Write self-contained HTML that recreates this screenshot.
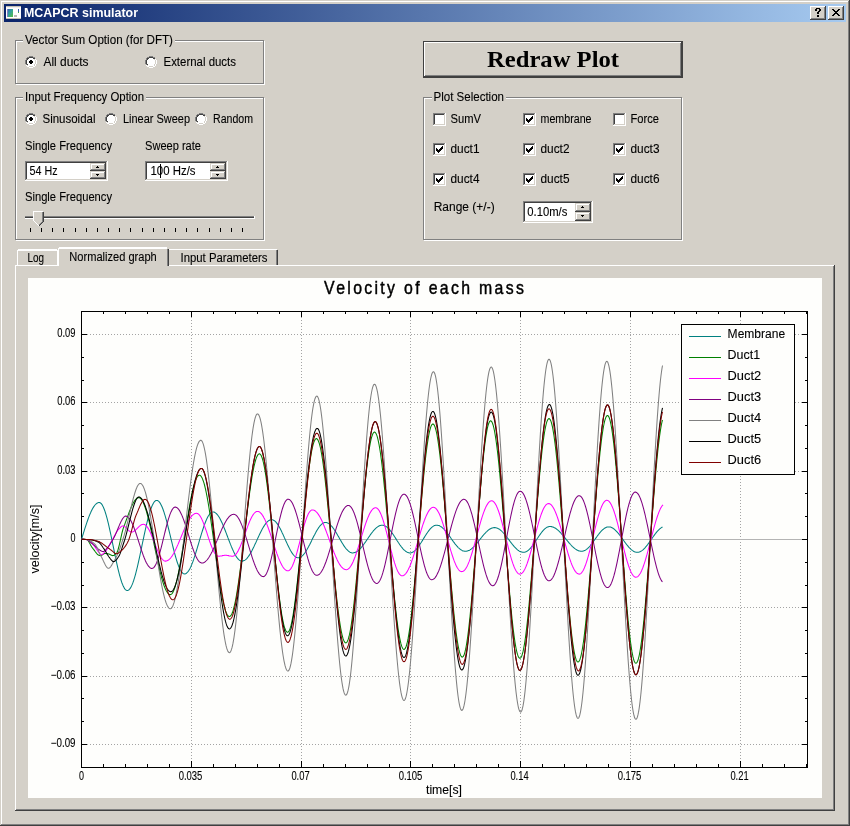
<!DOCTYPE html>
<html><head><meta charset="utf-8"><title>MCAPCR simulator</title>
<style>html,body{margin:0;padding:0;width:850px;height:826px;overflow:hidden;background:#d4d0c8;} svg{display:block;} text{shape-rendering:auto;}</style>
</head><body><div style="will-change:transform"><svg width="850" height="826" viewBox="0 0 850 826" shape-rendering="crispEdges"><rect x="0" y="0" width="850" height="826" fill="#d4d0c8"/><rect x="1" y="1" width="848" height="824" fill="#ffffff"/><rect x="2" y="2" width="846" height="822" fill="#808080"/><rect x="2" y="2" width="845" height="821" fill="#d4d0c8"/><rect x="849" y="0" width="1" height="826" fill="#404040"/><rect x="0" y="825" width="850" height="1" fill="#404040"/><rect x="848" y="1" width="1" height="824" fill="#808080"/><rect x="1" y="824" width="848" height="1" fill="#808080"/><rect x="1" y="1" width="847" height="1" fill="#ffffff"/><rect x="1" y="1" width="1" height="823" fill="#ffffff"/><rect x="2" y="2" width="846" height="822" fill="#d4d0c8"/><defs><linearGradient id="tg" x1="0" x2="1" y1="0" y2="0"><stop offset="0" stop-color="#0a246a"/><stop offset="1" stop-color="#a6caf0"/></linearGradient></defs><rect x="4" y="4" width="842" height="18" fill="url(#tg)"/><rect x="6" y="6" width="15" height="13" fill="#ffffff"/><rect x="6" y="6" width="15" height="1" fill="#c4c0b4"/><rect x="6" y="18" width="15" height="1" fill="#c4c0b4"/><rect x="7" y="7" width="13" height="1" fill="#f0f0f0"/><defs><linearGradient id="ig" x1="0" y1="0" x2="1" y2="1"><stop offset="0" stop-color="#3a5ab8"/><stop offset="0.45" stop-color="#30a0a0"/><stop offset="1" stop-color="#58c040"/></linearGradient></defs><rect x="7" y="9" width="6" height="8" fill="url(#ig)"/><rect x="7" y="9" width="1" height="8" fill="#8080c0"/><rect x="18" y="9" width="1" height="4" fill="#3a60b0"/><rect x="18" y="12" width="1" height="1" fill="#40b040"/><rect x="14" y="15" width="3" height="2" fill="#b8b8b8"/><text x="24" y="17" font-family="Liberation Sans" font-size="12" font-weight="bold" fill="#fff" text-anchor="start" textLength="114" lengthAdjust="spacingAndGlyphs" >MCAPCR simulator</text><rect x="810" y="6" width="16" height="14" fill="#404040"/><rect x="810" y="6" width="15" height="13" fill="#ffffff"/><rect x="811" y="7" width="14" height="12" fill="#808080"/><rect x="811" y="7" width="13" height="11" fill="#d4d0c8"/><rect x="828" y="6" width="16" height="14" fill="#404040"/><rect x="828" y="6" width="15" height="13" fill="#ffffff"/><rect x="829" y="7" width="14" height="12" fill="#808080"/><rect x="829" y="7" width="13" height="11" fill="#d4d0c8"/><rect x="16" y="41" width="249" height="44" fill="#ffffff"/><rect x="17" y="42" width="247" height="42" fill="#d4d0c8"/><rect x="15" y="40" width="249" height="1" fill="#808080"/><rect x="15" y="40" width="1" height="44" fill="#808080"/><rect x="15" y="83" width="249" height="1" fill="#808080"/><rect x="263" y="40" width="1" height="44" fill="#808080"/><rect x="23" y="38" width="152" height="5" fill="#d4d0c8"/><text x="25" y="44" font-family="Liberation Sans" font-size="12" font-weight="normal" fill="#000" text-anchor="start" textLength="148" lengthAdjust="spacingAndGlyphs" stroke="#000" stroke-width="0.1" >Vector Sum Option (for DFT)</text><rect x="29" y="56" width="4" height="1" fill="#808080"/><rect x="27" y="57" width="2" height="1" fill="#808080"/><rect x="29" y="57" width="4" height="1" fill="#404040"/><rect x="33" y="57" width="2" height="1" fill="#808080"/><rect x="26" y="58" width="1" height="1" fill="#808080"/><rect x="27" y="58" width="2" height="1" fill="#404040"/><rect x="29" y="58" width="4" height="1" fill="#ffffff"/><rect x="33" y="58" width="2" height="1" fill="#404040"/><rect x="35" y="58" width="1" height="1" fill="#d4d0c8"/><rect x="26" y="59" width="1" height="1" fill="#808080"/><rect x="27" y="59" width="1" height="1" fill="#404040"/><rect x="28" y="59" width="6" height="1" fill="#ffffff"/><rect x="34" y="59" width="1" height="1" fill="#d4d0c8"/><rect x="35" y="59" width="1" height="1" fill="#ffffff"/><rect x="25" y="60" width="1" height="1" fill="#808080"/><rect x="26" y="60" width="1" height="1" fill="#404040"/><rect x="27" y="60" width="8" height="1" fill="#ffffff"/><rect x="35" y="60" width="1" height="1" fill="#d4d0c8"/><rect x="36" y="60" width="1" height="1" fill="#ffffff"/><rect x="25" y="61" width="1" height="1" fill="#808080"/><rect x="26" y="61" width="1" height="1" fill="#404040"/><rect x="27" y="61" width="8" height="1" fill="#ffffff"/><rect x="35" y="61" width="1" height="1" fill="#d4d0c8"/><rect x="36" y="61" width="1" height="1" fill="#ffffff"/><rect x="25" y="62" width="1" height="1" fill="#808080"/><rect x="26" y="62" width="1" height="1" fill="#404040"/><rect x="27" y="62" width="8" height="1" fill="#ffffff"/><rect x="35" y="62" width="1" height="1" fill="#d4d0c8"/><rect x="36" y="62" width="1" height="1" fill="#ffffff"/><rect x="25" y="63" width="1" height="1" fill="#808080"/><rect x="26" y="63" width="1" height="1" fill="#404040"/><rect x="27" y="63" width="8" height="1" fill="#ffffff"/><rect x="35" y="63" width="1" height="1" fill="#d4d0c8"/><rect x="36" y="63" width="1" height="1" fill="#ffffff"/><rect x="26" y="64" width="1" height="1" fill="#808080"/><rect x="27" y="64" width="1" height="1" fill="#404040"/><rect x="28" y="64" width="6" height="1" fill="#ffffff"/><rect x="34" y="64" width="1" height="1" fill="#d4d0c8"/><rect x="35" y="64" width="1" height="1" fill="#ffffff"/><rect x="26" y="65" width="1" height="1" fill="#ffffff"/><rect x="27" y="65" width="1" height="1" fill="#d4d0c8"/><rect x="28" y="65" width="6" height="1" fill="#ffffff"/><rect x="34" y="65" width="1" height="1" fill="#d4d0c8"/><rect x="35" y="65" width="1" height="1" fill="#ffffff"/><rect x="27" y="66" width="2" height="1" fill="#ffffff"/><rect x="29" y="66" width="4" height="1" fill="#d4d0c8"/><rect x="33" y="66" width="2" height="1" fill="#ffffff"/><rect x="29" y="67" width="4" height="1" fill="#ffffff"/><rect x="30" y="60" width="2" height="1" fill="#000"/><rect x="29" y="61" width="4" height="1" fill="#000"/><rect x="29" y="62" width="4" height="1" fill="#000"/><rect x="30" y="63" width="2" height="1" fill="#000"/><text x="43.5" y="66" font-family="Liberation Sans" font-size="12" font-weight="normal" fill="#000" text-anchor="start" textLength="45" lengthAdjust="spacingAndGlyphs" stroke="#000" stroke-width="0.1" >All ducts</text><rect x="149" y="56" width="4" height="1" fill="#808080"/><rect x="147" y="57" width="2" height="1" fill="#808080"/><rect x="149" y="57" width="4" height="1" fill="#404040"/><rect x="153" y="57" width="2" height="1" fill="#808080"/><rect x="146" y="58" width="1" height="1" fill="#808080"/><rect x="147" y="58" width="2" height="1" fill="#404040"/><rect x="149" y="58" width="4" height="1" fill="#ffffff"/><rect x="153" y="58" width="2" height="1" fill="#404040"/><rect x="155" y="58" width="1" height="1" fill="#d4d0c8"/><rect x="146" y="59" width="1" height="1" fill="#808080"/><rect x="147" y="59" width="1" height="1" fill="#404040"/><rect x="148" y="59" width="6" height="1" fill="#ffffff"/><rect x="154" y="59" width="1" height="1" fill="#d4d0c8"/><rect x="155" y="59" width="1" height="1" fill="#ffffff"/><rect x="145" y="60" width="1" height="1" fill="#808080"/><rect x="146" y="60" width="1" height="1" fill="#404040"/><rect x="147" y="60" width="8" height="1" fill="#ffffff"/><rect x="155" y="60" width="1" height="1" fill="#d4d0c8"/><rect x="156" y="60" width="1" height="1" fill="#ffffff"/><rect x="145" y="61" width="1" height="1" fill="#808080"/><rect x="146" y="61" width="1" height="1" fill="#404040"/><rect x="147" y="61" width="8" height="1" fill="#ffffff"/><rect x="155" y="61" width="1" height="1" fill="#d4d0c8"/><rect x="156" y="61" width="1" height="1" fill="#ffffff"/><rect x="145" y="62" width="1" height="1" fill="#808080"/><rect x="146" y="62" width="1" height="1" fill="#404040"/><rect x="147" y="62" width="8" height="1" fill="#ffffff"/><rect x="155" y="62" width="1" height="1" fill="#d4d0c8"/><rect x="156" y="62" width="1" height="1" fill="#ffffff"/><rect x="145" y="63" width="1" height="1" fill="#808080"/><rect x="146" y="63" width="1" height="1" fill="#404040"/><rect x="147" y="63" width="8" height="1" fill="#ffffff"/><rect x="155" y="63" width="1" height="1" fill="#d4d0c8"/><rect x="156" y="63" width="1" height="1" fill="#ffffff"/><rect x="146" y="64" width="1" height="1" fill="#808080"/><rect x="147" y="64" width="1" height="1" fill="#404040"/><rect x="148" y="64" width="6" height="1" fill="#ffffff"/><rect x="154" y="64" width="1" height="1" fill="#d4d0c8"/><rect x="155" y="64" width="1" height="1" fill="#ffffff"/><rect x="146" y="65" width="1" height="1" fill="#ffffff"/><rect x="147" y="65" width="1" height="1" fill="#d4d0c8"/><rect x="148" y="65" width="6" height="1" fill="#ffffff"/><rect x="154" y="65" width="1" height="1" fill="#d4d0c8"/><rect x="155" y="65" width="1" height="1" fill="#ffffff"/><rect x="147" y="66" width="2" height="1" fill="#ffffff"/><rect x="149" y="66" width="4" height="1" fill="#d4d0c8"/><rect x="153" y="66" width="2" height="1" fill="#ffffff"/><rect x="149" y="67" width="4" height="1" fill="#ffffff"/><text x="163.5" y="66" font-family="Liberation Sans" font-size="12" font-weight="normal" fill="#000" text-anchor="start" textLength="72.5" lengthAdjust="spacingAndGlyphs" stroke="#000" stroke-width="0.1" >External ducts</text><rect x="16" y="98" width="249" height="143" fill="#ffffff"/><rect x="17" y="99" width="247" height="141" fill="#d4d0c8"/><rect x="15" y="97" width="249" height="1" fill="#808080"/><rect x="15" y="97" width="1" height="143" fill="#808080"/><rect x="15" y="239" width="249" height="1" fill="#808080"/><rect x="263" y="97" width="1" height="143" fill="#808080"/><rect x="23" y="95" width="123" height="5" fill="#d4d0c8"/><text x="25" y="101" font-family="Liberation Sans" font-size="12" font-weight="normal" fill="#000" text-anchor="start" textLength="119" lengthAdjust="spacingAndGlyphs" stroke="#000" stroke-width="0.1" >Input Frequency Option</text><rect x="29" y="113" width="4" height="1" fill="#808080"/><rect x="27" y="114" width="2" height="1" fill="#808080"/><rect x="29" y="114" width="4" height="1" fill="#404040"/><rect x="33" y="114" width="2" height="1" fill="#808080"/><rect x="26" y="115" width="1" height="1" fill="#808080"/><rect x="27" y="115" width="2" height="1" fill="#404040"/><rect x="29" y="115" width="4" height="1" fill="#ffffff"/><rect x="33" y="115" width="2" height="1" fill="#404040"/><rect x="35" y="115" width="1" height="1" fill="#d4d0c8"/><rect x="26" y="116" width="1" height="1" fill="#808080"/><rect x="27" y="116" width="1" height="1" fill="#404040"/><rect x="28" y="116" width="6" height="1" fill="#ffffff"/><rect x="34" y="116" width="1" height="1" fill="#d4d0c8"/><rect x="35" y="116" width="1" height="1" fill="#ffffff"/><rect x="25" y="117" width="1" height="1" fill="#808080"/><rect x="26" y="117" width="1" height="1" fill="#404040"/><rect x="27" y="117" width="8" height="1" fill="#ffffff"/><rect x="35" y="117" width="1" height="1" fill="#d4d0c8"/><rect x="36" y="117" width="1" height="1" fill="#ffffff"/><rect x="25" y="118" width="1" height="1" fill="#808080"/><rect x="26" y="118" width="1" height="1" fill="#404040"/><rect x="27" y="118" width="8" height="1" fill="#ffffff"/><rect x="35" y="118" width="1" height="1" fill="#d4d0c8"/><rect x="36" y="118" width="1" height="1" fill="#ffffff"/><rect x="25" y="119" width="1" height="1" fill="#808080"/><rect x="26" y="119" width="1" height="1" fill="#404040"/><rect x="27" y="119" width="8" height="1" fill="#ffffff"/><rect x="35" y="119" width="1" height="1" fill="#d4d0c8"/><rect x="36" y="119" width="1" height="1" fill="#ffffff"/><rect x="25" y="120" width="1" height="1" fill="#808080"/><rect x="26" y="120" width="1" height="1" fill="#404040"/><rect x="27" y="120" width="8" height="1" fill="#ffffff"/><rect x="35" y="120" width="1" height="1" fill="#d4d0c8"/><rect x="36" y="120" width="1" height="1" fill="#ffffff"/><rect x="26" y="121" width="1" height="1" fill="#808080"/><rect x="27" y="121" width="1" height="1" fill="#404040"/><rect x="28" y="121" width="6" height="1" fill="#ffffff"/><rect x="34" y="121" width="1" height="1" fill="#d4d0c8"/><rect x="35" y="121" width="1" height="1" fill="#ffffff"/><rect x="26" y="122" width="1" height="1" fill="#ffffff"/><rect x="27" y="122" width="1" height="1" fill="#d4d0c8"/><rect x="28" y="122" width="6" height="1" fill="#ffffff"/><rect x="34" y="122" width="1" height="1" fill="#d4d0c8"/><rect x="35" y="122" width="1" height="1" fill="#ffffff"/><rect x="27" y="123" width="2" height="1" fill="#ffffff"/><rect x="29" y="123" width="4" height="1" fill="#d4d0c8"/><rect x="33" y="123" width="2" height="1" fill="#ffffff"/><rect x="29" y="124" width="4" height="1" fill="#ffffff"/><rect x="30" y="117" width="2" height="1" fill="#000"/><rect x="29" y="118" width="4" height="1" fill="#000"/><rect x="29" y="119" width="4" height="1" fill="#000"/><rect x="30" y="120" width="2" height="1" fill="#000"/><text x="42.5" y="123" font-family="Liberation Sans" font-size="12" font-weight="normal" fill="#000" text-anchor="start" textLength="53" lengthAdjust="spacingAndGlyphs" stroke="#000" stroke-width="0.1" >Sinusoidal</text><rect x="109" y="113" width="4" height="1" fill="#808080"/><rect x="107" y="114" width="2" height="1" fill="#808080"/><rect x="109" y="114" width="4" height="1" fill="#404040"/><rect x="113" y="114" width="2" height="1" fill="#808080"/><rect x="106" y="115" width="1" height="1" fill="#808080"/><rect x="107" y="115" width="2" height="1" fill="#404040"/><rect x="109" y="115" width="4" height="1" fill="#ffffff"/><rect x="113" y="115" width="2" height="1" fill="#404040"/><rect x="115" y="115" width="1" height="1" fill="#d4d0c8"/><rect x="106" y="116" width="1" height="1" fill="#808080"/><rect x="107" y="116" width="1" height="1" fill="#404040"/><rect x="108" y="116" width="6" height="1" fill="#ffffff"/><rect x="114" y="116" width="1" height="1" fill="#d4d0c8"/><rect x="115" y="116" width="1" height="1" fill="#ffffff"/><rect x="105" y="117" width="1" height="1" fill="#808080"/><rect x="106" y="117" width="1" height="1" fill="#404040"/><rect x="107" y="117" width="8" height="1" fill="#ffffff"/><rect x="115" y="117" width="1" height="1" fill="#d4d0c8"/><rect x="116" y="117" width="1" height="1" fill="#ffffff"/><rect x="105" y="118" width="1" height="1" fill="#808080"/><rect x="106" y="118" width="1" height="1" fill="#404040"/><rect x="107" y="118" width="8" height="1" fill="#ffffff"/><rect x="115" y="118" width="1" height="1" fill="#d4d0c8"/><rect x="116" y="118" width="1" height="1" fill="#ffffff"/><rect x="105" y="119" width="1" height="1" fill="#808080"/><rect x="106" y="119" width="1" height="1" fill="#404040"/><rect x="107" y="119" width="8" height="1" fill="#ffffff"/><rect x="115" y="119" width="1" height="1" fill="#d4d0c8"/><rect x="116" y="119" width="1" height="1" fill="#ffffff"/><rect x="105" y="120" width="1" height="1" fill="#808080"/><rect x="106" y="120" width="1" height="1" fill="#404040"/><rect x="107" y="120" width="8" height="1" fill="#ffffff"/><rect x="115" y="120" width="1" height="1" fill="#d4d0c8"/><rect x="116" y="120" width="1" height="1" fill="#ffffff"/><rect x="106" y="121" width="1" height="1" fill="#808080"/><rect x="107" y="121" width="1" height="1" fill="#404040"/><rect x="108" y="121" width="6" height="1" fill="#ffffff"/><rect x="114" y="121" width="1" height="1" fill="#d4d0c8"/><rect x="115" y="121" width="1" height="1" fill="#ffffff"/><rect x="106" y="122" width="1" height="1" fill="#ffffff"/><rect x="107" y="122" width="1" height="1" fill="#d4d0c8"/><rect x="108" y="122" width="6" height="1" fill="#ffffff"/><rect x="114" y="122" width="1" height="1" fill="#d4d0c8"/><rect x="115" y="122" width="1" height="1" fill="#ffffff"/><rect x="107" y="123" width="2" height="1" fill="#ffffff"/><rect x="109" y="123" width="4" height="1" fill="#d4d0c8"/><rect x="113" y="123" width="2" height="1" fill="#ffffff"/><rect x="109" y="124" width="4" height="1" fill="#ffffff"/><text x="123" y="123" font-family="Liberation Sans" font-size="12" font-weight="normal" fill="#000" text-anchor="start" textLength="67" lengthAdjust="spacingAndGlyphs" stroke="#000" stroke-width="0.1" >Linear Sweep</text><rect x="199" y="113" width="4" height="1" fill="#808080"/><rect x="197" y="114" width="2" height="1" fill="#808080"/><rect x="199" y="114" width="4" height="1" fill="#404040"/><rect x="203" y="114" width="2" height="1" fill="#808080"/><rect x="196" y="115" width="1" height="1" fill="#808080"/><rect x="197" y="115" width="2" height="1" fill="#404040"/><rect x="199" y="115" width="4" height="1" fill="#ffffff"/><rect x="203" y="115" width="2" height="1" fill="#404040"/><rect x="205" y="115" width="1" height="1" fill="#d4d0c8"/><rect x="196" y="116" width="1" height="1" fill="#808080"/><rect x="197" y="116" width="1" height="1" fill="#404040"/><rect x="198" y="116" width="6" height="1" fill="#ffffff"/><rect x="204" y="116" width="1" height="1" fill="#d4d0c8"/><rect x="205" y="116" width="1" height="1" fill="#ffffff"/><rect x="195" y="117" width="1" height="1" fill="#808080"/><rect x="196" y="117" width="1" height="1" fill="#404040"/><rect x="197" y="117" width="8" height="1" fill="#ffffff"/><rect x="205" y="117" width="1" height="1" fill="#d4d0c8"/><rect x="206" y="117" width="1" height="1" fill="#ffffff"/><rect x="195" y="118" width="1" height="1" fill="#808080"/><rect x="196" y="118" width="1" height="1" fill="#404040"/><rect x="197" y="118" width="8" height="1" fill="#ffffff"/><rect x="205" y="118" width="1" height="1" fill="#d4d0c8"/><rect x="206" y="118" width="1" height="1" fill="#ffffff"/><rect x="195" y="119" width="1" height="1" fill="#808080"/><rect x="196" y="119" width="1" height="1" fill="#404040"/><rect x="197" y="119" width="8" height="1" fill="#ffffff"/><rect x="205" y="119" width="1" height="1" fill="#d4d0c8"/><rect x="206" y="119" width="1" height="1" fill="#ffffff"/><rect x="195" y="120" width="1" height="1" fill="#808080"/><rect x="196" y="120" width="1" height="1" fill="#404040"/><rect x="197" y="120" width="8" height="1" fill="#ffffff"/><rect x="205" y="120" width="1" height="1" fill="#d4d0c8"/><rect x="206" y="120" width="1" height="1" fill="#ffffff"/><rect x="196" y="121" width="1" height="1" fill="#808080"/><rect x="197" y="121" width="1" height="1" fill="#404040"/><rect x="198" y="121" width="6" height="1" fill="#ffffff"/><rect x="204" y="121" width="1" height="1" fill="#d4d0c8"/><rect x="205" y="121" width="1" height="1" fill="#ffffff"/><rect x="196" y="122" width="1" height="1" fill="#ffffff"/><rect x="197" y="122" width="1" height="1" fill="#d4d0c8"/><rect x="198" y="122" width="6" height="1" fill="#ffffff"/><rect x="204" y="122" width="1" height="1" fill="#d4d0c8"/><rect x="205" y="122" width="1" height="1" fill="#ffffff"/><rect x="197" y="123" width="2" height="1" fill="#ffffff"/><rect x="199" y="123" width="4" height="1" fill="#d4d0c8"/><rect x="203" y="123" width="2" height="1" fill="#ffffff"/><rect x="199" y="124" width="4" height="1" fill="#ffffff"/><text x="213" y="123" font-family="Liberation Sans" font-size="12" font-weight="normal" fill="#000" text-anchor="start" textLength="40" lengthAdjust="spacingAndGlyphs" stroke="#000" stroke-width="0.1" >Random</text><text x="25" y="150" font-family="Liberation Sans" font-size="12" font-weight="normal" fill="#000" text-anchor="start" textLength="87" lengthAdjust="spacingAndGlyphs" stroke="#000" stroke-width="0.1" >Single Frequency</text><text x="145" y="149.5" font-family="Liberation Sans" font-size="12" font-weight="normal" fill="#000" text-anchor="start" textLength="56" lengthAdjust="spacingAndGlyphs" stroke="#000" stroke-width="0.1" >Sweep rate</text><rect x="25" y="161" width="83" height="20" fill="#ffffff"/><rect x="25" y="161" width="82" height="19" fill="#808080"/><rect x="26" y="162" width="81" height="18" fill="#d4d0c8"/><rect x="26" y="162" width="80" height="17" fill="#404040"/><rect x="27" y="163" width="79" height="16" fill="#ffffff"/><rect x="90" y="163" width="16" height="8" fill="#404040"/><rect x="90" y="163" width="15" height="7" fill="#d4d0c8"/><rect x="91" y="164" width="14" height="6" fill="#808080"/><rect x="91" y="164" width="13" height="5" fill="#ffffff"/><rect x="92" y="165" width="12" height="4" fill="#d4d0c8"/><rect x="97" y="166" width="1" height="1" fill="#000"/><rect x="96" y="167" width="3" height="1" fill="#000"/><rect x="90" y="171" width="16" height="8" fill="#404040"/><rect x="90" y="171" width="15" height="7" fill="#d4d0c8"/><rect x="91" y="172" width="14" height="6" fill="#808080"/><rect x="91" y="172" width="13" height="5" fill="#ffffff"/><rect x="92" y="173" width="12" height="4" fill="#d4d0c8"/><rect x="96" y="174" width="3" height="1" fill="#000"/><rect x="97" y="175" width="1" height="1" fill="#000"/><text x="29.5" y="174.5" font-family="Liberation Sans" font-size="12" font-weight="normal" fill="#000" text-anchor="start" textLength="28" lengthAdjust="spacingAndGlyphs" stroke="#000" stroke-width="0.1" >54 Hz</text><rect x="145" y="161" width="83" height="20" fill="#ffffff"/><rect x="145" y="161" width="82" height="19" fill="#808080"/><rect x="146" y="162" width="81" height="18" fill="#d4d0c8"/><rect x="146" y="162" width="80" height="17" fill="#404040"/><rect x="147" y="163" width="79" height="16" fill="#ffffff"/><rect x="210" y="163" width="16" height="8" fill="#404040"/><rect x="210" y="163" width="15" height="7" fill="#d4d0c8"/><rect x="211" y="164" width="14" height="6" fill="#808080"/><rect x="211" y="164" width="13" height="5" fill="#ffffff"/><rect x="212" y="165" width="12" height="4" fill="#d4d0c8"/><rect x="217" y="166" width="1" height="1" fill="#000"/><rect x="216" y="167" width="3" height="1" fill="#000"/><rect x="210" y="171" width="16" height="8" fill="#404040"/><rect x="210" y="171" width="15" height="7" fill="#d4d0c8"/><rect x="211" y="172" width="14" height="6" fill="#808080"/><rect x="211" y="172" width="13" height="5" fill="#ffffff"/><rect x="212" y="173" width="12" height="4" fill="#d4d0c8"/><rect x="216" y="174" width="3" height="1" fill="#000"/><rect x="217" y="175" width="1" height="1" fill="#000"/><text x="150.5" y="174.5" font-family="Liberation Sans" font-size="12" font-weight="normal" fill="#000" text-anchor="start" textLength="45" lengthAdjust="spacingAndGlyphs" stroke="#000" stroke-width="0.1" >100 Hz/s</text><rect x="160" y="164" width="1" height="14" fill="#000"/><text x="25" y="200.5" font-family="Liberation Sans" font-size="12" font-weight="normal" fill="#000" text-anchor="start" textLength="87" lengthAdjust="spacingAndGlyphs" stroke="#000" stroke-width="0.1" >Single Frequency</text><rect x="25" y="216" width="229" height="1" fill="#808080"/><rect x="25" y="217" width="229" height="1" fill="#404040"/><rect x="25" y="218" width="230" height="1" fill="#ffffff"/><rect x="254" y="216" width="1" height="3" fill="#ffffff"/><path d="M33 211h11v10l-5 5h-1l-5-5z" fill="#d4d0c8"/><path d="M33 211h10v1h-9v9l5 5h-1l-5-5z" fill="#fff"/><path d="M43 212h1v9l-5 5h-1l5-5v-9z" fill="#404040"/><path d="M42 212h1v9l-4 4v-1l3-3z" fill="#808080"/><rect x="30" y="228" width="1" height="4" fill="#000"/><rect x="41" y="228" width="1" height="4" fill="#000"/><rect x="52" y="228" width="1" height="4" fill="#000"/><rect x="63" y="228" width="1" height="4" fill="#000"/><rect x="75" y="228" width="1" height="4" fill="#000"/><rect x="86" y="228" width="1" height="4" fill="#000"/><rect x="97" y="228" width="1" height="4" fill="#000"/><rect x="108" y="228" width="1" height="4" fill="#000"/><rect x="119" y="228" width="1" height="4" fill="#000"/><rect x="130" y="228" width="1" height="4" fill="#000"/><rect x="142" y="228" width="1" height="4" fill="#000"/><rect x="153" y="228" width="1" height="4" fill="#000"/><rect x="164" y="228" width="1" height="4" fill="#000"/><rect x="175" y="228" width="1" height="4" fill="#000"/><rect x="186" y="228" width="1" height="4" fill="#000"/><rect x="197" y="228" width="1" height="4" fill="#000"/><rect x="209" y="228" width="1" height="4" fill="#000"/><rect x="220" y="228" width="1" height="4" fill="#000"/><rect x="231" y="228" width="1" height="4" fill="#000"/><rect x="242" y="228" width="1" height="4" fill="#000"/><rect x="423" y="41" width="260" height="37" fill="#404040"/><rect x="424" y="42" width="257" height="34" fill="#ffffff"/><rect x="425" y="43" width="256" height="33" fill="#808080"/><rect x="425" y="43" width="255" height="32" fill="#d4d0c8"/><text x="487" y="67" font-family="Liberation Serif" font-size="24" font-weight="bold" fill="#000" text-anchor="start" textLength="132" lengthAdjust="spacingAndGlyphs" >Redraw Plot</text><rect x="424" y="98" width="259" height="143" fill="#ffffff"/><rect x="425" y="99" width="257" height="141" fill="#d4d0c8"/><rect x="423" y="97" width="259" height="1" fill="#808080"/><rect x="423" y="97" width="1" height="143" fill="#808080"/><rect x="423" y="239" width="259" height="1" fill="#808080"/><rect x="681" y="97" width="1" height="143" fill="#808080"/><rect x="431.5" y="95" width="74.5" height="5" fill="#d4d0c8"/><text x="433.5" y="101" font-family="Liberation Sans" font-size="12" font-weight="normal" fill="#000" text-anchor="start" textLength="70.5" lengthAdjust="spacingAndGlyphs" stroke="#000" stroke-width="0.1" >Plot Selection</text><rect x="433" y="113" width="13" height="13" fill="#ffffff"/><rect x="433" y="113" width="12" height="12" fill="#808080"/><rect x="434" y="114" width="11" height="11" fill="#d4d0c8"/><rect x="434" y="114" width="10" height="10" fill="#404040"/><rect x="435" y="115" width="9" height="9" fill="#ffffff"/><text x="450.5" y="123" font-family="Liberation Sans" font-size="12" font-weight="normal" fill="#000" text-anchor="start" textLength="30.5" lengthAdjust="spacingAndGlyphs" stroke="#000" stroke-width="0.1" >SumV</text><rect x="523" y="113" width="13" height="13" fill="#ffffff"/><rect x="523" y="113" width="12" height="12" fill="#808080"/><rect x="524" y="114" width="11" height="11" fill="#d4d0c8"/><rect x="524" y="114" width="10" height="10" fill="#404040"/><rect x="525" y="115" width="9" height="9" fill="#ffffff"/><rect x="532" y="116" width="1" height="1" fill="#000"/><rect x="531" y="117" width="2" height="1" fill="#000"/><rect x="526" y="118" width="1" height="1" fill="#000"/><rect x="530" y="118" width="3" height="1" fill="#000"/><rect x="526" y="119" width="2" height="1" fill="#000"/><rect x="529" y="119" width="3" height="1" fill="#000"/><rect x="526" y="120" width="5" height="1" fill="#000"/><rect x="527" y="121" width="3" height="1" fill="#000"/><rect x="528" y="122" width="1" height="1" fill="#000"/><text x="540.5" y="123" font-family="Liberation Sans" font-size="12" font-weight="normal" fill="#000" text-anchor="start" textLength="51" lengthAdjust="spacingAndGlyphs" stroke="#000" stroke-width="0.1" >membrane</text><rect x="613" y="113" width="13" height="13" fill="#ffffff"/><rect x="613" y="113" width="12" height="12" fill="#808080"/><rect x="614" y="114" width="11" height="11" fill="#d4d0c8"/><rect x="614" y="114" width="10" height="10" fill="#404040"/><rect x="615" y="115" width="9" height="9" fill="#ffffff"/><text x="630.5" y="123" font-family="Liberation Sans" font-size="12" font-weight="normal" fill="#000" text-anchor="start" textLength="28.5" lengthAdjust="spacingAndGlyphs" stroke="#000" stroke-width="0.1" >Force</text><rect x="433" y="143" width="13" height="13" fill="#ffffff"/><rect x="433" y="143" width="12" height="12" fill="#808080"/><rect x="434" y="144" width="11" height="11" fill="#d4d0c8"/><rect x="434" y="144" width="10" height="10" fill="#404040"/><rect x="435" y="145" width="9" height="9" fill="#ffffff"/><rect x="442" y="146" width="1" height="1" fill="#000"/><rect x="441" y="147" width="2" height="1" fill="#000"/><rect x="436" y="148" width="1" height="1" fill="#000"/><rect x="440" y="148" width="3" height="1" fill="#000"/><rect x="436" y="149" width="2" height="1" fill="#000"/><rect x="439" y="149" width="3" height="1" fill="#000"/><rect x="436" y="150" width="5" height="1" fill="#000"/><rect x="437" y="151" width="3" height="1" fill="#000"/><rect x="438" y="152" width="1" height="1" fill="#000"/><text x="450.5" y="153" font-family="Liberation Sans" font-size="12" font-weight="normal" fill="#000" text-anchor="start" textLength="29" lengthAdjust="spacingAndGlyphs" stroke="#000" stroke-width="0.1" >duct1</text><rect x="523" y="143" width="13" height="13" fill="#ffffff"/><rect x="523" y="143" width="12" height="12" fill="#808080"/><rect x="524" y="144" width="11" height="11" fill="#d4d0c8"/><rect x="524" y="144" width="10" height="10" fill="#404040"/><rect x="525" y="145" width="9" height="9" fill="#ffffff"/><rect x="532" y="146" width="1" height="1" fill="#000"/><rect x="531" y="147" width="2" height="1" fill="#000"/><rect x="526" y="148" width="1" height="1" fill="#000"/><rect x="530" y="148" width="3" height="1" fill="#000"/><rect x="526" y="149" width="2" height="1" fill="#000"/><rect x="529" y="149" width="3" height="1" fill="#000"/><rect x="526" y="150" width="5" height="1" fill="#000"/><rect x="527" y="151" width="3" height="1" fill="#000"/><rect x="528" y="152" width="1" height="1" fill="#000"/><text x="540.5" y="153" font-family="Liberation Sans" font-size="12" font-weight="normal" fill="#000" text-anchor="start" textLength="29" lengthAdjust="spacingAndGlyphs" stroke="#000" stroke-width="0.1" >duct2</text><rect x="613" y="143" width="13" height="13" fill="#ffffff"/><rect x="613" y="143" width="12" height="12" fill="#808080"/><rect x="614" y="144" width="11" height="11" fill="#d4d0c8"/><rect x="614" y="144" width="10" height="10" fill="#404040"/><rect x="615" y="145" width="9" height="9" fill="#ffffff"/><rect x="622" y="146" width="1" height="1" fill="#000"/><rect x="621" y="147" width="2" height="1" fill="#000"/><rect x="616" y="148" width="1" height="1" fill="#000"/><rect x="620" y="148" width="3" height="1" fill="#000"/><rect x="616" y="149" width="2" height="1" fill="#000"/><rect x="619" y="149" width="3" height="1" fill="#000"/><rect x="616" y="150" width="5" height="1" fill="#000"/><rect x="617" y="151" width="3" height="1" fill="#000"/><rect x="618" y="152" width="1" height="1" fill="#000"/><text x="630.5" y="153" font-family="Liberation Sans" font-size="12" font-weight="normal" fill="#000" text-anchor="start" textLength="29" lengthAdjust="spacingAndGlyphs" stroke="#000" stroke-width="0.1" >duct3</text><rect x="433" y="173" width="13" height="13" fill="#ffffff"/><rect x="433" y="173" width="12" height="12" fill="#808080"/><rect x="434" y="174" width="11" height="11" fill="#d4d0c8"/><rect x="434" y="174" width="10" height="10" fill="#404040"/><rect x="435" y="175" width="9" height="9" fill="#ffffff"/><rect x="442" y="176" width="1" height="1" fill="#000"/><rect x="441" y="177" width="2" height="1" fill="#000"/><rect x="436" y="178" width="1" height="1" fill="#000"/><rect x="440" y="178" width="3" height="1" fill="#000"/><rect x="436" y="179" width="2" height="1" fill="#000"/><rect x="439" y="179" width="3" height="1" fill="#000"/><rect x="436" y="180" width="5" height="1" fill="#000"/><rect x="437" y="181" width="3" height="1" fill="#000"/><rect x="438" y="182" width="1" height="1" fill="#000"/><text x="450.5" y="183" font-family="Liberation Sans" font-size="12" font-weight="normal" fill="#000" text-anchor="start" textLength="29" lengthAdjust="spacingAndGlyphs" stroke="#000" stroke-width="0.1" >duct4</text><rect x="523" y="173" width="13" height="13" fill="#ffffff"/><rect x="523" y="173" width="12" height="12" fill="#808080"/><rect x="524" y="174" width="11" height="11" fill="#d4d0c8"/><rect x="524" y="174" width="10" height="10" fill="#404040"/><rect x="525" y="175" width="9" height="9" fill="#ffffff"/><rect x="532" y="176" width="1" height="1" fill="#000"/><rect x="531" y="177" width="2" height="1" fill="#000"/><rect x="526" y="178" width="1" height="1" fill="#000"/><rect x="530" y="178" width="3" height="1" fill="#000"/><rect x="526" y="179" width="2" height="1" fill="#000"/><rect x="529" y="179" width="3" height="1" fill="#000"/><rect x="526" y="180" width="5" height="1" fill="#000"/><rect x="527" y="181" width="3" height="1" fill="#000"/><rect x="528" y="182" width="1" height="1" fill="#000"/><text x="540.5" y="183" font-family="Liberation Sans" font-size="12" font-weight="normal" fill="#000" text-anchor="start" textLength="29" lengthAdjust="spacingAndGlyphs" stroke="#000" stroke-width="0.1" >duct5</text><rect x="613" y="173" width="13" height="13" fill="#ffffff"/><rect x="613" y="173" width="12" height="12" fill="#808080"/><rect x="614" y="174" width="11" height="11" fill="#d4d0c8"/><rect x="614" y="174" width="10" height="10" fill="#404040"/><rect x="615" y="175" width="9" height="9" fill="#ffffff"/><rect x="622" y="176" width="1" height="1" fill="#000"/><rect x="621" y="177" width="2" height="1" fill="#000"/><rect x="616" y="178" width="1" height="1" fill="#000"/><rect x="620" y="178" width="3" height="1" fill="#000"/><rect x="616" y="179" width="2" height="1" fill="#000"/><rect x="619" y="179" width="3" height="1" fill="#000"/><rect x="616" y="180" width="5" height="1" fill="#000"/><rect x="617" y="181" width="3" height="1" fill="#000"/><rect x="618" y="182" width="1" height="1" fill="#000"/><text x="630.5" y="183" font-family="Liberation Sans" font-size="12" font-weight="normal" fill="#000" text-anchor="start" textLength="29" lengthAdjust="spacingAndGlyphs" stroke="#000" stroke-width="0.1" >duct6</text><text x="433.7" y="210.5" font-family="Liberation Sans" font-size="12" font-weight="normal" fill="#000" text-anchor="start" textLength="61" lengthAdjust="spacingAndGlyphs" stroke="#000" stroke-width="0.1" >Range (+/-)</text><rect x="523" y="201" width="70" height="22" fill="#ffffff"/><rect x="523" y="201" width="69" height="21" fill="#808080"/><rect x="524" y="202" width="68" height="20" fill="#d4d0c8"/><rect x="524" y="202" width="67" height="19" fill="#404040"/><rect x="525" y="203" width="66" height="18" fill="#ffffff"/><rect x="575" y="203" width="16" height="9" fill="#404040"/><rect x="575" y="203" width="15" height="8" fill="#d4d0c8"/><rect x="576" y="204" width="14" height="7" fill="#808080"/><rect x="576" y="204" width="13" height="6" fill="#ffffff"/><rect x="577" y="205" width="12" height="5" fill="#d4d0c8"/><rect x="582" y="206" width="1" height="1" fill="#000"/><rect x="581" y="207" width="3" height="1" fill="#000"/><rect x="575" y="212" width="16" height="9" fill="#404040"/><rect x="575" y="212" width="15" height="8" fill="#d4d0c8"/><rect x="576" y="213" width="14" height="7" fill="#808080"/><rect x="576" y="213" width="13" height="6" fill="#ffffff"/><rect x="577" y="214" width="12" height="5" fill="#d4d0c8"/><rect x="581" y="215" width="3" height="1" fill="#000"/><rect x="582" y="216" width="1" height="1" fill="#000"/><text x="527.3" y="216" font-family="Liberation Sans" font-size="12" font-weight="normal" fill="#000" text-anchor="start" textLength="40" lengthAdjust="spacingAndGlyphs" stroke="#000" stroke-width="0.1" >0.10m/s</text><rect x="15" y="265" width="820" height="546" fill="#404040"/><rect x="15" y="265" width="819" height="545" fill="#ffffff"/><rect x="16" y="266" width="818" height="544" fill="#808080"/><rect x="16" y="266" width="817" height="543" fill="#d4d0c8"/><rect x="17" y="250" width="41" height="15" fill="#ffffff"/><rect x="18" y="249" width="39" height="1" fill="#ffffff"/><rect x="18" y="251" width="39" height="14" fill="#d4d0c8"/><rect x="58" y="248" width="111" height="18" fill="#404040"/><rect x="58" y="248" width="110" height="18" fill="#ffffff"/><rect x="59" y="247" width="108" height="1" fill="#ffffff"/><rect x="59" y="249" width="108" height="17" fill="#808080"/><rect x="59" y="249" width="107" height="17" fill="#d4d0c8"/><rect x="167" y="248" width="1" height="1" fill="#d4d0c8"/><rect x="168" y="248" width="1" height="1" fill="#d4d0c8"/><rect x="167" y="249" width="1" height="17" fill="#808080"/><rect x="168" y="249" width="1" height="16" fill="#404040"/><rect x="59" y="249" width="108" height="17" fill="#d4d0c8"/><rect x="169" y="249" width="108" height="1" fill="#ffffff"/><rect x="169" y="250" width="107" height="15" fill="#d4d0c8"/><rect x="276" y="250" width="1" height="15" fill="#808080"/><rect x="277" y="250" width="1" height="15" fill="#404040"/><text x="27.6" y="262" font-family="Liberation Sans" font-size="12" font-weight="normal" fill="#000" text-anchor="start" textLength="16.5" lengthAdjust="spacingAndGlyphs" stroke="#000" stroke-width="0.1" >Log</text><text x="69.3" y="261" font-family="Liberation Sans" font-size="12" font-weight="normal" fill="#000" text-anchor="start" textLength="87.5" lengthAdjust="spacingAndGlyphs" stroke="#000" stroke-width="0.1" >Normalized graph</text><text x="180.5" y="261.5" font-family="Liberation Sans" font-size="12" font-weight="normal" fill="#000" text-anchor="start" textLength="87" lengthAdjust="spacingAndGlyphs" stroke="#000" stroke-width="0.1" >Input Parameters</text><rect x="28" y="278" width="794" height="520" fill="#fefefc"/><rect x="816" y="8" width="4" height="1" fill="#000"/><rect x="815" y="9" width="2" height="1" fill="#000"/><rect x="819" y="9" width="2" height="1" fill="#000"/><rect x="815" y="10" width="2" height="1" fill="#000"/><rect x="819" y="10" width="2" height="1" fill="#000"/><rect x="818" y="11" width="2" height="1" fill="#000"/><rect x="817" y="12" width="2" height="1" fill="#000"/><rect x="817" y="13" width="2" height="1" fill="#000"/><rect x="817" y="15" width="2" height="1" fill="#000"/><rect x="817" y="16" width="2" height="1" fill="#000"/><rect x="832" y="9" width="2" height="1" fill="#000"/><rect x="838" y="9" width="2" height="1" fill="#000"/><rect x="833" y="10" width="2" height="1" fill="#000"/><rect x="837" y="10" width="2" height="1" fill="#000"/><rect x="834" y="11" width="4" height="1" fill="#000"/><rect x="835" y="12" width="2" height="1" fill="#000"/><rect x="834" y="13" width="4" height="1" fill="#000"/><rect x="833" y="14" width="2" height="1" fill="#000"/><rect x="837" y="14" width="2" height="1" fill="#000"/><rect x="832" y="15" width="2" height="1" fill="#000"/><rect x="838" y="15" width="2" height="1" fill="#000"/><text x="0" y="0" font-family="Liberation Sans" font-size="18" text-anchor="middle" textLength="227" lengthAdjust="spacing" stroke="#000" stroke-width="0.45" transform="translate(424,294) scale(0.88,1)">Velocity of each mass</text><path d="M191 314h1v1h-1zM191 317h1v1h-1zM191 320h1v1h-1zM191 323h1v1h-1zM191 326h1v1h-1zM191 329h1v1h-1zM191 332h1v1h-1zM191 335h1v1h-1zM191 338h1v1h-1zM191 341h1v1h-1zM191 344h1v1h-1zM191 347h1v1h-1zM191 350h1v1h-1zM191 353h1v1h-1zM191 356h1v1h-1zM191 359h1v1h-1zM191 362h1v1h-1zM191 365h1v1h-1zM191 368h1v1h-1zM191 371h1v1h-1zM191 374h1v1h-1zM191 377h1v1h-1zM191 380h1v1h-1zM191 383h1v1h-1zM191 386h1v1h-1zM191 389h1v1h-1zM191 392h1v1h-1zM191 395h1v1h-1zM191 398h1v1h-1zM191 401h1v1h-1zM191 404h1v1h-1zM191 407h1v1h-1zM191 410h1v1h-1zM191 413h1v1h-1zM191 416h1v1h-1zM191 419h1v1h-1zM191 422h1v1h-1zM191 425h1v1h-1zM191 428h1v1h-1zM191 431h1v1h-1zM191 434h1v1h-1zM191 437h1v1h-1zM191 440h1v1h-1zM191 443h1v1h-1zM191 446h1v1h-1zM191 449h1v1h-1zM191 452h1v1h-1zM191 455h1v1h-1zM191 458h1v1h-1zM191 461h1v1h-1zM191 464h1v1h-1zM191 467h1v1h-1zM191 470h1v1h-1zM191 473h1v1h-1zM191 476h1v1h-1zM191 479h1v1h-1zM191 482h1v1h-1zM191 485h1v1h-1zM191 488h1v1h-1zM191 491h1v1h-1zM191 494h1v1h-1zM191 497h1v1h-1zM191 500h1v1h-1zM191 503h1v1h-1zM191 506h1v1h-1zM191 509h1v1h-1zM191 512h1v1h-1zM191 515h1v1h-1zM191 518h1v1h-1zM191 521h1v1h-1zM191 524h1v1h-1zM191 527h1v1h-1zM191 530h1v1h-1zM191 533h1v1h-1zM191 536h1v1h-1zM191 539h1v1h-1zM191 542h1v1h-1zM191 545h1v1h-1zM191 548h1v1h-1zM191 551h1v1h-1zM191 554h1v1h-1zM191 557h1v1h-1zM191 560h1v1h-1zM191 563h1v1h-1zM191 566h1v1h-1zM191 569h1v1h-1zM191 572h1v1h-1zM191 575h1v1h-1zM191 578h1v1h-1zM191 581h1v1h-1zM191 584h1v1h-1zM191 587h1v1h-1zM191 590h1v1h-1zM191 593h1v1h-1zM191 596h1v1h-1zM191 599h1v1h-1zM191 602h1v1h-1zM191 605h1v1h-1zM191 608h1v1h-1zM191 611h1v1h-1zM191 614h1v1h-1zM191 617h1v1h-1zM191 620h1v1h-1zM191 623h1v1h-1zM191 626h1v1h-1zM191 629h1v1h-1zM191 632h1v1h-1zM191 635h1v1h-1zM191 638h1v1h-1zM191 641h1v1h-1zM191 644h1v1h-1zM191 647h1v1h-1zM191 650h1v1h-1zM191 653h1v1h-1zM191 656h1v1h-1zM191 659h1v1h-1zM191 662h1v1h-1zM191 665h1v1h-1zM191 668h1v1h-1zM191 671h1v1h-1zM191 674h1v1h-1zM191 677h1v1h-1zM191 680h1v1h-1zM191 683h1v1h-1zM191 686h1v1h-1zM191 689h1v1h-1zM191 692h1v1h-1zM191 695h1v1h-1zM191 698h1v1h-1zM191 701h1v1h-1zM191 704h1v1h-1zM191 707h1v1h-1zM191 710h1v1h-1zM191 713h1v1h-1zM191 716h1v1h-1zM191 719h1v1h-1zM191 722h1v1h-1zM191 725h1v1h-1zM191 728h1v1h-1zM191 731h1v1h-1zM191 734h1v1h-1zM191 737h1v1h-1zM191 740h1v1h-1zM191 743h1v1h-1zM191 746h1v1h-1zM191 749h1v1h-1zM191 752h1v1h-1zM191 755h1v1h-1zM191 758h1v1h-1zM191 761h1v1h-1zM191 764h1v1h-1zM301 314h1v1h-1zM301 317h1v1h-1zM301 320h1v1h-1zM301 323h1v1h-1zM301 326h1v1h-1zM301 329h1v1h-1zM301 332h1v1h-1zM301 335h1v1h-1zM301 338h1v1h-1zM301 341h1v1h-1zM301 344h1v1h-1zM301 347h1v1h-1zM301 350h1v1h-1zM301 353h1v1h-1zM301 356h1v1h-1zM301 359h1v1h-1zM301 362h1v1h-1zM301 365h1v1h-1zM301 368h1v1h-1zM301 371h1v1h-1zM301 374h1v1h-1zM301 377h1v1h-1zM301 380h1v1h-1zM301 383h1v1h-1zM301 386h1v1h-1zM301 389h1v1h-1zM301 392h1v1h-1zM301 395h1v1h-1zM301 398h1v1h-1zM301 401h1v1h-1zM301 404h1v1h-1zM301 407h1v1h-1zM301 410h1v1h-1zM301 413h1v1h-1zM301 416h1v1h-1zM301 419h1v1h-1zM301 422h1v1h-1zM301 425h1v1h-1zM301 428h1v1h-1zM301 431h1v1h-1zM301 434h1v1h-1zM301 437h1v1h-1zM301 440h1v1h-1zM301 443h1v1h-1zM301 446h1v1h-1zM301 449h1v1h-1zM301 452h1v1h-1zM301 455h1v1h-1zM301 458h1v1h-1zM301 461h1v1h-1zM301 464h1v1h-1zM301 467h1v1h-1zM301 470h1v1h-1zM301 473h1v1h-1zM301 476h1v1h-1zM301 479h1v1h-1zM301 482h1v1h-1zM301 485h1v1h-1zM301 488h1v1h-1zM301 491h1v1h-1zM301 494h1v1h-1zM301 497h1v1h-1zM301 500h1v1h-1zM301 503h1v1h-1zM301 506h1v1h-1zM301 509h1v1h-1zM301 512h1v1h-1zM301 515h1v1h-1zM301 518h1v1h-1zM301 521h1v1h-1zM301 524h1v1h-1zM301 527h1v1h-1zM301 530h1v1h-1zM301 533h1v1h-1zM301 536h1v1h-1zM301 539h1v1h-1zM301 542h1v1h-1zM301 545h1v1h-1zM301 548h1v1h-1zM301 551h1v1h-1zM301 554h1v1h-1zM301 557h1v1h-1zM301 560h1v1h-1zM301 563h1v1h-1zM301 566h1v1h-1zM301 569h1v1h-1zM301 572h1v1h-1zM301 575h1v1h-1zM301 578h1v1h-1zM301 581h1v1h-1zM301 584h1v1h-1zM301 587h1v1h-1zM301 590h1v1h-1zM301 593h1v1h-1zM301 596h1v1h-1zM301 599h1v1h-1zM301 602h1v1h-1zM301 605h1v1h-1zM301 608h1v1h-1zM301 611h1v1h-1zM301 614h1v1h-1zM301 617h1v1h-1zM301 620h1v1h-1zM301 623h1v1h-1zM301 626h1v1h-1zM301 629h1v1h-1zM301 632h1v1h-1zM301 635h1v1h-1zM301 638h1v1h-1zM301 641h1v1h-1zM301 644h1v1h-1zM301 647h1v1h-1zM301 650h1v1h-1zM301 653h1v1h-1zM301 656h1v1h-1zM301 659h1v1h-1zM301 662h1v1h-1zM301 665h1v1h-1zM301 668h1v1h-1zM301 671h1v1h-1zM301 674h1v1h-1zM301 677h1v1h-1zM301 680h1v1h-1zM301 683h1v1h-1zM301 686h1v1h-1zM301 689h1v1h-1zM301 692h1v1h-1zM301 695h1v1h-1zM301 698h1v1h-1zM301 701h1v1h-1zM301 704h1v1h-1zM301 707h1v1h-1zM301 710h1v1h-1zM301 713h1v1h-1zM301 716h1v1h-1zM301 719h1v1h-1zM301 722h1v1h-1zM301 725h1v1h-1zM301 728h1v1h-1zM301 731h1v1h-1zM301 734h1v1h-1zM301 737h1v1h-1zM301 740h1v1h-1zM301 743h1v1h-1zM301 746h1v1h-1zM301 749h1v1h-1zM301 752h1v1h-1zM301 755h1v1h-1zM301 758h1v1h-1zM301 761h1v1h-1zM301 764h1v1h-1zM410 314h1v1h-1zM410 317h1v1h-1zM410 320h1v1h-1zM410 323h1v1h-1zM410 326h1v1h-1zM410 329h1v1h-1zM410 332h1v1h-1zM410 335h1v1h-1zM410 338h1v1h-1zM410 341h1v1h-1zM410 344h1v1h-1zM410 347h1v1h-1zM410 350h1v1h-1zM410 353h1v1h-1zM410 356h1v1h-1zM410 359h1v1h-1zM410 362h1v1h-1zM410 365h1v1h-1zM410 368h1v1h-1zM410 371h1v1h-1zM410 374h1v1h-1zM410 377h1v1h-1zM410 380h1v1h-1zM410 383h1v1h-1zM410 386h1v1h-1zM410 389h1v1h-1zM410 392h1v1h-1zM410 395h1v1h-1zM410 398h1v1h-1zM410 401h1v1h-1zM410 404h1v1h-1zM410 407h1v1h-1zM410 410h1v1h-1zM410 413h1v1h-1zM410 416h1v1h-1zM410 419h1v1h-1zM410 422h1v1h-1zM410 425h1v1h-1zM410 428h1v1h-1zM410 431h1v1h-1zM410 434h1v1h-1zM410 437h1v1h-1zM410 440h1v1h-1zM410 443h1v1h-1zM410 446h1v1h-1zM410 449h1v1h-1zM410 452h1v1h-1zM410 455h1v1h-1zM410 458h1v1h-1zM410 461h1v1h-1zM410 464h1v1h-1zM410 467h1v1h-1zM410 470h1v1h-1zM410 473h1v1h-1zM410 476h1v1h-1zM410 479h1v1h-1zM410 482h1v1h-1zM410 485h1v1h-1zM410 488h1v1h-1zM410 491h1v1h-1zM410 494h1v1h-1zM410 497h1v1h-1zM410 500h1v1h-1zM410 503h1v1h-1zM410 506h1v1h-1zM410 509h1v1h-1zM410 512h1v1h-1zM410 515h1v1h-1zM410 518h1v1h-1zM410 521h1v1h-1zM410 524h1v1h-1zM410 527h1v1h-1zM410 530h1v1h-1zM410 533h1v1h-1zM410 536h1v1h-1zM410 539h1v1h-1zM410 542h1v1h-1zM410 545h1v1h-1zM410 548h1v1h-1zM410 551h1v1h-1zM410 554h1v1h-1zM410 557h1v1h-1zM410 560h1v1h-1zM410 563h1v1h-1zM410 566h1v1h-1zM410 569h1v1h-1zM410 572h1v1h-1zM410 575h1v1h-1zM410 578h1v1h-1zM410 581h1v1h-1zM410 584h1v1h-1zM410 587h1v1h-1zM410 590h1v1h-1zM410 593h1v1h-1zM410 596h1v1h-1zM410 599h1v1h-1zM410 602h1v1h-1zM410 605h1v1h-1zM410 608h1v1h-1zM410 611h1v1h-1zM410 614h1v1h-1zM410 617h1v1h-1zM410 620h1v1h-1zM410 623h1v1h-1zM410 626h1v1h-1zM410 629h1v1h-1zM410 632h1v1h-1zM410 635h1v1h-1zM410 638h1v1h-1zM410 641h1v1h-1zM410 644h1v1h-1zM410 647h1v1h-1zM410 650h1v1h-1zM410 653h1v1h-1zM410 656h1v1h-1zM410 659h1v1h-1zM410 662h1v1h-1zM410 665h1v1h-1zM410 668h1v1h-1zM410 671h1v1h-1zM410 674h1v1h-1zM410 677h1v1h-1zM410 680h1v1h-1zM410 683h1v1h-1zM410 686h1v1h-1zM410 689h1v1h-1zM410 692h1v1h-1zM410 695h1v1h-1zM410 698h1v1h-1zM410 701h1v1h-1zM410 704h1v1h-1zM410 707h1v1h-1zM410 710h1v1h-1zM410 713h1v1h-1zM410 716h1v1h-1zM410 719h1v1h-1zM410 722h1v1h-1zM410 725h1v1h-1zM410 728h1v1h-1zM410 731h1v1h-1zM410 734h1v1h-1zM410 737h1v1h-1zM410 740h1v1h-1zM410 743h1v1h-1zM410 746h1v1h-1zM410 749h1v1h-1zM410 752h1v1h-1zM410 755h1v1h-1zM410 758h1v1h-1zM410 761h1v1h-1zM410 764h1v1h-1zM520 314h1v1h-1zM520 317h1v1h-1zM520 320h1v1h-1zM520 323h1v1h-1zM520 326h1v1h-1zM520 329h1v1h-1zM520 332h1v1h-1zM520 335h1v1h-1zM520 338h1v1h-1zM520 341h1v1h-1zM520 344h1v1h-1zM520 347h1v1h-1zM520 350h1v1h-1zM520 353h1v1h-1zM520 356h1v1h-1zM520 359h1v1h-1zM520 362h1v1h-1zM520 365h1v1h-1zM520 368h1v1h-1zM520 371h1v1h-1zM520 374h1v1h-1zM520 377h1v1h-1zM520 380h1v1h-1zM520 383h1v1h-1zM520 386h1v1h-1zM520 389h1v1h-1zM520 392h1v1h-1zM520 395h1v1h-1zM520 398h1v1h-1zM520 401h1v1h-1zM520 404h1v1h-1zM520 407h1v1h-1zM520 410h1v1h-1zM520 413h1v1h-1zM520 416h1v1h-1zM520 419h1v1h-1zM520 422h1v1h-1zM520 425h1v1h-1zM520 428h1v1h-1zM520 431h1v1h-1zM520 434h1v1h-1zM520 437h1v1h-1zM520 440h1v1h-1zM520 443h1v1h-1zM520 446h1v1h-1zM520 449h1v1h-1zM520 452h1v1h-1zM520 455h1v1h-1zM520 458h1v1h-1zM520 461h1v1h-1zM520 464h1v1h-1zM520 467h1v1h-1zM520 470h1v1h-1zM520 473h1v1h-1zM520 476h1v1h-1zM520 479h1v1h-1zM520 482h1v1h-1zM520 485h1v1h-1zM520 488h1v1h-1zM520 491h1v1h-1zM520 494h1v1h-1zM520 497h1v1h-1zM520 500h1v1h-1zM520 503h1v1h-1zM520 506h1v1h-1zM520 509h1v1h-1zM520 512h1v1h-1zM520 515h1v1h-1zM520 518h1v1h-1zM520 521h1v1h-1zM520 524h1v1h-1zM520 527h1v1h-1zM520 530h1v1h-1zM520 533h1v1h-1zM520 536h1v1h-1zM520 539h1v1h-1zM520 542h1v1h-1zM520 545h1v1h-1zM520 548h1v1h-1zM520 551h1v1h-1zM520 554h1v1h-1zM520 557h1v1h-1zM520 560h1v1h-1zM520 563h1v1h-1zM520 566h1v1h-1zM520 569h1v1h-1zM520 572h1v1h-1zM520 575h1v1h-1zM520 578h1v1h-1zM520 581h1v1h-1zM520 584h1v1h-1zM520 587h1v1h-1zM520 590h1v1h-1zM520 593h1v1h-1zM520 596h1v1h-1zM520 599h1v1h-1zM520 602h1v1h-1zM520 605h1v1h-1zM520 608h1v1h-1zM520 611h1v1h-1zM520 614h1v1h-1zM520 617h1v1h-1zM520 620h1v1h-1zM520 623h1v1h-1zM520 626h1v1h-1zM520 629h1v1h-1zM520 632h1v1h-1zM520 635h1v1h-1zM520 638h1v1h-1zM520 641h1v1h-1zM520 644h1v1h-1zM520 647h1v1h-1zM520 650h1v1h-1zM520 653h1v1h-1zM520 656h1v1h-1zM520 659h1v1h-1zM520 662h1v1h-1zM520 665h1v1h-1zM520 668h1v1h-1zM520 671h1v1h-1zM520 674h1v1h-1zM520 677h1v1h-1zM520 680h1v1h-1zM520 683h1v1h-1zM520 686h1v1h-1zM520 689h1v1h-1zM520 692h1v1h-1zM520 695h1v1h-1zM520 698h1v1h-1zM520 701h1v1h-1zM520 704h1v1h-1zM520 707h1v1h-1zM520 710h1v1h-1zM520 713h1v1h-1zM520 716h1v1h-1zM520 719h1v1h-1zM520 722h1v1h-1zM520 725h1v1h-1zM520 728h1v1h-1zM520 731h1v1h-1zM520 734h1v1h-1zM520 737h1v1h-1zM520 740h1v1h-1zM520 743h1v1h-1zM520 746h1v1h-1zM520 749h1v1h-1zM520 752h1v1h-1zM520 755h1v1h-1zM520 758h1v1h-1zM520 761h1v1h-1zM520 764h1v1h-1zM630 314h1v1h-1zM630 317h1v1h-1zM630 320h1v1h-1zM630 323h1v1h-1zM630 326h1v1h-1zM630 329h1v1h-1zM630 332h1v1h-1zM630 335h1v1h-1zM630 338h1v1h-1zM630 341h1v1h-1zM630 344h1v1h-1zM630 347h1v1h-1zM630 350h1v1h-1zM630 353h1v1h-1zM630 356h1v1h-1zM630 359h1v1h-1zM630 362h1v1h-1zM630 365h1v1h-1zM630 368h1v1h-1zM630 371h1v1h-1zM630 374h1v1h-1zM630 377h1v1h-1zM630 380h1v1h-1zM630 383h1v1h-1zM630 386h1v1h-1zM630 389h1v1h-1zM630 392h1v1h-1zM630 395h1v1h-1zM630 398h1v1h-1zM630 401h1v1h-1zM630 404h1v1h-1zM630 407h1v1h-1zM630 410h1v1h-1zM630 413h1v1h-1zM630 416h1v1h-1zM630 419h1v1h-1zM630 422h1v1h-1zM630 425h1v1h-1zM630 428h1v1h-1zM630 431h1v1h-1zM630 434h1v1h-1zM630 437h1v1h-1zM630 440h1v1h-1zM630 443h1v1h-1zM630 446h1v1h-1zM630 449h1v1h-1zM630 452h1v1h-1zM630 455h1v1h-1zM630 458h1v1h-1zM630 461h1v1h-1zM630 464h1v1h-1zM630 467h1v1h-1zM630 470h1v1h-1zM630 473h1v1h-1zM630 476h1v1h-1zM630 479h1v1h-1zM630 482h1v1h-1zM630 485h1v1h-1zM630 488h1v1h-1zM630 491h1v1h-1zM630 494h1v1h-1zM630 497h1v1h-1zM630 500h1v1h-1zM630 503h1v1h-1zM630 506h1v1h-1zM630 509h1v1h-1zM630 512h1v1h-1zM630 515h1v1h-1zM630 518h1v1h-1zM630 521h1v1h-1zM630 524h1v1h-1zM630 527h1v1h-1zM630 530h1v1h-1zM630 533h1v1h-1zM630 536h1v1h-1zM630 539h1v1h-1zM630 542h1v1h-1zM630 545h1v1h-1zM630 548h1v1h-1zM630 551h1v1h-1zM630 554h1v1h-1zM630 557h1v1h-1zM630 560h1v1h-1zM630 563h1v1h-1zM630 566h1v1h-1zM630 569h1v1h-1zM630 572h1v1h-1zM630 575h1v1h-1zM630 578h1v1h-1zM630 581h1v1h-1zM630 584h1v1h-1zM630 587h1v1h-1zM630 590h1v1h-1zM630 593h1v1h-1zM630 596h1v1h-1zM630 599h1v1h-1zM630 602h1v1h-1zM630 605h1v1h-1zM630 608h1v1h-1zM630 611h1v1h-1zM630 614h1v1h-1zM630 617h1v1h-1zM630 620h1v1h-1zM630 623h1v1h-1zM630 626h1v1h-1zM630 629h1v1h-1zM630 632h1v1h-1zM630 635h1v1h-1zM630 638h1v1h-1zM630 641h1v1h-1zM630 644h1v1h-1zM630 647h1v1h-1zM630 650h1v1h-1zM630 653h1v1h-1zM630 656h1v1h-1zM630 659h1v1h-1zM630 662h1v1h-1zM630 665h1v1h-1zM630 668h1v1h-1zM630 671h1v1h-1zM630 674h1v1h-1zM630 677h1v1h-1zM630 680h1v1h-1zM630 683h1v1h-1zM630 686h1v1h-1zM630 689h1v1h-1zM630 692h1v1h-1zM630 695h1v1h-1zM630 698h1v1h-1zM630 701h1v1h-1zM630 704h1v1h-1zM630 707h1v1h-1zM630 710h1v1h-1zM630 713h1v1h-1zM630 716h1v1h-1zM630 719h1v1h-1zM630 722h1v1h-1zM630 725h1v1h-1zM630 728h1v1h-1zM630 731h1v1h-1zM630 734h1v1h-1zM630 737h1v1h-1zM630 740h1v1h-1zM630 743h1v1h-1zM630 746h1v1h-1zM630 749h1v1h-1zM630 752h1v1h-1zM630 755h1v1h-1zM630 758h1v1h-1zM630 761h1v1h-1zM630 764h1v1h-1zM740 314h1v1h-1zM740 317h1v1h-1zM740 320h1v1h-1zM740 323h1v1h-1zM740 326h1v1h-1zM740 329h1v1h-1zM740 332h1v1h-1zM740 335h1v1h-1zM740 338h1v1h-1zM740 341h1v1h-1zM740 344h1v1h-1zM740 347h1v1h-1zM740 350h1v1h-1zM740 353h1v1h-1zM740 356h1v1h-1zM740 359h1v1h-1zM740 362h1v1h-1zM740 365h1v1h-1zM740 368h1v1h-1zM740 371h1v1h-1zM740 374h1v1h-1zM740 377h1v1h-1zM740 380h1v1h-1zM740 383h1v1h-1zM740 386h1v1h-1zM740 389h1v1h-1zM740 392h1v1h-1zM740 395h1v1h-1zM740 398h1v1h-1zM740 401h1v1h-1zM740 404h1v1h-1zM740 407h1v1h-1zM740 410h1v1h-1zM740 413h1v1h-1zM740 416h1v1h-1zM740 419h1v1h-1zM740 422h1v1h-1zM740 425h1v1h-1zM740 428h1v1h-1zM740 431h1v1h-1zM740 434h1v1h-1zM740 437h1v1h-1zM740 440h1v1h-1zM740 443h1v1h-1zM740 446h1v1h-1zM740 449h1v1h-1zM740 452h1v1h-1zM740 455h1v1h-1zM740 458h1v1h-1zM740 461h1v1h-1zM740 464h1v1h-1zM740 467h1v1h-1zM740 470h1v1h-1zM740 473h1v1h-1zM740 476h1v1h-1zM740 479h1v1h-1zM740 482h1v1h-1zM740 485h1v1h-1zM740 488h1v1h-1zM740 491h1v1h-1zM740 494h1v1h-1zM740 497h1v1h-1zM740 500h1v1h-1zM740 503h1v1h-1zM740 506h1v1h-1zM740 509h1v1h-1zM740 512h1v1h-1zM740 515h1v1h-1zM740 518h1v1h-1zM740 521h1v1h-1zM740 524h1v1h-1zM740 527h1v1h-1zM740 530h1v1h-1zM740 533h1v1h-1zM740 536h1v1h-1zM740 539h1v1h-1zM740 542h1v1h-1zM740 545h1v1h-1zM740 548h1v1h-1zM740 551h1v1h-1zM740 554h1v1h-1zM740 557h1v1h-1zM740 560h1v1h-1zM740 563h1v1h-1zM740 566h1v1h-1zM740 569h1v1h-1zM740 572h1v1h-1zM740 575h1v1h-1zM740 578h1v1h-1zM740 581h1v1h-1zM740 584h1v1h-1zM740 587h1v1h-1zM740 590h1v1h-1zM740 593h1v1h-1zM740 596h1v1h-1zM740 599h1v1h-1zM740 602h1v1h-1zM740 605h1v1h-1zM740 608h1v1h-1zM740 611h1v1h-1zM740 614h1v1h-1zM740 617h1v1h-1zM740 620h1v1h-1zM740 623h1v1h-1zM740 626h1v1h-1zM740 629h1v1h-1zM740 632h1v1h-1zM740 635h1v1h-1zM740 638h1v1h-1zM740 641h1v1h-1zM740 644h1v1h-1zM740 647h1v1h-1zM740 650h1v1h-1zM740 653h1v1h-1zM740 656h1v1h-1zM740 659h1v1h-1zM740 662h1v1h-1zM740 665h1v1h-1zM740 668h1v1h-1zM740 671h1v1h-1zM740 674h1v1h-1zM740 677h1v1h-1zM740 680h1v1h-1zM740 683h1v1h-1zM740 686h1v1h-1zM740 689h1v1h-1zM740 692h1v1h-1zM740 695h1v1h-1zM740 698h1v1h-1zM740 701h1v1h-1zM740 704h1v1h-1zM740 707h1v1h-1zM740 710h1v1h-1zM740 713h1v1h-1zM740 716h1v1h-1zM740 719h1v1h-1zM740 722h1v1h-1zM740 725h1v1h-1zM740 728h1v1h-1zM740 731h1v1h-1zM740 734h1v1h-1zM740 737h1v1h-1zM740 740h1v1h-1zM740 743h1v1h-1zM740 746h1v1h-1zM740 749h1v1h-1zM740 752h1v1h-1zM740 755h1v1h-1zM740 758h1v1h-1zM740 761h1v1h-1zM740 764h1v1h-1zM84 334h1v1h-1zM87 334h1v1h-1zM90 334h1v1h-1zM93 334h1v1h-1zM96 334h1v1h-1zM99 334h1v1h-1zM102 334h1v1h-1zM105 334h1v1h-1zM108 334h1v1h-1zM111 334h1v1h-1zM114 334h1v1h-1zM117 334h1v1h-1zM120 334h1v1h-1zM123 334h1v1h-1zM126 334h1v1h-1zM129 334h1v1h-1zM132 334h1v1h-1zM135 334h1v1h-1zM138 334h1v1h-1zM141 334h1v1h-1zM144 334h1v1h-1zM147 334h1v1h-1zM150 334h1v1h-1zM153 334h1v1h-1zM156 334h1v1h-1zM159 334h1v1h-1zM162 334h1v1h-1zM165 334h1v1h-1zM168 334h1v1h-1zM171 334h1v1h-1zM174 334h1v1h-1zM177 334h1v1h-1zM180 334h1v1h-1zM183 334h1v1h-1zM186 334h1v1h-1zM189 334h1v1h-1zM192 334h1v1h-1zM195 334h1v1h-1zM198 334h1v1h-1zM201 334h1v1h-1zM204 334h1v1h-1zM207 334h1v1h-1zM210 334h1v1h-1zM213 334h1v1h-1zM216 334h1v1h-1zM219 334h1v1h-1zM222 334h1v1h-1zM225 334h1v1h-1zM228 334h1v1h-1zM231 334h1v1h-1zM234 334h1v1h-1zM237 334h1v1h-1zM240 334h1v1h-1zM243 334h1v1h-1zM246 334h1v1h-1zM249 334h1v1h-1zM252 334h1v1h-1zM255 334h1v1h-1zM258 334h1v1h-1zM261 334h1v1h-1zM264 334h1v1h-1zM267 334h1v1h-1zM270 334h1v1h-1zM273 334h1v1h-1zM276 334h1v1h-1zM279 334h1v1h-1zM282 334h1v1h-1zM285 334h1v1h-1zM288 334h1v1h-1zM291 334h1v1h-1zM294 334h1v1h-1zM297 334h1v1h-1zM300 334h1v1h-1zM303 334h1v1h-1zM306 334h1v1h-1zM309 334h1v1h-1zM312 334h1v1h-1zM315 334h1v1h-1zM318 334h1v1h-1zM321 334h1v1h-1zM324 334h1v1h-1zM327 334h1v1h-1zM330 334h1v1h-1zM333 334h1v1h-1zM336 334h1v1h-1zM339 334h1v1h-1zM342 334h1v1h-1zM345 334h1v1h-1zM348 334h1v1h-1zM351 334h1v1h-1zM354 334h1v1h-1zM357 334h1v1h-1zM360 334h1v1h-1zM363 334h1v1h-1zM366 334h1v1h-1zM369 334h1v1h-1zM372 334h1v1h-1zM375 334h1v1h-1zM378 334h1v1h-1zM381 334h1v1h-1zM384 334h1v1h-1zM387 334h1v1h-1zM390 334h1v1h-1zM393 334h1v1h-1zM396 334h1v1h-1zM399 334h1v1h-1zM402 334h1v1h-1zM405 334h1v1h-1zM408 334h1v1h-1zM411 334h1v1h-1zM414 334h1v1h-1zM417 334h1v1h-1zM420 334h1v1h-1zM423 334h1v1h-1zM426 334h1v1h-1zM429 334h1v1h-1zM432 334h1v1h-1zM435 334h1v1h-1zM438 334h1v1h-1zM441 334h1v1h-1zM444 334h1v1h-1zM447 334h1v1h-1zM450 334h1v1h-1zM453 334h1v1h-1zM456 334h1v1h-1zM459 334h1v1h-1zM462 334h1v1h-1zM465 334h1v1h-1zM468 334h1v1h-1zM471 334h1v1h-1zM474 334h1v1h-1zM477 334h1v1h-1zM480 334h1v1h-1zM483 334h1v1h-1zM486 334h1v1h-1zM489 334h1v1h-1zM492 334h1v1h-1zM495 334h1v1h-1zM498 334h1v1h-1zM501 334h1v1h-1zM504 334h1v1h-1zM507 334h1v1h-1zM510 334h1v1h-1zM513 334h1v1h-1zM516 334h1v1h-1zM519 334h1v1h-1zM522 334h1v1h-1zM525 334h1v1h-1zM528 334h1v1h-1zM531 334h1v1h-1zM534 334h1v1h-1zM537 334h1v1h-1zM540 334h1v1h-1zM543 334h1v1h-1zM546 334h1v1h-1zM549 334h1v1h-1zM552 334h1v1h-1zM555 334h1v1h-1zM558 334h1v1h-1zM561 334h1v1h-1zM564 334h1v1h-1zM567 334h1v1h-1zM570 334h1v1h-1zM573 334h1v1h-1zM576 334h1v1h-1zM579 334h1v1h-1zM582 334h1v1h-1zM585 334h1v1h-1zM588 334h1v1h-1zM591 334h1v1h-1zM594 334h1v1h-1zM597 334h1v1h-1zM600 334h1v1h-1zM603 334h1v1h-1zM606 334h1v1h-1zM609 334h1v1h-1zM612 334h1v1h-1zM615 334h1v1h-1zM618 334h1v1h-1zM621 334h1v1h-1zM624 334h1v1h-1zM627 334h1v1h-1zM630 334h1v1h-1zM633 334h1v1h-1zM636 334h1v1h-1zM639 334h1v1h-1zM642 334h1v1h-1zM645 334h1v1h-1zM648 334h1v1h-1zM651 334h1v1h-1zM654 334h1v1h-1zM657 334h1v1h-1zM660 334h1v1h-1zM663 334h1v1h-1zM666 334h1v1h-1zM669 334h1v1h-1zM672 334h1v1h-1zM675 334h1v1h-1zM678 334h1v1h-1zM681 334h1v1h-1zM684 334h1v1h-1zM687 334h1v1h-1zM690 334h1v1h-1zM693 334h1v1h-1zM696 334h1v1h-1zM699 334h1v1h-1zM702 334h1v1h-1zM705 334h1v1h-1zM708 334h1v1h-1zM711 334h1v1h-1zM714 334h1v1h-1zM717 334h1v1h-1zM720 334h1v1h-1zM723 334h1v1h-1zM726 334h1v1h-1zM729 334h1v1h-1zM732 334h1v1h-1zM735 334h1v1h-1zM738 334h1v1h-1zM741 334h1v1h-1zM744 334h1v1h-1zM747 334h1v1h-1zM750 334h1v1h-1zM753 334h1v1h-1zM756 334h1v1h-1zM759 334h1v1h-1zM762 334h1v1h-1zM765 334h1v1h-1zM768 334h1v1h-1zM771 334h1v1h-1zM774 334h1v1h-1zM777 334h1v1h-1zM780 334h1v1h-1zM783 334h1v1h-1zM786 334h1v1h-1zM789 334h1v1h-1zM792 334h1v1h-1zM795 334h1v1h-1zM798 334h1v1h-1zM801 334h1v1h-1zM804 334h1v1h-1zM84 402h1v1h-1zM87 402h1v1h-1zM90 402h1v1h-1zM93 402h1v1h-1zM96 402h1v1h-1zM99 402h1v1h-1zM102 402h1v1h-1zM105 402h1v1h-1zM108 402h1v1h-1zM111 402h1v1h-1zM114 402h1v1h-1zM117 402h1v1h-1zM120 402h1v1h-1zM123 402h1v1h-1zM126 402h1v1h-1zM129 402h1v1h-1zM132 402h1v1h-1zM135 402h1v1h-1zM138 402h1v1h-1zM141 402h1v1h-1zM144 402h1v1h-1zM147 402h1v1h-1zM150 402h1v1h-1zM153 402h1v1h-1zM156 402h1v1h-1zM159 402h1v1h-1zM162 402h1v1h-1zM165 402h1v1h-1zM168 402h1v1h-1zM171 402h1v1h-1zM174 402h1v1h-1zM177 402h1v1h-1zM180 402h1v1h-1zM183 402h1v1h-1zM186 402h1v1h-1zM189 402h1v1h-1zM192 402h1v1h-1zM195 402h1v1h-1zM198 402h1v1h-1zM201 402h1v1h-1zM204 402h1v1h-1zM207 402h1v1h-1zM210 402h1v1h-1zM213 402h1v1h-1zM216 402h1v1h-1zM219 402h1v1h-1zM222 402h1v1h-1zM225 402h1v1h-1zM228 402h1v1h-1zM231 402h1v1h-1zM234 402h1v1h-1zM237 402h1v1h-1zM240 402h1v1h-1zM243 402h1v1h-1zM246 402h1v1h-1zM249 402h1v1h-1zM252 402h1v1h-1zM255 402h1v1h-1zM258 402h1v1h-1zM261 402h1v1h-1zM264 402h1v1h-1zM267 402h1v1h-1zM270 402h1v1h-1zM273 402h1v1h-1zM276 402h1v1h-1zM279 402h1v1h-1zM282 402h1v1h-1zM285 402h1v1h-1zM288 402h1v1h-1zM291 402h1v1h-1zM294 402h1v1h-1zM297 402h1v1h-1zM300 402h1v1h-1zM303 402h1v1h-1zM306 402h1v1h-1zM309 402h1v1h-1zM312 402h1v1h-1zM315 402h1v1h-1zM318 402h1v1h-1zM321 402h1v1h-1zM324 402h1v1h-1zM327 402h1v1h-1zM330 402h1v1h-1zM333 402h1v1h-1zM336 402h1v1h-1zM339 402h1v1h-1zM342 402h1v1h-1zM345 402h1v1h-1zM348 402h1v1h-1zM351 402h1v1h-1zM354 402h1v1h-1zM357 402h1v1h-1zM360 402h1v1h-1zM363 402h1v1h-1zM366 402h1v1h-1zM369 402h1v1h-1zM372 402h1v1h-1zM375 402h1v1h-1zM378 402h1v1h-1zM381 402h1v1h-1zM384 402h1v1h-1zM387 402h1v1h-1zM390 402h1v1h-1zM393 402h1v1h-1zM396 402h1v1h-1zM399 402h1v1h-1zM402 402h1v1h-1zM405 402h1v1h-1zM408 402h1v1h-1zM411 402h1v1h-1zM414 402h1v1h-1zM417 402h1v1h-1zM420 402h1v1h-1zM423 402h1v1h-1zM426 402h1v1h-1zM429 402h1v1h-1zM432 402h1v1h-1zM435 402h1v1h-1zM438 402h1v1h-1zM441 402h1v1h-1zM444 402h1v1h-1zM447 402h1v1h-1zM450 402h1v1h-1zM453 402h1v1h-1zM456 402h1v1h-1zM459 402h1v1h-1zM462 402h1v1h-1zM465 402h1v1h-1zM468 402h1v1h-1zM471 402h1v1h-1zM474 402h1v1h-1zM477 402h1v1h-1zM480 402h1v1h-1zM483 402h1v1h-1zM486 402h1v1h-1zM489 402h1v1h-1zM492 402h1v1h-1zM495 402h1v1h-1zM498 402h1v1h-1zM501 402h1v1h-1zM504 402h1v1h-1zM507 402h1v1h-1zM510 402h1v1h-1zM513 402h1v1h-1zM516 402h1v1h-1zM519 402h1v1h-1zM522 402h1v1h-1zM525 402h1v1h-1zM528 402h1v1h-1zM531 402h1v1h-1zM534 402h1v1h-1zM537 402h1v1h-1zM540 402h1v1h-1zM543 402h1v1h-1zM546 402h1v1h-1zM549 402h1v1h-1zM552 402h1v1h-1zM555 402h1v1h-1zM558 402h1v1h-1zM561 402h1v1h-1zM564 402h1v1h-1zM567 402h1v1h-1zM570 402h1v1h-1zM573 402h1v1h-1zM576 402h1v1h-1zM579 402h1v1h-1zM582 402h1v1h-1zM585 402h1v1h-1zM588 402h1v1h-1zM591 402h1v1h-1zM594 402h1v1h-1zM597 402h1v1h-1zM600 402h1v1h-1zM603 402h1v1h-1zM606 402h1v1h-1zM609 402h1v1h-1zM612 402h1v1h-1zM615 402h1v1h-1zM618 402h1v1h-1zM621 402h1v1h-1zM624 402h1v1h-1zM627 402h1v1h-1zM630 402h1v1h-1zM633 402h1v1h-1zM636 402h1v1h-1zM639 402h1v1h-1zM642 402h1v1h-1zM645 402h1v1h-1zM648 402h1v1h-1zM651 402h1v1h-1zM654 402h1v1h-1zM657 402h1v1h-1zM660 402h1v1h-1zM663 402h1v1h-1zM666 402h1v1h-1zM669 402h1v1h-1zM672 402h1v1h-1zM675 402h1v1h-1zM678 402h1v1h-1zM681 402h1v1h-1zM684 402h1v1h-1zM687 402h1v1h-1zM690 402h1v1h-1zM693 402h1v1h-1zM696 402h1v1h-1zM699 402h1v1h-1zM702 402h1v1h-1zM705 402h1v1h-1zM708 402h1v1h-1zM711 402h1v1h-1zM714 402h1v1h-1zM717 402h1v1h-1zM720 402h1v1h-1zM723 402h1v1h-1zM726 402h1v1h-1zM729 402h1v1h-1zM732 402h1v1h-1zM735 402h1v1h-1zM738 402h1v1h-1zM741 402h1v1h-1zM744 402h1v1h-1zM747 402h1v1h-1zM750 402h1v1h-1zM753 402h1v1h-1zM756 402h1v1h-1zM759 402h1v1h-1zM762 402h1v1h-1zM765 402h1v1h-1zM768 402h1v1h-1zM771 402h1v1h-1zM774 402h1v1h-1zM777 402h1v1h-1zM780 402h1v1h-1zM783 402h1v1h-1zM786 402h1v1h-1zM789 402h1v1h-1zM792 402h1v1h-1zM795 402h1v1h-1zM798 402h1v1h-1zM801 402h1v1h-1zM804 402h1v1h-1zM84 471h1v1h-1zM87 471h1v1h-1zM90 471h1v1h-1zM93 471h1v1h-1zM96 471h1v1h-1zM99 471h1v1h-1zM102 471h1v1h-1zM105 471h1v1h-1zM108 471h1v1h-1zM111 471h1v1h-1zM114 471h1v1h-1zM117 471h1v1h-1zM120 471h1v1h-1zM123 471h1v1h-1zM126 471h1v1h-1zM129 471h1v1h-1zM132 471h1v1h-1zM135 471h1v1h-1zM138 471h1v1h-1zM141 471h1v1h-1zM144 471h1v1h-1zM147 471h1v1h-1zM150 471h1v1h-1zM153 471h1v1h-1zM156 471h1v1h-1zM159 471h1v1h-1zM162 471h1v1h-1zM165 471h1v1h-1zM168 471h1v1h-1zM171 471h1v1h-1zM174 471h1v1h-1zM177 471h1v1h-1zM180 471h1v1h-1zM183 471h1v1h-1zM186 471h1v1h-1zM189 471h1v1h-1zM192 471h1v1h-1zM195 471h1v1h-1zM198 471h1v1h-1zM201 471h1v1h-1zM204 471h1v1h-1zM207 471h1v1h-1zM210 471h1v1h-1zM213 471h1v1h-1zM216 471h1v1h-1zM219 471h1v1h-1zM222 471h1v1h-1zM225 471h1v1h-1zM228 471h1v1h-1zM231 471h1v1h-1zM234 471h1v1h-1zM237 471h1v1h-1zM240 471h1v1h-1zM243 471h1v1h-1zM246 471h1v1h-1zM249 471h1v1h-1zM252 471h1v1h-1zM255 471h1v1h-1zM258 471h1v1h-1zM261 471h1v1h-1zM264 471h1v1h-1zM267 471h1v1h-1zM270 471h1v1h-1zM273 471h1v1h-1zM276 471h1v1h-1zM279 471h1v1h-1zM282 471h1v1h-1zM285 471h1v1h-1zM288 471h1v1h-1zM291 471h1v1h-1zM294 471h1v1h-1zM297 471h1v1h-1zM300 471h1v1h-1zM303 471h1v1h-1zM306 471h1v1h-1zM309 471h1v1h-1zM312 471h1v1h-1zM315 471h1v1h-1zM318 471h1v1h-1zM321 471h1v1h-1zM324 471h1v1h-1zM327 471h1v1h-1zM330 471h1v1h-1zM333 471h1v1h-1zM336 471h1v1h-1zM339 471h1v1h-1zM342 471h1v1h-1zM345 471h1v1h-1zM348 471h1v1h-1zM351 471h1v1h-1zM354 471h1v1h-1zM357 471h1v1h-1zM360 471h1v1h-1zM363 471h1v1h-1zM366 471h1v1h-1zM369 471h1v1h-1zM372 471h1v1h-1zM375 471h1v1h-1zM378 471h1v1h-1zM381 471h1v1h-1zM384 471h1v1h-1zM387 471h1v1h-1zM390 471h1v1h-1zM393 471h1v1h-1zM396 471h1v1h-1zM399 471h1v1h-1zM402 471h1v1h-1zM405 471h1v1h-1zM408 471h1v1h-1zM411 471h1v1h-1zM414 471h1v1h-1zM417 471h1v1h-1zM420 471h1v1h-1zM423 471h1v1h-1zM426 471h1v1h-1zM429 471h1v1h-1zM432 471h1v1h-1zM435 471h1v1h-1zM438 471h1v1h-1zM441 471h1v1h-1zM444 471h1v1h-1zM447 471h1v1h-1zM450 471h1v1h-1zM453 471h1v1h-1zM456 471h1v1h-1zM459 471h1v1h-1zM462 471h1v1h-1zM465 471h1v1h-1zM468 471h1v1h-1zM471 471h1v1h-1zM474 471h1v1h-1zM477 471h1v1h-1zM480 471h1v1h-1zM483 471h1v1h-1zM486 471h1v1h-1zM489 471h1v1h-1zM492 471h1v1h-1zM495 471h1v1h-1zM498 471h1v1h-1zM501 471h1v1h-1zM504 471h1v1h-1zM507 471h1v1h-1zM510 471h1v1h-1zM513 471h1v1h-1zM516 471h1v1h-1zM519 471h1v1h-1zM522 471h1v1h-1zM525 471h1v1h-1zM528 471h1v1h-1zM531 471h1v1h-1zM534 471h1v1h-1zM537 471h1v1h-1zM540 471h1v1h-1zM543 471h1v1h-1zM546 471h1v1h-1zM549 471h1v1h-1zM552 471h1v1h-1zM555 471h1v1h-1zM558 471h1v1h-1zM561 471h1v1h-1zM564 471h1v1h-1zM567 471h1v1h-1zM570 471h1v1h-1zM573 471h1v1h-1zM576 471h1v1h-1zM579 471h1v1h-1zM582 471h1v1h-1zM585 471h1v1h-1zM588 471h1v1h-1zM591 471h1v1h-1zM594 471h1v1h-1zM597 471h1v1h-1zM600 471h1v1h-1zM603 471h1v1h-1zM606 471h1v1h-1zM609 471h1v1h-1zM612 471h1v1h-1zM615 471h1v1h-1zM618 471h1v1h-1zM621 471h1v1h-1zM624 471h1v1h-1zM627 471h1v1h-1zM630 471h1v1h-1zM633 471h1v1h-1zM636 471h1v1h-1zM639 471h1v1h-1zM642 471h1v1h-1zM645 471h1v1h-1zM648 471h1v1h-1zM651 471h1v1h-1zM654 471h1v1h-1zM657 471h1v1h-1zM660 471h1v1h-1zM663 471h1v1h-1zM666 471h1v1h-1zM669 471h1v1h-1zM672 471h1v1h-1zM675 471h1v1h-1zM678 471h1v1h-1zM681 471h1v1h-1zM684 471h1v1h-1zM687 471h1v1h-1zM690 471h1v1h-1zM693 471h1v1h-1zM696 471h1v1h-1zM699 471h1v1h-1zM702 471h1v1h-1zM705 471h1v1h-1zM708 471h1v1h-1zM711 471h1v1h-1zM714 471h1v1h-1zM717 471h1v1h-1zM720 471h1v1h-1zM723 471h1v1h-1zM726 471h1v1h-1zM729 471h1v1h-1zM732 471h1v1h-1zM735 471h1v1h-1zM738 471h1v1h-1zM741 471h1v1h-1zM744 471h1v1h-1zM747 471h1v1h-1zM750 471h1v1h-1zM753 471h1v1h-1zM756 471h1v1h-1zM759 471h1v1h-1zM762 471h1v1h-1zM765 471h1v1h-1zM768 471h1v1h-1zM771 471h1v1h-1zM774 471h1v1h-1zM777 471h1v1h-1zM780 471h1v1h-1zM783 471h1v1h-1zM786 471h1v1h-1zM789 471h1v1h-1zM792 471h1v1h-1zM795 471h1v1h-1zM798 471h1v1h-1zM801 471h1v1h-1zM804 471h1v1h-1zM84 607h1v1h-1zM87 607h1v1h-1zM90 607h1v1h-1zM93 607h1v1h-1zM96 607h1v1h-1zM99 607h1v1h-1zM102 607h1v1h-1zM105 607h1v1h-1zM108 607h1v1h-1zM111 607h1v1h-1zM114 607h1v1h-1zM117 607h1v1h-1zM120 607h1v1h-1zM123 607h1v1h-1zM126 607h1v1h-1zM129 607h1v1h-1zM132 607h1v1h-1zM135 607h1v1h-1zM138 607h1v1h-1zM141 607h1v1h-1zM144 607h1v1h-1zM147 607h1v1h-1zM150 607h1v1h-1zM153 607h1v1h-1zM156 607h1v1h-1zM159 607h1v1h-1zM162 607h1v1h-1zM165 607h1v1h-1zM168 607h1v1h-1zM171 607h1v1h-1zM174 607h1v1h-1zM177 607h1v1h-1zM180 607h1v1h-1zM183 607h1v1h-1zM186 607h1v1h-1zM189 607h1v1h-1zM192 607h1v1h-1zM195 607h1v1h-1zM198 607h1v1h-1zM201 607h1v1h-1zM204 607h1v1h-1zM207 607h1v1h-1zM210 607h1v1h-1zM213 607h1v1h-1zM216 607h1v1h-1zM219 607h1v1h-1zM222 607h1v1h-1zM225 607h1v1h-1zM228 607h1v1h-1zM231 607h1v1h-1zM234 607h1v1h-1zM237 607h1v1h-1zM240 607h1v1h-1zM243 607h1v1h-1zM246 607h1v1h-1zM249 607h1v1h-1zM252 607h1v1h-1zM255 607h1v1h-1zM258 607h1v1h-1zM261 607h1v1h-1zM264 607h1v1h-1zM267 607h1v1h-1zM270 607h1v1h-1zM273 607h1v1h-1zM276 607h1v1h-1zM279 607h1v1h-1zM282 607h1v1h-1zM285 607h1v1h-1zM288 607h1v1h-1zM291 607h1v1h-1zM294 607h1v1h-1zM297 607h1v1h-1zM300 607h1v1h-1zM303 607h1v1h-1zM306 607h1v1h-1zM309 607h1v1h-1zM312 607h1v1h-1zM315 607h1v1h-1zM318 607h1v1h-1zM321 607h1v1h-1zM324 607h1v1h-1zM327 607h1v1h-1zM330 607h1v1h-1zM333 607h1v1h-1zM336 607h1v1h-1zM339 607h1v1h-1zM342 607h1v1h-1zM345 607h1v1h-1zM348 607h1v1h-1zM351 607h1v1h-1zM354 607h1v1h-1zM357 607h1v1h-1zM360 607h1v1h-1zM363 607h1v1h-1zM366 607h1v1h-1zM369 607h1v1h-1zM372 607h1v1h-1zM375 607h1v1h-1zM378 607h1v1h-1zM381 607h1v1h-1zM384 607h1v1h-1zM387 607h1v1h-1zM390 607h1v1h-1zM393 607h1v1h-1zM396 607h1v1h-1zM399 607h1v1h-1zM402 607h1v1h-1zM405 607h1v1h-1zM408 607h1v1h-1zM411 607h1v1h-1zM414 607h1v1h-1zM417 607h1v1h-1zM420 607h1v1h-1zM423 607h1v1h-1zM426 607h1v1h-1zM429 607h1v1h-1zM432 607h1v1h-1zM435 607h1v1h-1zM438 607h1v1h-1zM441 607h1v1h-1zM444 607h1v1h-1zM447 607h1v1h-1zM450 607h1v1h-1zM453 607h1v1h-1zM456 607h1v1h-1zM459 607h1v1h-1zM462 607h1v1h-1zM465 607h1v1h-1zM468 607h1v1h-1zM471 607h1v1h-1zM474 607h1v1h-1zM477 607h1v1h-1zM480 607h1v1h-1zM483 607h1v1h-1zM486 607h1v1h-1zM489 607h1v1h-1zM492 607h1v1h-1zM495 607h1v1h-1zM498 607h1v1h-1zM501 607h1v1h-1zM504 607h1v1h-1zM507 607h1v1h-1zM510 607h1v1h-1zM513 607h1v1h-1zM516 607h1v1h-1zM519 607h1v1h-1zM522 607h1v1h-1zM525 607h1v1h-1zM528 607h1v1h-1zM531 607h1v1h-1zM534 607h1v1h-1zM537 607h1v1h-1zM540 607h1v1h-1zM543 607h1v1h-1zM546 607h1v1h-1zM549 607h1v1h-1zM552 607h1v1h-1zM555 607h1v1h-1zM558 607h1v1h-1zM561 607h1v1h-1zM564 607h1v1h-1zM567 607h1v1h-1zM570 607h1v1h-1zM573 607h1v1h-1zM576 607h1v1h-1zM579 607h1v1h-1zM582 607h1v1h-1zM585 607h1v1h-1zM588 607h1v1h-1zM591 607h1v1h-1zM594 607h1v1h-1zM597 607h1v1h-1zM600 607h1v1h-1zM603 607h1v1h-1zM606 607h1v1h-1zM609 607h1v1h-1zM612 607h1v1h-1zM615 607h1v1h-1zM618 607h1v1h-1zM621 607h1v1h-1zM624 607h1v1h-1zM627 607h1v1h-1zM630 607h1v1h-1zM633 607h1v1h-1zM636 607h1v1h-1zM639 607h1v1h-1zM642 607h1v1h-1zM645 607h1v1h-1zM648 607h1v1h-1zM651 607h1v1h-1zM654 607h1v1h-1zM657 607h1v1h-1zM660 607h1v1h-1zM663 607h1v1h-1zM666 607h1v1h-1zM669 607h1v1h-1zM672 607h1v1h-1zM675 607h1v1h-1zM678 607h1v1h-1zM681 607h1v1h-1zM684 607h1v1h-1zM687 607h1v1h-1zM690 607h1v1h-1zM693 607h1v1h-1zM696 607h1v1h-1zM699 607h1v1h-1zM702 607h1v1h-1zM705 607h1v1h-1zM708 607h1v1h-1zM711 607h1v1h-1zM714 607h1v1h-1zM717 607h1v1h-1zM720 607h1v1h-1zM723 607h1v1h-1zM726 607h1v1h-1zM729 607h1v1h-1zM732 607h1v1h-1zM735 607h1v1h-1zM738 607h1v1h-1zM741 607h1v1h-1zM744 607h1v1h-1zM747 607h1v1h-1zM750 607h1v1h-1zM753 607h1v1h-1zM756 607h1v1h-1zM759 607h1v1h-1zM762 607h1v1h-1zM765 607h1v1h-1zM768 607h1v1h-1zM771 607h1v1h-1zM774 607h1v1h-1zM777 607h1v1h-1zM780 607h1v1h-1zM783 607h1v1h-1zM786 607h1v1h-1zM789 607h1v1h-1zM792 607h1v1h-1zM795 607h1v1h-1zM798 607h1v1h-1zM801 607h1v1h-1zM804 607h1v1h-1zM84 676h1v1h-1zM87 676h1v1h-1zM90 676h1v1h-1zM93 676h1v1h-1zM96 676h1v1h-1zM99 676h1v1h-1zM102 676h1v1h-1zM105 676h1v1h-1zM108 676h1v1h-1zM111 676h1v1h-1zM114 676h1v1h-1zM117 676h1v1h-1zM120 676h1v1h-1zM123 676h1v1h-1zM126 676h1v1h-1zM129 676h1v1h-1zM132 676h1v1h-1zM135 676h1v1h-1zM138 676h1v1h-1zM141 676h1v1h-1zM144 676h1v1h-1zM147 676h1v1h-1zM150 676h1v1h-1zM153 676h1v1h-1zM156 676h1v1h-1zM159 676h1v1h-1zM162 676h1v1h-1zM165 676h1v1h-1zM168 676h1v1h-1zM171 676h1v1h-1zM174 676h1v1h-1zM177 676h1v1h-1zM180 676h1v1h-1zM183 676h1v1h-1zM186 676h1v1h-1zM189 676h1v1h-1zM192 676h1v1h-1zM195 676h1v1h-1zM198 676h1v1h-1zM201 676h1v1h-1zM204 676h1v1h-1zM207 676h1v1h-1zM210 676h1v1h-1zM213 676h1v1h-1zM216 676h1v1h-1zM219 676h1v1h-1zM222 676h1v1h-1zM225 676h1v1h-1zM228 676h1v1h-1zM231 676h1v1h-1zM234 676h1v1h-1zM237 676h1v1h-1zM240 676h1v1h-1zM243 676h1v1h-1zM246 676h1v1h-1zM249 676h1v1h-1zM252 676h1v1h-1zM255 676h1v1h-1zM258 676h1v1h-1zM261 676h1v1h-1zM264 676h1v1h-1zM267 676h1v1h-1zM270 676h1v1h-1zM273 676h1v1h-1zM276 676h1v1h-1zM279 676h1v1h-1zM282 676h1v1h-1zM285 676h1v1h-1zM288 676h1v1h-1zM291 676h1v1h-1zM294 676h1v1h-1zM297 676h1v1h-1zM300 676h1v1h-1zM303 676h1v1h-1zM306 676h1v1h-1zM309 676h1v1h-1zM312 676h1v1h-1zM315 676h1v1h-1zM318 676h1v1h-1zM321 676h1v1h-1zM324 676h1v1h-1zM327 676h1v1h-1zM330 676h1v1h-1zM333 676h1v1h-1zM336 676h1v1h-1zM339 676h1v1h-1zM342 676h1v1h-1zM345 676h1v1h-1zM348 676h1v1h-1zM351 676h1v1h-1zM354 676h1v1h-1zM357 676h1v1h-1zM360 676h1v1h-1zM363 676h1v1h-1zM366 676h1v1h-1zM369 676h1v1h-1zM372 676h1v1h-1zM375 676h1v1h-1zM378 676h1v1h-1zM381 676h1v1h-1zM384 676h1v1h-1zM387 676h1v1h-1zM390 676h1v1h-1zM393 676h1v1h-1zM396 676h1v1h-1zM399 676h1v1h-1zM402 676h1v1h-1zM405 676h1v1h-1zM408 676h1v1h-1zM411 676h1v1h-1zM414 676h1v1h-1zM417 676h1v1h-1zM420 676h1v1h-1zM423 676h1v1h-1zM426 676h1v1h-1zM429 676h1v1h-1zM432 676h1v1h-1zM435 676h1v1h-1zM438 676h1v1h-1zM441 676h1v1h-1zM444 676h1v1h-1zM447 676h1v1h-1zM450 676h1v1h-1zM453 676h1v1h-1zM456 676h1v1h-1zM459 676h1v1h-1zM462 676h1v1h-1zM465 676h1v1h-1zM468 676h1v1h-1zM471 676h1v1h-1zM474 676h1v1h-1zM477 676h1v1h-1zM480 676h1v1h-1zM483 676h1v1h-1zM486 676h1v1h-1zM489 676h1v1h-1zM492 676h1v1h-1zM495 676h1v1h-1zM498 676h1v1h-1zM501 676h1v1h-1zM504 676h1v1h-1zM507 676h1v1h-1zM510 676h1v1h-1zM513 676h1v1h-1zM516 676h1v1h-1zM519 676h1v1h-1zM522 676h1v1h-1zM525 676h1v1h-1zM528 676h1v1h-1zM531 676h1v1h-1zM534 676h1v1h-1zM537 676h1v1h-1zM540 676h1v1h-1zM543 676h1v1h-1zM546 676h1v1h-1zM549 676h1v1h-1zM552 676h1v1h-1zM555 676h1v1h-1zM558 676h1v1h-1zM561 676h1v1h-1zM564 676h1v1h-1zM567 676h1v1h-1zM570 676h1v1h-1zM573 676h1v1h-1zM576 676h1v1h-1zM579 676h1v1h-1zM582 676h1v1h-1zM585 676h1v1h-1zM588 676h1v1h-1zM591 676h1v1h-1zM594 676h1v1h-1zM597 676h1v1h-1zM600 676h1v1h-1zM603 676h1v1h-1zM606 676h1v1h-1zM609 676h1v1h-1zM612 676h1v1h-1zM615 676h1v1h-1zM618 676h1v1h-1zM621 676h1v1h-1zM624 676h1v1h-1zM627 676h1v1h-1zM630 676h1v1h-1zM633 676h1v1h-1zM636 676h1v1h-1zM639 676h1v1h-1zM642 676h1v1h-1zM645 676h1v1h-1zM648 676h1v1h-1zM651 676h1v1h-1zM654 676h1v1h-1zM657 676h1v1h-1zM660 676h1v1h-1zM663 676h1v1h-1zM666 676h1v1h-1zM669 676h1v1h-1zM672 676h1v1h-1zM675 676h1v1h-1zM678 676h1v1h-1zM681 676h1v1h-1zM684 676h1v1h-1zM687 676h1v1h-1zM690 676h1v1h-1zM693 676h1v1h-1zM696 676h1v1h-1zM699 676h1v1h-1zM702 676h1v1h-1zM705 676h1v1h-1zM708 676h1v1h-1zM711 676h1v1h-1zM714 676h1v1h-1zM717 676h1v1h-1zM720 676h1v1h-1zM723 676h1v1h-1zM726 676h1v1h-1zM729 676h1v1h-1zM732 676h1v1h-1zM735 676h1v1h-1zM738 676h1v1h-1zM741 676h1v1h-1zM744 676h1v1h-1zM747 676h1v1h-1zM750 676h1v1h-1zM753 676h1v1h-1zM756 676h1v1h-1zM759 676h1v1h-1zM762 676h1v1h-1zM765 676h1v1h-1zM768 676h1v1h-1zM771 676h1v1h-1zM774 676h1v1h-1zM777 676h1v1h-1zM780 676h1v1h-1zM783 676h1v1h-1zM786 676h1v1h-1zM789 676h1v1h-1zM792 676h1v1h-1zM795 676h1v1h-1zM798 676h1v1h-1zM801 676h1v1h-1zM804 676h1v1h-1zM84 744h1v1h-1zM87 744h1v1h-1zM90 744h1v1h-1zM93 744h1v1h-1zM96 744h1v1h-1zM99 744h1v1h-1zM102 744h1v1h-1zM105 744h1v1h-1zM108 744h1v1h-1zM111 744h1v1h-1zM114 744h1v1h-1zM117 744h1v1h-1zM120 744h1v1h-1zM123 744h1v1h-1zM126 744h1v1h-1zM129 744h1v1h-1zM132 744h1v1h-1zM135 744h1v1h-1zM138 744h1v1h-1zM141 744h1v1h-1zM144 744h1v1h-1zM147 744h1v1h-1zM150 744h1v1h-1zM153 744h1v1h-1zM156 744h1v1h-1zM159 744h1v1h-1zM162 744h1v1h-1zM165 744h1v1h-1zM168 744h1v1h-1zM171 744h1v1h-1zM174 744h1v1h-1zM177 744h1v1h-1zM180 744h1v1h-1zM183 744h1v1h-1zM186 744h1v1h-1zM189 744h1v1h-1zM192 744h1v1h-1zM195 744h1v1h-1zM198 744h1v1h-1zM201 744h1v1h-1zM204 744h1v1h-1zM207 744h1v1h-1zM210 744h1v1h-1zM213 744h1v1h-1zM216 744h1v1h-1zM219 744h1v1h-1zM222 744h1v1h-1zM225 744h1v1h-1zM228 744h1v1h-1zM231 744h1v1h-1zM234 744h1v1h-1zM237 744h1v1h-1zM240 744h1v1h-1zM243 744h1v1h-1zM246 744h1v1h-1zM249 744h1v1h-1zM252 744h1v1h-1zM255 744h1v1h-1zM258 744h1v1h-1zM261 744h1v1h-1zM264 744h1v1h-1zM267 744h1v1h-1zM270 744h1v1h-1zM273 744h1v1h-1zM276 744h1v1h-1zM279 744h1v1h-1zM282 744h1v1h-1zM285 744h1v1h-1zM288 744h1v1h-1zM291 744h1v1h-1zM294 744h1v1h-1zM297 744h1v1h-1zM300 744h1v1h-1zM303 744h1v1h-1zM306 744h1v1h-1zM309 744h1v1h-1zM312 744h1v1h-1zM315 744h1v1h-1zM318 744h1v1h-1zM321 744h1v1h-1zM324 744h1v1h-1zM327 744h1v1h-1zM330 744h1v1h-1zM333 744h1v1h-1zM336 744h1v1h-1zM339 744h1v1h-1zM342 744h1v1h-1zM345 744h1v1h-1zM348 744h1v1h-1zM351 744h1v1h-1zM354 744h1v1h-1zM357 744h1v1h-1zM360 744h1v1h-1zM363 744h1v1h-1zM366 744h1v1h-1zM369 744h1v1h-1zM372 744h1v1h-1zM375 744h1v1h-1zM378 744h1v1h-1zM381 744h1v1h-1zM384 744h1v1h-1zM387 744h1v1h-1zM390 744h1v1h-1zM393 744h1v1h-1zM396 744h1v1h-1zM399 744h1v1h-1zM402 744h1v1h-1zM405 744h1v1h-1zM408 744h1v1h-1zM411 744h1v1h-1zM414 744h1v1h-1zM417 744h1v1h-1zM420 744h1v1h-1zM423 744h1v1h-1zM426 744h1v1h-1zM429 744h1v1h-1zM432 744h1v1h-1zM435 744h1v1h-1zM438 744h1v1h-1zM441 744h1v1h-1zM444 744h1v1h-1zM447 744h1v1h-1zM450 744h1v1h-1zM453 744h1v1h-1zM456 744h1v1h-1zM459 744h1v1h-1zM462 744h1v1h-1zM465 744h1v1h-1zM468 744h1v1h-1zM471 744h1v1h-1zM474 744h1v1h-1zM477 744h1v1h-1zM480 744h1v1h-1zM483 744h1v1h-1zM486 744h1v1h-1zM489 744h1v1h-1zM492 744h1v1h-1zM495 744h1v1h-1zM498 744h1v1h-1zM501 744h1v1h-1zM504 744h1v1h-1zM507 744h1v1h-1zM510 744h1v1h-1zM513 744h1v1h-1zM516 744h1v1h-1zM519 744h1v1h-1zM522 744h1v1h-1zM525 744h1v1h-1zM528 744h1v1h-1zM531 744h1v1h-1zM534 744h1v1h-1zM537 744h1v1h-1zM540 744h1v1h-1zM543 744h1v1h-1zM546 744h1v1h-1zM549 744h1v1h-1zM552 744h1v1h-1zM555 744h1v1h-1zM558 744h1v1h-1zM561 744h1v1h-1zM564 744h1v1h-1zM567 744h1v1h-1zM570 744h1v1h-1zM573 744h1v1h-1zM576 744h1v1h-1zM579 744h1v1h-1zM582 744h1v1h-1zM585 744h1v1h-1zM588 744h1v1h-1zM591 744h1v1h-1zM594 744h1v1h-1zM597 744h1v1h-1zM600 744h1v1h-1zM603 744h1v1h-1zM606 744h1v1h-1zM609 744h1v1h-1zM612 744h1v1h-1zM615 744h1v1h-1zM618 744h1v1h-1zM621 744h1v1h-1zM624 744h1v1h-1zM627 744h1v1h-1zM630 744h1v1h-1zM633 744h1v1h-1zM636 744h1v1h-1zM639 744h1v1h-1zM642 744h1v1h-1zM645 744h1v1h-1zM648 744h1v1h-1zM651 744h1v1h-1zM654 744h1v1h-1zM657 744h1v1h-1zM660 744h1v1h-1zM663 744h1v1h-1zM666 744h1v1h-1zM669 744h1v1h-1zM672 744h1v1h-1zM675 744h1v1h-1zM678 744h1v1h-1zM681 744h1v1h-1zM684 744h1v1h-1zM687 744h1v1h-1zM690 744h1v1h-1zM693 744h1v1h-1zM696 744h1v1h-1zM699 744h1v1h-1zM702 744h1v1h-1zM705 744h1v1h-1zM708 744h1v1h-1zM711 744h1v1h-1zM714 744h1v1h-1zM717 744h1v1h-1zM720 744h1v1h-1zM723 744h1v1h-1zM726 744h1v1h-1zM729 744h1v1h-1zM732 744h1v1h-1zM735 744h1v1h-1zM738 744h1v1h-1zM741 744h1v1h-1zM744 744h1v1h-1zM747 744h1v1h-1zM750 744h1v1h-1zM753 744h1v1h-1zM756 744h1v1h-1zM759 744h1v1h-1zM762 744h1v1h-1zM765 744h1v1h-1zM768 744h1v1h-1zM771 744h1v1h-1zM774 744h1v1h-1zM777 744h1v1h-1zM780 744h1v1h-1zM783 744h1v1h-1zM786 744h1v1h-1zM789 744h1v1h-1zM792 744h1v1h-1zM795 744h1v1h-1zM798 744h1v1h-1zM801 744h1v1h-1zM804 744h1v1h-1z" fill="#a4a4a4"/><rect x="82" y="539" width="725" height="1" fill="#b4b4b4"/><rect x="81" y="311" width="727" height="1" fill="#000"/><rect x="81" y="767" width="727" height="1" fill="#000"/><rect x="81" y="311" width="1" height="457" fill="#000"/><rect x="807" y="311" width="1" height="457" fill="#000"/><path d="M81 761h1v6h-1z M81 311h1v6h-1zM103 764h1v3h-1z M103 311h1v3h-1zM125 764h1v3h-1z M125 311h1v3h-1zM147 764h1v3h-1z M147 311h1v3h-1zM169 764h1v3h-1z M169 311h1v3h-1zM191 761h1v6h-1z M191 311h1v6h-1zM213 764h1v3h-1z M213 311h1v3h-1zM235 764h1v3h-1z M235 311h1v3h-1zM257 764h1v3h-1z M257 311h1v3h-1zM279 764h1v3h-1z M279 311h1v3h-1zM301 761h1v6h-1z M301 311h1v6h-1zM323 764h1v3h-1z M323 311h1v3h-1zM345 764h1v3h-1z M345 311h1v3h-1zM367 764h1v3h-1z M367 311h1v3h-1zM389 764h1v3h-1z M389 311h1v3h-1zM410 761h1v6h-1z M410 311h1v6h-1zM432 764h1v3h-1z M432 311h1v3h-1zM454 764h1v3h-1z M454 311h1v3h-1zM476 764h1v3h-1z M476 311h1v3h-1zM498 764h1v3h-1z M498 311h1v3h-1zM520 761h1v6h-1z M520 311h1v6h-1zM542 764h1v3h-1z M542 311h1v3h-1zM564 764h1v3h-1z M564 311h1v3h-1zM586 764h1v3h-1z M586 311h1v3h-1zM608 764h1v3h-1z M608 311h1v3h-1zM630 761h1v6h-1z M630 311h1v6h-1zM652 764h1v3h-1z M652 311h1v3h-1zM674 764h1v3h-1z M674 311h1v3h-1zM696 764h1v3h-1z M696 311h1v3h-1zM718 764h1v3h-1z M718 311h1v3h-1zM740 761h1v6h-1z M740 311h1v6h-1zM762 764h1v3h-1z M762 311h1v3h-1zM784 764h1v3h-1z M784 311h1v3h-1zM806 764h1v3h-1z M806 311h1v3h-1zM81 767h3v1h-3z M805 767h3v1h-3zM81 744h6v1h-6z M802 744h6v1h-6zM81 721h3v1h-3z M805 721h3v1h-3zM81 698h3v1h-3z M805 698h3v1h-3zM81 676h6v1h-6z M802 676h6v1h-6zM81 653h3v1h-3z M805 653h3v1h-3zM81 630h3v1h-3z M805 630h3v1h-3zM81 607h6v1h-6z M802 607h6v1h-6zM81 585h3v1h-3z M805 585h3v1h-3zM81 562h3v1h-3z M805 562h3v1h-3zM81 539h6v1h-6z M802 539h6v1h-6zM81 516h3v1h-3z M805 516h3v1h-3zM81 493h3v1h-3z M805 493h3v1h-3zM81 471h6v1h-6z M802 471h6v1h-6zM81 448h3v1h-3z M805 448h3v1h-3zM81 425h3v1h-3z M805 425h3v1h-3zM81 402h6v1h-6z M802 402h6v1h-6zM81 380h3v1h-3z M805 380h3v1h-3zM81 357h3v1h-3z M805 357h3v1h-3zM81 334h6v1h-6z M802 334h6v1h-6zM81 311h3v1h-3z M805 311h3v1h-3z" fill="#000"/><text x="75.5" y="337" font-family="Liberation Sans" font-size="12" font-weight="normal" fill="#000" text-anchor="end" textLength="18.2" lengthAdjust="spacingAndGlyphs" stroke="#000" stroke-width="0.1" >0.09</text><text x="75.5" y="405" font-family="Liberation Sans" font-size="12" font-weight="normal" fill="#000" text-anchor="end" textLength="18.2" lengthAdjust="spacingAndGlyphs" stroke="#000" stroke-width="0.1" >0.06</text><text x="75.5" y="474" font-family="Liberation Sans" font-size="12" font-weight="normal" fill="#000" text-anchor="end" textLength="18.2" lengthAdjust="spacingAndGlyphs" stroke="#000" stroke-width="0.1" >0.03</text><text x="75.5" y="542" font-family="Liberation Sans" font-size="12" font-weight="normal" fill="#000" text-anchor="end" textLength="5.0" lengthAdjust="spacingAndGlyphs" stroke="#000" stroke-width="0.1" >0</text><text x="75.5" y="610" font-family="Liberation Sans" font-size="12" font-weight="normal" fill="#000" text-anchor="end" textLength="24.7" lengthAdjust="spacingAndGlyphs" stroke="#000" stroke-width="0.1" >−0.03</text><text x="75.5" y="679" font-family="Liberation Sans" font-size="12" font-weight="normal" fill="#000" text-anchor="end" textLength="24.7" lengthAdjust="spacingAndGlyphs" stroke="#000" stroke-width="0.1" >−0.06</text><text x="75.5" y="747" font-family="Liberation Sans" font-size="12" font-weight="normal" fill="#000" text-anchor="end" textLength="24.7" lengthAdjust="spacingAndGlyphs" stroke="#000" stroke-width="0.1" >−0.09</text><text x="81.5" y="779.5" font-family="Liberation Sans" font-size="12" font-weight="normal" fill="#000" text-anchor="middle" textLength="5.0" lengthAdjust="spacingAndGlyphs" stroke="#000" stroke-width="0.1" >0</text><text x="190.5" y="779.5" font-family="Liberation Sans" font-size="12" font-weight="normal" fill="#000" text-anchor="middle" textLength="23.7" lengthAdjust="spacingAndGlyphs" stroke="#000" stroke-width="0.1" >0.035</text><text x="300.5" y="779.5" font-family="Liberation Sans" font-size="12" font-weight="normal" fill="#000" text-anchor="middle" textLength="18.2" lengthAdjust="spacingAndGlyphs" stroke="#000" stroke-width="0.1" >0.07</text><text x="410.5" y="779.5" font-family="Liberation Sans" font-size="12" font-weight="normal" fill="#000" text-anchor="middle" textLength="23.7" lengthAdjust="spacingAndGlyphs" stroke="#000" stroke-width="0.1" >0.105</text><text x="519.5" y="779.5" font-family="Liberation Sans" font-size="12" font-weight="normal" fill="#000" text-anchor="middle" textLength="18.2" lengthAdjust="spacingAndGlyphs" stroke="#000" stroke-width="0.1" >0.14</text><text x="629.5" y="779.5" font-family="Liberation Sans" font-size="12" font-weight="normal" fill="#000" text-anchor="middle" textLength="23.7" lengthAdjust="spacingAndGlyphs" stroke="#000" stroke-width="0.1" >0.175</text><text x="739.5" y="779.5" font-family="Liberation Sans" font-size="12" font-weight="normal" fill="#000" text-anchor="middle" textLength="18.2" lengthAdjust="spacingAndGlyphs" stroke="#000" stroke-width="0.1" >0.21</text><text x="444" y="794" font-family="Liberation Sans" font-size="12" font-weight="normal" fill="#000" text-anchor="middle" textLength="36" lengthAdjust="spacingAndGlyphs" stroke="#000" stroke-width="0.1" >time[s]</text><text x="0" y="0" font-family="Liberation Sans" font-size="12" text-anchor="middle" textLength="69" lengthAdjust="spacingAndGlyphs" transform="translate(38.5,539) rotate(-90)">velocity[m/s]</text><g><path d="M81.5 539.4 L82.0 537.8 L82.5 536.1 L83.0 534.5 L83.5 532.9 L84.0 531.3 L84.5 529.7 L85.0 528.1 L85.5 526.6 L86.0 525.1 L86.5 523.6 L87.0 522.1 L87.5 520.7 L88.0 519.3 L88.5 517.9 L89.0 516.6 L89.5 515.3 L90.0 514.1 L90.5 513.0 L91.0 511.8 L91.5 510.8 L92.0 509.8 L92.5 508.8 L93.0 507.9 L93.5 507.1 L94.0 506.4 L94.5 505.7 L95.0 505.0 L95.5 504.5 L96.0 504.0 L96.5 503.6 L97.0 503.2 L97.5 502.9 L98.0 502.7 L98.5 502.6 L99.0 502.5 L99.5 502.5 L100.0 502.7 L100.5 503.0 L101.0 503.4 L101.5 503.9 L102.0 504.6 L102.5 505.5 L103.0 506.4 L103.5 507.5 L104.0 508.7 L104.5 510.0 L105.0 511.4 L105.5 513.0 L106.0 514.6 L106.5 516.4 L107.0 518.2 L107.5 520.1 L108.0 522.1 L108.5 524.2 L109.0 526.4 L109.5 528.6 L110.0 530.9 L110.5 533.2 L111.0 535.5 L111.5 537.9 L112.0 540.4 L112.5 542.8 L113.0 545.3 L113.5 547.7 L114.0 550.2 L114.5 552.6 L115.0 555.1 L115.5 557.5 L116.0 559.8 L116.5 562.1 L117.0 564.4 L117.5 566.6 L118.0 568.8 L118.5 570.9 L119.0 572.9 L119.5 574.8 L120.0 576.6 L120.5 578.4 L121.0 580.0 L121.5 581.6 L122.0 583.0 L122.5 584.3 L123.0 585.5 L123.5 586.6 L124.0 587.5 L124.5 588.4 L125.0 589.1 L125.5 589.6 L126.0 590.0 L126.5 590.3 L127.0 590.5 L127.5 590.5 L128.0 590.4 L128.5 590.1 L129.0 589.8 L129.5 589.3 L130.0 588.6 L130.5 587.9 L131.0 587.0 L131.5 586.0 L132.0 584.9 L132.5 583.7 L133.0 582.4 L133.5 581.0 L134.0 579.4 L134.5 577.8 L135.0 576.1 L135.5 574.3 L136.0 572.4 L136.5 570.4 L137.0 568.4 L137.5 566.3 L138.0 564.1 L138.5 561.9 L139.0 559.6 L139.5 557.3 L140.0 555.0 L140.5 552.6 L141.0 550.3 L141.5 547.9 L142.0 545.4 L142.5 543.0 L143.0 540.6 L143.5 538.3 L144.0 535.9 L144.5 533.6 L145.0 531.3 L145.5 529.0 L146.0 526.8 L146.5 524.6 L147.0 522.5 L147.5 520.5 L148.0 518.5 L148.5 516.6 L149.0 514.8 L149.5 513.1 L150.0 511.5 L150.5 509.9 L151.0 508.5 L151.5 507.2 L152.0 506.0 L152.5 504.9 L153.0 503.9 L153.5 503.0 L154.0 502.3 L154.5 501.6 L155.0 501.1 L155.5 500.8 L156.0 500.5 L156.5 500.4 L157.0 500.4 L157.5 500.6 L158.0 500.8 L158.5 501.2 L159.0 501.6 L159.5 502.2 L160.0 502.9 L160.5 503.7 L161.0 504.7 L161.5 505.7 L162.0 506.8 L162.5 508.0 L163.0 509.3 L163.5 510.7 L164.0 512.2 L164.5 513.8 L165.0 515.4 L165.5 517.1 L166.0 518.9 L166.5 520.7 L167.0 522.6 L167.5 524.5 L168.0 526.5 L168.5 528.5 L169.0 530.5 L169.5 532.6 L170.0 534.7 L170.5 536.7 L171.0 538.8 L171.5 540.9 L172.0 542.9 L172.5 545.0 L173.0 547.0 L173.5 549.0 L174.0 550.9 L174.5 552.8 L175.0 554.7 L175.5 556.5 L176.0 558.2 L176.5 559.9 L177.0 561.5 L177.5 563.0 L178.0 564.4 L178.5 565.8 L179.0 567.0 L179.5 568.2 L180.0 569.2 L180.5 570.2 L181.0 571.1 L181.5 571.8 L182.0 572.4 L182.5 573.0 L183.0 573.4 L183.5 573.7 L184.0 573.8 L184.5 573.9 L185.0 573.9 L185.5 573.7 L186.0 573.5 L186.5 573.2 L187.0 572.7 L187.5 572.2 L188.0 571.6 L188.5 570.9 L189.0 570.2 L189.5 569.3 L190.0 568.4 L190.5 567.4 L191.0 566.3 L191.5 565.1 L192.0 563.9 L192.5 562.6 L193.0 561.3 L193.5 559.9 L194.0 558.4 L194.5 556.9 L195.0 555.4 L195.5 553.8 L196.0 552.2 L196.5 550.5 L197.0 548.9 L197.5 547.2 L198.0 545.5 L198.5 543.8 L199.0 542.1 L199.5 540.4 L200.0 538.7 L200.5 537.0 L201.0 535.4 L201.5 533.7 L202.0 532.1 L202.5 530.5 L203.0 529.0 L203.5 527.5 L204.0 526.0 L204.5 524.6 L205.0 523.3 L205.5 522.0 L206.0 520.8 L206.5 519.6 L207.0 518.5 L207.5 517.5 L208.0 516.6 L208.5 515.7 L209.0 515.0 L209.5 514.3 L210.0 513.7 L210.5 513.2 L211.0 512.7 L211.5 512.4 L212.0 512.2 L212.5 512.0 L213.0 512.0 L213.5 512.0 L214.0 512.1 L214.5 512.3 L215.0 512.6 L215.5 512.9 L216.0 513.3 L216.5 513.7 L217.0 514.3 L217.5 514.9 L218.0 515.5 L218.5 516.2 L219.0 517.0 L219.5 517.8 L220.0 518.7 L220.5 519.7 L221.0 520.7 L221.5 521.7 L222.0 522.8 L222.5 523.9 L223.0 525.1 L223.5 526.2 L224.0 527.5 L224.5 528.7 L225.0 530.0 L225.5 531.3 L226.0 532.6 L226.5 533.9 L227.0 535.2 L227.5 536.5 L228.0 537.9 L228.5 539.2 L229.0 540.5 L229.5 541.8 L230.0 543.1 L230.5 544.4 L231.0 545.6 L231.5 546.9 L232.0 548.0 L232.5 549.2 L233.0 550.3 L233.5 551.4 L234.0 552.4 L234.5 553.4 L235.0 554.4 L235.5 555.3 L236.0 556.1 L236.5 556.9 L237.0 557.6 L237.5 558.2 L238.0 558.8 L238.5 559.4 L239.0 559.8 L239.5 560.2 L240.0 560.5 L240.5 560.8 L241.0 561.0 L241.5 561.1 L242.0 561.1 L242.5 561.1 L243.0 561.0 L243.5 560.8 L244.0 560.6 L244.5 560.4 L245.0 560.1 L245.5 559.7 L246.0 559.3 L246.5 558.8 L247.0 558.3 L247.5 557.7 L248.0 557.0 L248.5 556.4 L249.0 555.6 L249.5 554.9 L250.0 554.1 L250.5 553.2 L251.0 552.4 L251.5 551.4 L252.0 550.5 L252.5 549.5 L253.0 548.5 L253.5 547.5 L254.0 546.5 L254.5 545.4 L255.0 544.3 L255.5 543.2 L256.0 542.2 L256.5 541.1 L257.0 540.0 L257.5 538.9 L258.0 537.8 L258.5 536.7 L259.0 535.6 L259.5 534.5 L260.0 533.5 L260.5 532.5 L261.0 531.5 L261.5 530.5 L262.0 529.5 L262.5 528.6 L263.0 527.7 L263.5 526.9 L264.0 526.1 L264.5 525.3 L265.0 524.6 L265.5 523.9 L266.0 523.2 L266.5 522.7 L267.0 522.1 L267.5 521.6 L268.0 521.2 L268.5 520.8 L269.0 520.5 L269.5 520.2 L270.0 520.0 L270.5 519.8 L271.0 519.7 L271.5 519.7 L272.0 519.7 L272.5 519.8 L273.0 520.0 L273.5 520.2 L274.0 520.5 L274.5 520.8 L275.0 521.2 L275.5 521.7 L276.0 522.2 L276.5 522.8 L277.0 523.4 L277.5 524.1 L278.0 524.9 L278.5 525.7 L279.0 526.5 L279.5 527.4 L280.0 528.3 L280.5 529.3 L281.0 530.3 L281.5 531.3 L282.0 532.4 L282.5 533.4 L283.0 534.5 L283.5 535.6 L284.0 536.7 L284.5 537.9 L285.0 539.0 L285.5 540.1 L286.0 541.2 L286.5 542.3 L287.0 543.4 L287.5 544.5 L288.0 545.6 L288.5 546.6 L289.0 547.6 L289.5 548.6 L290.0 549.5 L290.5 550.5 L291.0 551.3 L291.5 552.1 L292.0 552.9 L292.5 553.6 L293.0 554.3 L293.5 554.9 L294.0 555.5 L294.5 556.0 L295.0 556.5 L295.5 556.8 L296.0 557.2 L296.5 557.4 L297.0 557.6 L297.5 557.7 L298.0 557.8 L298.5 557.8 L299.0 557.7 L299.5 557.6 L300.0 557.4 L300.5 557.2 L301.0 556.9 L301.5 556.5 L302.0 556.1 L302.5 555.7 L303.0 555.2 L303.5 554.6 L304.0 554.0 L304.5 553.4 L305.0 552.7 L305.5 551.9 L306.0 551.2 L306.5 550.3 L307.0 549.5 L307.5 548.6 L308.0 547.7 L308.5 546.8 L309.0 545.8 L309.5 544.9 L310.0 543.9 L310.5 542.9 L311.0 541.9 L311.5 540.9 L312.0 539.8 L312.5 538.8 L313.0 537.8 L313.5 536.8 L314.0 535.8 L314.5 534.9 L315.0 533.9 L315.5 533.0 L316.0 532.0 L316.5 531.1 L317.0 530.3 L317.5 529.5 L318.0 528.7 L318.5 527.9 L319.0 527.2 L319.5 526.5 L320.0 525.9 L320.5 525.3 L321.0 524.8 L321.5 524.3 L322.0 523.9 L322.5 523.5 L323.0 523.2 L323.5 523.0 L324.0 522.8 L324.5 522.6 L325.0 522.5 L325.5 522.5 L326.0 522.5 L326.5 522.6 L327.0 522.7 L327.5 522.9 L328.0 523.1 L328.5 523.4 L329.0 523.7 L329.5 524.1 L330.0 524.5 L330.5 525.0 L331.0 525.5 L331.5 526.0 L332.0 526.6 L332.5 527.2 L333.0 527.9 L333.5 528.5 L334.0 529.3 L334.5 530.0 L335.0 530.8 L335.5 531.6 L336.0 532.4 L336.5 533.2 L337.0 534.0 L337.5 534.9 L338.0 535.8 L338.5 536.6 L339.0 537.5 L339.5 538.4 L340.0 539.3 L340.5 540.1 L341.0 541.0 L341.5 541.9 L342.0 542.7 L342.5 543.5 L343.0 544.3 L343.5 545.1 L344.0 545.9 L344.5 546.6 L345.0 547.3 L345.5 547.9 L346.0 548.6 L346.5 549.2 L347.0 549.7 L347.5 550.2 L348.0 550.7 L348.5 551.1 L349.0 551.5 L349.5 551.9 L350.0 552.2 L350.5 552.4 L351.0 552.6 L351.5 552.8 L352.0 552.9 L352.5 552.9 L353.0 552.9 L353.5 552.8 L354.0 552.8 L354.5 552.6 L355.0 552.5 L355.5 552.3 L356.0 552.1 L356.5 551.8 L357.0 551.5 L357.5 551.1 L358.0 550.8 L358.5 550.3 L359.0 549.9 L359.5 549.4 L360.0 548.9 L360.5 548.4 L361.0 547.8 L361.5 547.3 L362.0 546.6 L362.5 546.0 L363.0 545.4 L363.5 544.7 L364.0 544.0 L364.5 543.3 L365.0 542.6 L365.5 541.9 L366.0 541.2 L366.5 540.4 L367.0 539.7 L367.5 539.0 L368.0 538.2 L368.5 537.5 L369.0 536.8 L369.5 536.1 L370.0 535.3 L370.5 534.6 L371.0 533.9 L371.5 533.3 L372.0 532.6 L372.5 532.0 L373.0 531.3 L373.5 530.7 L374.0 530.2 L374.5 529.6 L375.0 529.1 L375.5 528.6 L376.0 528.1 L376.5 527.7 L377.0 527.3 L377.5 526.9 L378.0 526.6 L378.5 526.3 L379.0 526.0 L379.5 525.8 L380.0 525.6 L380.5 525.4 L381.0 525.3 L381.5 525.2 L382.0 525.2 L382.5 525.2 L383.0 525.3 L383.5 525.3 L384.0 525.5 L384.5 525.7 L385.0 525.9 L385.5 526.2 L386.0 526.5 L386.5 526.8 L387.0 527.2 L387.5 527.6 L388.0 528.1 L388.5 528.6 L389.0 529.1 L389.5 529.7 L390.0 530.2 L390.5 530.9 L391.0 531.5 L391.5 532.2 L392.0 532.9 L392.5 533.6 L393.0 534.3 L393.5 535.0 L394.0 535.8 L394.5 536.6 L395.0 537.3 L395.5 538.1 L396.0 538.9 L396.5 539.7 L397.0 540.5 L397.5 541.2 L398.0 542.0 L398.5 542.8 L399.0 543.5 L399.5 544.2 L400.0 545.0 L400.5 545.7 L401.0 546.3 L401.5 547.0 L402.0 547.6 L402.5 548.2 L403.0 548.8 L403.5 549.3 L404.0 549.8 L404.5 550.3 L405.0 550.7 L405.5 551.1 L406.0 551.5 L406.5 551.8 L407.0 552.1 L407.5 552.4 L408.0 552.5 L408.5 552.7 L409.0 552.8 L409.5 552.9 L410.0 552.9 L410.5 552.9 L411.0 552.8 L411.5 552.7 L412.0 552.5 L412.5 552.3 L413.0 552.0 L413.5 551.7 L414.0 551.4 L414.5 551.0 L415.0 550.6 L415.5 550.1 L416.0 549.6 L416.5 549.0 L417.0 548.4 L417.5 547.8 L418.0 547.2 L418.5 546.5 L419.0 545.8 L419.5 545.1 L420.0 544.3 L420.5 543.5 L421.0 542.8 L421.5 542.0 L422.0 541.2 L422.5 540.4 L423.0 539.5 L423.5 538.7 L424.0 537.9 L424.5 537.1 L425.0 536.3 L425.5 535.5 L426.0 534.7 L426.5 533.9 L427.0 533.2 L427.5 532.5 L428.0 531.8 L428.5 531.1 L429.0 530.4 L429.5 529.8 L430.0 529.2 L430.5 528.6 L431.0 528.1 L431.5 527.6 L432.0 527.2 L432.5 526.8 L433.0 526.4 L433.5 526.1 L434.0 525.8 L434.5 525.6 L435.0 525.4 L435.5 525.3 L436.0 525.2 L436.5 525.2 L437.0 525.2 L437.5 525.3 L438.0 525.4 L438.5 525.5 L439.0 525.6 L439.5 525.8 L440.0 526.1 L440.5 526.4 L441.0 526.7 L441.5 527.0 L442.0 527.4 L442.5 527.8 L443.0 528.3 L443.5 528.7 L444.0 529.2 L444.5 529.8 L445.0 530.3 L445.5 530.9 L446.0 531.5 L446.5 532.1 L447.0 532.7 L447.5 533.4 L448.0 534.1 L448.5 534.7 L449.0 535.4 L449.5 536.1 L450.0 536.8 L450.5 537.5 L451.0 538.2 L451.5 539.0 L452.0 539.7 L452.5 540.4 L453.0 541.1 L453.5 541.8 L454.0 542.4 L454.5 543.1 L455.0 543.8 L455.5 544.4 L456.0 545.0 L456.5 545.6 L457.0 546.2 L457.5 546.7 L458.0 547.3 L458.5 547.8 L459.0 548.2 L459.5 548.7 L460.0 549.1 L460.5 549.5 L461.0 549.8 L461.5 550.1 L462.0 550.4 L462.5 550.7 L463.0 550.9 L463.5 551.0 L464.0 551.1 L464.5 551.2 L465.0 551.3 L465.5 551.3 L466.0 551.3 L466.5 551.2 L467.0 551.1 L467.5 551.0 L468.0 550.8 L468.5 550.6 L469.0 550.4 L469.5 550.2 L470.0 549.9 L470.5 549.5 L471.0 549.2 L471.5 548.8 L472.0 548.4 L472.5 548.0 L473.0 547.5 L473.5 547.1 L474.0 546.5 L474.5 546.0 L475.0 545.5 L475.5 544.9 L476.0 544.4 L476.5 543.8 L477.0 543.2 L477.5 542.5 L478.0 541.9 L478.5 541.3 L479.0 540.7 L479.5 540.0 L480.0 539.4 L480.5 538.7 L481.0 538.1 L481.5 537.5 L482.0 536.8 L482.5 536.2 L483.0 535.6 L483.5 535.0 L484.0 534.4 L484.5 533.9 L485.0 533.3 L485.5 532.8 L486.0 532.2 L486.5 531.8 L487.0 531.3 L487.5 530.8 L488.0 530.4 L488.5 530.0 L489.0 529.6 L489.5 529.3 L490.0 529.0 L490.5 528.7 L491.0 528.4 L491.5 528.2 L492.0 528.0 L492.5 527.9 L493.0 527.8 L493.5 527.7 L494.0 527.6 L494.5 527.6 L495.0 527.6 L495.5 527.7 L496.0 527.8 L496.5 527.9 L497.0 528.1 L497.5 528.2 L498.0 528.5 L498.5 528.7 L499.0 529.0 L499.5 529.4 L500.0 529.7 L500.5 530.1 L501.0 530.5 L501.5 531.0 L502.0 531.5 L502.5 532.0 L503.0 532.5 L503.5 533.0 L504.0 533.6 L504.5 534.2 L505.0 534.8 L505.5 535.4 L506.0 536.0 L506.5 536.6 L507.0 537.3 L507.5 538.0 L508.0 538.6 L508.5 539.3 L509.0 539.9 L509.5 540.6 L510.0 541.3 L510.5 541.9 L511.0 542.6 L511.5 543.3 L512.0 543.9 L512.5 544.5 L513.0 545.1 L513.5 545.7 L514.0 546.3 L514.5 546.9 L515.0 547.4 L515.5 547.9 L516.0 548.4 L516.5 548.9 L517.0 549.4 L517.5 549.8 L518.0 550.2 L518.5 550.5 L519.0 550.9 L519.5 551.2 L520.0 551.4 L520.5 551.7 L521.0 551.8 L521.5 552.0 L522.0 552.1 L522.5 552.2 L523.0 552.3 L523.5 552.3 L524.0 552.3 L524.5 552.2 L525.0 552.1 L525.5 551.9 L526.0 551.7 L526.5 551.5 L527.0 551.2 L527.5 550.9 L528.0 550.5 L528.5 550.1 L529.0 549.7 L529.5 549.2 L530.0 548.7 L530.5 548.1 L531.0 547.5 L531.5 546.9 L532.0 546.3 L532.5 545.6 L533.0 544.9 L533.5 544.2 L534.0 543.5 L534.5 542.8 L535.0 542.1 L535.5 541.3 L536.0 540.5 L536.5 539.8 L537.0 539.0 L537.5 538.3 L538.0 537.5 L538.5 536.7 L539.0 536.0 L539.5 535.3 L540.0 534.6 L540.5 533.9 L541.0 533.2 L541.5 532.5 L542.0 531.9 L542.5 531.3 L543.0 530.7 L543.5 530.1 L544.0 529.6 L544.5 529.1 L545.0 528.7 L545.5 528.3 L546.0 527.9 L546.5 527.6 L547.0 527.3 L547.5 527.1 L548.0 526.9 L548.5 526.7 L549.0 526.6 L549.5 526.5 L550.0 526.5 L550.5 526.5 L551.0 526.6 L551.5 526.6 L552.0 526.7 L552.5 526.9 L553.0 527.0 L553.5 527.2 L554.0 527.5 L554.5 527.7 L555.0 528.0 L555.5 528.3 L556.0 528.6 L556.5 529.0 L557.0 529.4 L557.5 529.8 L558.0 530.2 L558.5 530.7 L559.0 531.1 L559.5 531.6 L560.0 532.1 L560.5 532.7 L561.0 533.2 L561.5 533.8 L562.0 534.3 L562.5 534.9 L563.0 535.5 L563.5 536.1 L564.0 536.7 L564.5 537.3 L565.0 537.9 L565.5 538.5 L566.0 539.1 L566.5 539.8 L567.0 540.4 L567.5 541.0 L568.0 541.6 L568.5 542.2 L569.0 542.8 L569.5 543.4 L570.0 543.9 L570.5 544.5 L571.0 545.0 L571.5 545.6 L572.0 546.1 L572.5 546.6 L573.0 547.0 L573.5 547.5 L574.0 547.9 L574.5 548.3 L575.0 548.7 L575.5 549.1 L576.0 549.4 L576.5 549.7 L577.0 550.0 L577.5 550.3 L578.0 550.5 L578.5 550.7 L579.0 550.9 L579.5 551.0 L580.0 551.1 L580.5 551.2 L581.0 551.3 L581.5 551.3 L582.0 551.3 L582.5 551.2 L583.0 551.1 L583.5 551.0 L584.0 550.8 L584.5 550.6 L585.0 550.4 L585.5 550.1 L586.0 549.7 L586.5 549.4 L587.0 549.0 L587.5 548.6 L588.0 548.1 L588.5 547.6 L589.0 547.1 L589.5 546.5 L590.0 546.0 L590.5 545.4 L591.0 544.7 L591.5 544.1 L592.0 543.5 L592.5 542.8 L593.0 542.1 L593.5 541.4 L594.0 540.7 L594.5 540.0 L595.0 539.3 L595.5 538.6 L596.0 537.9 L596.5 537.2 L597.0 536.5 L597.5 535.8 L598.0 535.1 L598.5 534.5 L599.0 533.8 L599.5 533.2 L600.0 532.6 L600.5 532.0 L601.0 531.4 L601.5 530.9 L602.0 530.4 L602.5 529.9 L603.0 529.5 L603.5 529.1 L604.0 528.7 L604.5 528.3 L605.0 528.0 L605.5 527.7 L606.0 527.5 L606.5 527.3 L607.0 527.1 L607.5 527.0 L608.0 526.9 L608.5 526.9 L609.0 526.9 L609.5 526.9 L610.0 527.0 L610.5 527.1 L611.0 527.3 L611.5 527.5 L612.0 527.7 L612.5 528.0 L613.0 528.3 L613.5 528.6 L614.0 529.0 L614.5 529.4 L615.0 529.8 L615.5 530.3 L616.0 530.8 L616.5 531.3 L617.0 531.8 L617.5 532.4 L618.0 533.0 L618.5 533.6 L619.0 534.2 L619.5 534.8 L620.0 535.5 L620.5 536.2 L621.0 536.8 L621.5 537.5 L622.0 538.2 L622.5 538.9 L623.0 539.6 L623.5 540.3 L624.0 541.0 L624.5 541.7 L625.0 542.4 L625.5 543.0 L626.0 543.7 L626.5 544.4 L627.0 545.0 L627.5 545.6 L628.0 546.2 L628.5 546.8 L629.0 547.4 L629.5 547.9 L630.0 548.4 L630.5 548.9 L631.0 549.4 L631.5 549.8 L632.0 550.2 L632.5 550.6 L633.0 550.9 L633.5 551.2 L634.0 551.5 L634.5 551.7 L635.0 551.9 L635.5 552.1 L636.0 552.2 L636.5 552.3 L637.0 552.3 L637.5 552.3 L638.0 552.3 L638.5 552.2 L639.0 552.1 L639.5 551.9 L640.0 551.7 L640.5 551.5 L641.0 551.2 L641.5 550.9 L642.0 550.6 L642.5 550.2 L643.0 549.8 L643.5 549.3 L644.0 548.8 L644.5 548.3 L645.0 547.8 L645.5 547.2 L646.0 546.7 L646.5 546.0 L647.0 545.4 L647.5 544.8 L648.0 544.1 L648.5 543.4 L649.0 542.7 L649.5 542.0 L650.0 541.3 L650.5 540.6 L651.0 539.9 L651.5 539.2 L652.0 538.4 L652.5 537.7 L653.0 537.0 L653.5 536.3 L654.0 535.6 L654.5 534.9 L655.0 534.2 L655.5 533.6 L656.0 532.9 L656.5 532.3 L657.0 531.7 L657.5 531.1 L658.0 530.6 L658.5 530.1 L659.0 529.6 L659.5 529.1 L660.0 528.7 L660.5 528.3 L661.0 527.9 L661.5 527.6 L662.0 527.3 L662.5 527.0" fill="none" stroke="#008080" stroke-width="1.05" shape-rendering="geometricPrecision" stroke-linejoin="round"/><path d="M81.5 539.3 L82.0 539.3 L82.5 539.3 L83.0 539.3 L83.5 539.3 L84.0 539.3 L84.5 539.4 L85.0 539.4 L85.5 539.4 L86.0 539.5 L86.5 539.5 L87.0 539.6 L87.5 539.9 L88.0 540.4 L88.5 541.1 L89.0 541.9 L89.5 542.9 L90.0 543.8 L90.5 544.8 L91.0 545.7 L91.5 546.6 L92.0 547.3 L92.5 547.9 L93.0 548.6 L93.5 549.2 L94.0 549.9 L94.5 550.6 L95.0 551.3 L95.5 552.0 L96.0 552.6 L96.5 553.3 L97.0 553.8 L97.5 554.3 L98.0 554.8 L98.5 555.1 L99.0 555.4 L99.5 555.5 L100.0 555.6 L100.5 555.6 L101.0 555.4 L101.5 555.2 L102.0 555.0 L102.5 554.7 L103.0 554.4 L103.5 554.1 L104.0 553.8 L104.5 553.6 L105.0 553.5 L105.5 553.5 L106.0 553.5 L106.5 553.6 L107.0 553.6 L107.5 553.7 L108.0 553.8 L108.5 554.0 L109.0 554.1 L109.5 554.2 L110.0 554.5 L110.5 554.7 L111.0 555.0 L111.5 555.3 L112.0 555.5 L112.5 555.6 L113.0 555.6 L113.5 555.5 L114.0 555.3 L114.5 555.0 L115.0 554.6 L115.5 554.2 L116.0 553.8 L116.5 553.3 L117.0 552.5 L117.5 551.3 L118.0 549.8 L118.5 548.0 L119.0 546.1 L119.5 544.0 L120.0 541.8 L120.5 539.5 L121.0 537.3 L121.5 535.1 L122.0 532.9 L122.5 531.0 L123.0 529.2 L123.5 527.7 L124.0 526.3 L124.5 525.0 L125.0 523.6 L125.5 522.3 L126.0 520.9 L126.5 519.5 L127.0 518.1 L127.5 516.8 L128.0 515.4 L128.5 514.1 L129.0 512.8 L129.5 511.5 L130.0 510.2 L130.5 509.0 L131.0 507.8 L131.5 506.6 L132.0 505.5 L132.5 504.5 L133.0 503.5 L133.5 502.6 L134.0 501.7 L134.5 500.9 L135.0 500.2 L135.5 499.5 L136.0 499.0 L136.5 498.5 L137.0 498.1 L137.5 497.9 L138.0 497.7 L138.5 497.6 L139.0 497.6 L139.5 497.8 L140.0 498.1 L140.5 498.5 L141.0 499.0 L141.5 499.6 L142.0 500.3 L142.5 501.2 L143.0 502.1 L143.5 503.2 L144.0 504.4 L144.5 505.7 L145.0 507.0 L145.5 508.5 L146.0 510.1 L146.5 511.7 L147.0 513.5 L147.5 515.3 L148.0 517.2 L148.5 519.1 L149.0 521.2 L149.5 523.3 L150.0 525.4 L150.5 527.6 L151.0 529.8 L151.5 532.1 L152.0 534.4 L152.5 536.8 L153.0 539.2 L153.5 541.5 L154.0 543.9 L154.5 546.3 L155.0 548.7 L155.5 551.1 L156.0 553.5 L156.5 555.9 L157.0 558.2 L157.5 560.5 L158.0 562.8 L158.5 565.0 L159.0 567.2 L159.5 569.4 L160.0 571.5 L160.5 573.5 L161.0 575.4 L161.5 577.3 L162.0 579.1 L162.5 580.8 L163.0 582.5 L163.5 584.0 L164.0 585.5 L164.5 586.8 L165.0 588.1 L165.5 589.2 L166.0 590.3 L166.5 591.2 L167.0 592.0 L167.5 592.7 L168.0 593.3 L168.5 593.8 L169.0 594.2 L169.5 594.4 L170.0 594.6 L170.5 594.6 L171.0 594.4 L171.5 594.1 L172.0 593.6 L172.5 592.9 L173.0 592.1 L173.5 591.1 L174.0 589.9 L174.5 588.6 L175.0 587.1 L175.5 585.4 L176.0 583.6 L176.5 581.7 L177.0 579.7 L177.5 577.5 L178.0 575.1 L178.5 572.7 L179.0 570.1 L179.5 567.5 L180.0 564.8 L180.5 561.9 L181.0 559.0 L181.5 556.0 L182.0 553.0 L182.5 549.9 L183.0 546.7 L183.5 543.6 L184.0 540.4 L184.5 537.2 L185.0 533.9 L185.5 530.7 L186.0 527.5 L186.5 524.3 L187.0 521.2 L187.5 518.1 L188.0 515.0 L188.5 512.0 L189.0 509.0 L189.5 506.2 L190.0 503.4 L190.5 500.7 L191.0 498.1 L191.5 495.6 L192.0 493.3 L192.5 491.0 L193.0 488.9 L193.5 486.9 L194.0 485.1 L194.5 483.4 L195.0 481.8 L195.5 480.4 L196.0 479.2 L196.5 478.1 L197.0 477.2 L197.5 476.5 L198.0 475.9 L198.5 475.5 L199.0 475.3 L199.5 475.2 L200.0 475.3 L200.5 475.7 L201.0 476.2 L201.5 476.9 L202.0 477.8 L202.5 478.9 L203.0 480.2 L203.5 481.6 L204.0 483.2 L204.5 485.0 L205.0 487.0 L205.5 489.1 L206.0 491.4 L206.5 493.8 L207.0 496.4 L207.5 499.1 L208.0 502.0 L208.5 504.9 L209.0 508.0 L209.5 511.2 L210.0 514.4 L210.5 517.8 L211.0 521.2 L211.5 524.7 L212.0 528.3 L212.5 531.9 L213.0 535.5 L213.5 539.2 L214.0 542.9 L214.5 546.6 L215.0 550.3 L215.5 554.0 L216.0 557.6 L216.5 561.3 L217.0 564.8 L217.5 568.4 L218.0 571.9 L218.5 575.3 L219.0 578.6 L219.5 581.8 L220.0 584.9 L220.5 588.0 L221.0 590.9 L221.5 593.7 L222.0 596.3 L222.5 598.8 L223.0 601.2 L223.5 603.4 L224.0 605.5 L224.5 607.4 L225.0 609.1 L225.5 610.7 L226.0 612.1 L226.5 613.3 L227.0 614.3 L227.5 615.1 L228.0 615.7 L228.5 616.2 L229.0 616.4 L229.5 616.5 L230.0 616.3 L230.5 616.0 L231.0 615.4 L231.5 614.5 L232.0 613.5 L232.5 612.3 L233.0 610.8 L233.5 609.1 L234.0 607.2 L234.5 605.2 L235.0 602.9 L235.5 600.5 L236.0 597.8 L236.5 595.0 L237.0 592.1 L237.5 588.9 L238.0 585.7 L238.5 582.3 L239.0 578.7 L239.5 575.1 L240.0 571.3 L240.5 567.5 L241.0 563.5 L241.5 559.5 L242.0 555.4 L242.5 551.2 L243.0 547.0 L243.5 542.8 L244.0 538.6 L244.5 534.3 L245.0 530.0 L245.5 525.8 L246.0 521.6 L246.5 517.4 L247.0 513.3 L247.5 509.2 L248.0 505.2 L248.5 501.3 L249.0 497.5 L249.5 493.7 L250.0 490.1 L250.5 486.6 L251.0 483.3 L251.5 480.1 L252.0 477.0 L252.5 474.1 L253.0 471.4 L253.5 468.8 L254.0 466.5 L254.5 464.3 L255.0 462.3 L255.5 460.5 L256.0 458.9 L256.5 457.5 L257.0 456.4 L257.5 455.4 L258.0 454.7 L258.5 454.2 L259.0 453.9 L259.5 453.8 L260.0 454.0 L260.5 454.5 L261.0 455.2 L261.5 456.2 L262.0 457.5 L262.5 459.1 L263.0 460.9 L263.5 463.0 L264.0 465.3 L264.5 467.9 L265.0 470.7 L265.5 473.8 L266.0 477.0 L266.5 480.5 L267.0 484.1 L267.5 488.0 L268.0 492.0 L268.5 496.1 L269.0 500.5 L269.5 504.9 L270.0 509.5 L270.5 514.1 L271.0 518.9 L271.5 523.7 L272.0 528.6 L272.5 533.6 L273.0 538.6 L273.5 543.5 L274.0 548.5 L274.5 553.5 L275.0 558.4 L275.5 563.3 L276.0 568.2 L276.5 572.9 L277.0 577.5 L277.5 582.1 L278.0 586.5 L278.5 590.8 L279.0 594.9 L279.5 598.9 L280.0 602.7 L280.5 606.3 L281.0 609.8 L281.5 613.0 L282.0 616.0 L282.5 618.7 L283.0 621.2 L283.5 623.5 L284.0 625.6 L284.5 627.3 L285.0 628.8 L285.5 630.1 L286.0 631.0 L286.5 631.7 L287.0 632.2 L287.5 632.3 L288.0 632.2 L288.5 631.7 L289.0 631.0 L289.5 630.0 L290.0 628.7 L290.5 627.2 L291.0 625.4 L291.5 623.3 L292.0 620.9 L292.5 618.3 L293.0 615.5 L293.5 612.4 L294.0 609.1 L294.5 605.6 L295.0 601.9 L295.5 597.9 L296.0 593.8 L296.5 589.5 L297.0 585.1 L297.5 580.5 L298.0 575.8 L298.5 570.9 L299.0 566.0 L299.5 560.9 L300.0 555.8 L300.5 550.7 L301.0 545.4 L301.5 540.2 L302.0 534.9 L302.5 529.7 L303.0 524.4 L303.5 519.2 L304.0 514.0 L304.5 508.9 L305.0 503.9 L305.5 499.0 L306.0 494.2 L306.5 489.5 L307.0 484.9 L307.5 480.5 L308.0 476.2 L308.5 472.2 L309.0 468.3 L309.5 464.6 L310.0 461.1 L310.5 457.8 L311.0 454.8 L311.5 452.0 L312.0 449.5 L312.5 447.2 L313.0 445.1 L313.5 443.4 L314.0 441.9 L314.5 440.7 L315.0 439.7 L315.5 439.1 L316.0 438.7 L316.5 438.6 L317.0 438.8 L317.5 439.3 L318.0 440.1 L318.5 441.2 L319.0 442.5 L319.5 444.2 L320.0 446.1 L320.5 448.2 L321.0 450.7 L321.5 453.4 L322.0 456.3 L322.5 459.5 L323.0 463.0 L323.5 466.6 L324.0 470.5 L324.5 474.5 L325.0 478.8 L325.5 483.2 L326.0 487.8 L326.5 492.5 L327.0 497.4 L327.5 502.4 L328.0 507.5 L328.5 512.7 L329.0 518.0 L329.5 523.4 L330.0 528.8 L330.5 534.2 L331.0 539.7 L331.5 545.1 L332.0 550.6 L332.5 556.0 L333.0 561.3 L333.5 566.7 L334.0 571.9 L334.5 577.1 L335.0 582.1 L335.5 587.0 L336.0 591.8 L336.5 596.5 L337.0 601.0 L337.5 605.3 L338.0 609.4 L338.5 613.4 L339.0 617.1 L339.5 620.6 L340.0 623.9 L340.5 627.0 L341.0 629.8 L341.5 632.3 L342.0 634.6 L342.5 636.6 L343.0 638.4 L343.5 639.8 L344.0 641.0 L344.5 641.9 L345.0 642.5 L345.5 642.8 L346.0 642.9 L346.5 642.6 L347.0 642.0 L347.5 641.1 L348.0 639.9 L348.5 638.3 L349.0 636.5 L349.5 634.4 L350.0 632.0 L350.5 629.3 L351.0 626.3 L351.5 623.0 L352.0 619.5 L352.5 615.8 L353.0 611.8 L353.5 607.6 L354.0 603.2 L354.5 598.6 L355.0 593.8 L355.5 588.9 L356.0 583.8 L356.5 578.5 L357.0 573.1 L357.5 567.6 L358.0 562.1 L358.5 556.4 L359.0 550.7 L359.5 545.0 L360.0 539.2 L360.5 533.5 L361.0 527.7 L361.5 522.0 L362.0 516.3 L362.5 510.7 L363.0 505.1 L363.5 499.7 L364.0 494.4 L364.5 489.2 L365.0 484.1 L365.5 479.2 L366.0 474.5 L366.5 470.0 L367.0 465.7 L367.5 461.6 L368.0 457.7 L368.5 454.0 L369.0 450.6 L369.5 447.5 L370.0 444.6 L370.5 442.0 L371.0 439.7 L371.5 437.7 L372.0 436.0 L372.5 434.6 L373.0 433.5 L373.5 432.7 L374.0 432.3 L374.5 432.1 L375.0 432.3 L375.5 432.7 L376.0 433.5 L376.5 434.6 L377.0 435.9 L377.5 437.6 L378.0 439.6 L378.5 441.8 L379.0 444.3 L379.5 447.1 L380.0 450.2 L380.5 453.5 L381.0 457.1 L381.5 460.9 L382.0 465.0 L382.5 469.2 L383.0 473.7 L383.5 478.3 L384.0 483.1 L384.5 488.1 L385.0 493.2 L385.5 498.5 L386.0 503.9 L386.5 509.4 L387.0 515.0 L387.5 520.6 L388.0 526.3 L388.5 532.1 L389.0 537.9 L389.5 543.6 L390.0 549.4 L390.5 555.2 L391.0 560.9 L391.5 566.5 L392.0 572.1 L392.5 577.6 L393.0 583.0 L393.5 588.3 L394.0 593.4 L394.5 598.4 L395.0 603.2 L395.5 607.8 L396.0 612.3 L396.5 616.5 L397.0 620.6 L397.5 624.4 L398.0 628.0 L398.5 631.3 L399.0 634.4 L399.5 637.2 L400.0 639.7 L400.5 641.9 L401.0 643.9 L401.5 645.6 L402.0 646.9 L402.5 648.0 L403.0 648.8 L403.5 649.2 L404.0 649.4 L404.5 649.2 L405.0 648.7 L405.5 647.9 L406.0 646.7 L406.5 645.3 L407.0 643.5 L407.5 641.3 L408.0 638.9 L408.5 636.2 L409.0 633.2 L409.5 629.8 L410.0 626.3 L410.5 622.4 L411.0 618.3 L411.5 614.0 L412.0 609.4 L412.5 604.6 L413.0 599.6 L413.5 594.5 L414.0 589.1 L414.5 583.6 L415.0 578.0 L415.5 572.2 L416.0 566.4 L416.5 560.4 L417.0 554.4 L417.5 548.3 L418.0 542.2 L418.5 536.1 L419.0 530.0 L419.5 523.9 L420.0 517.8 L420.5 511.8 L421.0 505.9 L421.5 500.0 L422.0 494.3 L422.5 488.7 L423.0 483.2 L423.5 477.9 L424.0 472.8 L424.5 467.8 L425.0 463.1 L425.5 458.5 L426.0 454.2 L426.5 450.2 L427.0 446.4 L427.5 442.9 L428.0 439.6 L428.5 436.6 L429.0 434.0 L429.5 431.6 L430.0 429.6 L430.5 427.8 L431.0 426.4 L431.5 425.3 L432.0 424.5 L432.5 424.1 L433.0 424.0 L433.5 424.2 L434.0 424.8 L434.5 425.7 L435.0 426.9 L435.5 428.5 L436.0 430.3 L436.5 432.5 L437.0 435.0 L437.5 437.8 L438.0 440.9 L438.5 444.3 L439.0 447.9 L439.5 451.8 L440.0 456.0 L440.5 460.4 L441.0 465.0 L441.5 469.8 L442.0 474.9 L442.5 480.1 L443.0 485.5 L443.5 491.1 L444.0 496.8 L444.5 502.6 L445.0 508.6 L445.5 514.6 L446.0 520.7 L446.5 526.9 L447.0 533.1 L447.5 539.3 L448.0 545.5 L448.5 551.7 L449.0 557.9 L449.5 564.1 L450.0 570.1 L450.5 576.1 L451.0 582.0 L451.5 587.7 L452.0 593.4 L452.5 598.8 L453.0 604.1 L453.5 609.3 L454.0 614.2 L454.5 618.9 L455.0 623.4 L455.5 627.7 L456.0 631.7 L456.5 635.4 L457.0 638.9 L457.5 642.1 L458.0 645.0 L458.5 647.6 L459.0 649.9 L459.5 651.9 L460.0 653.6 L460.5 655.0 L461.0 656.0 L461.5 656.7 L462.0 657.0 L462.5 657.1 L463.0 656.7 L463.5 656.1 L464.0 655.0 L464.5 653.6 L465.0 651.8 L465.5 649.7 L466.0 647.3 L466.5 644.5 L467.0 641.4 L467.5 638.0 L468.0 634.2 L468.5 630.2 L469.0 625.9 L469.5 621.3 L470.0 616.5 L470.5 611.4 L471.0 606.1 L471.5 600.7 L472.0 595.0 L472.5 589.1 L473.0 583.1 L473.5 577.0 L474.0 570.7 L474.5 564.3 L475.0 557.9 L475.5 551.4 L476.0 544.8 L476.5 538.3 L477.0 531.7 L477.5 525.2 L478.0 518.7 L478.5 512.3 L479.0 505.9 L479.5 499.7 L480.0 493.6 L480.5 487.6 L481.0 481.8 L481.5 476.1 L482.0 470.7 L482.5 465.4 L483.0 460.4 L483.5 455.6 L484.0 451.1 L484.5 446.9 L485.0 442.9 L485.5 439.2 L486.0 435.9 L486.5 432.8 L487.0 430.1 L487.5 427.7 L488.0 425.7 L488.5 424.0 L489.0 422.7 L489.5 421.7 L490.0 421.1 L490.5 420.8 L491.0 420.9 L491.5 421.4 L492.0 422.1 L492.5 423.3 L493.0 424.7 L493.5 426.5 L494.0 428.6 L494.5 431.0 L495.0 433.8 L495.5 436.8 L496.0 440.2 L496.5 443.8 L497.0 447.7 L497.5 451.8 L498.0 456.3 L498.5 460.9 L499.0 465.8 L499.5 470.9 L500.0 476.2 L500.5 481.7 L501.0 487.3 L501.5 493.1 L502.0 499.0 L502.5 505.0 L503.0 511.2 L503.5 517.4 L504.0 523.7 L504.5 530.0 L505.0 536.4 L505.5 542.7 L506.0 549.1 L506.5 555.4 L507.0 561.7 L507.5 567.9 L508.0 574.1 L508.5 580.1 L509.0 586.0 L509.5 591.8 L510.0 597.4 L510.5 602.9 L511.0 608.2 L511.5 613.3 L512.0 618.2 L512.5 622.8 L513.0 627.3 L513.5 631.4 L514.0 635.3 L514.5 638.9 L515.0 642.3 L515.5 645.3 L516.0 648.1 L516.5 650.5 L517.0 652.6 L517.5 654.4 L518.0 655.8 L518.5 657.0 L519.0 657.7 L519.5 658.2 L520.0 658.3 L520.5 658.0 L521.0 657.5 L521.5 656.5 L522.0 655.2 L522.5 653.6 L523.0 651.7 L523.5 649.4 L524.0 646.7 L524.5 643.8 L525.0 640.6 L525.5 637.1 L526.0 633.2 L526.5 629.1 L527.0 624.8 L527.5 620.2 L528.0 615.3 L528.5 610.2 L529.0 605.0 L529.5 599.5 L530.0 593.8 L530.5 588.0 L531.0 582.1 L531.5 576.0 L532.0 569.8 L532.5 563.5 L533.0 557.1 L533.5 550.7 L534.0 544.3 L534.5 537.8 L535.0 531.3 L535.5 524.9 L536.0 518.5 L536.5 512.1 L537.0 505.9 L537.5 499.7 L538.0 493.6 L538.5 487.7 L539.0 481.9 L539.5 476.3 L540.0 470.9 L540.5 465.6 L541.0 460.6 L541.5 455.8 L542.0 451.2 L542.5 446.9 L543.0 442.9 L543.5 439.1 L544.0 435.6 L544.5 432.5 L545.0 429.6 L545.5 427.1 L546.0 424.8 L546.5 422.9 L547.0 421.4 L547.5 420.2 L548.0 419.3 L548.5 418.8 L549.0 418.6 L549.5 418.8 L550.0 419.3 L550.5 420.2 L551.0 421.4 L551.5 423.0 L552.0 425.0 L552.5 427.2 L553.0 429.8 L553.5 432.8 L554.0 436.0 L554.5 439.6 L555.0 443.4 L555.5 447.5 L556.0 451.9 L556.5 456.6 L557.0 461.5 L557.5 466.7 L558.0 472.0 L558.5 477.6 L559.0 483.3 L559.5 489.2 L560.0 495.3 L560.5 501.4 L561.0 507.7 L561.5 514.1 L562.0 520.6 L562.5 527.1 L563.0 533.7 L563.5 540.3 L564.0 546.9 L564.5 553.5 L565.0 560.0 L565.5 566.5 L566.0 572.9 L566.5 579.2 L567.0 585.3 L567.5 591.4 L568.0 597.3 L568.5 603.0 L569.0 608.6 L569.5 613.9 L570.0 619.1 L570.5 624.0 L571.0 628.7 L571.5 633.1 L572.0 637.2 L572.5 641.0 L573.0 644.6 L573.5 647.8 L574.0 650.8 L574.5 653.4 L575.0 655.6 L575.5 657.6 L576.0 659.2 L576.5 660.4 L577.0 661.3 L577.5 661.8 L578.0 662.0 L578.5 661.8 L579.0 661.3 L579.5 660.4 L580.0 659.2 L580.5 657.7 L581.0 655.8 L581.5 653.5 L582.0 651.0 L582.5 648.1 L583.0 644.9 L583.5 641.5 L584.0 637.7 L584.5 633.6 L585.0 629.3 L585.5 624.7 L586.0 619.9 L586.5 614.9 L587.0 609.6 L587.5 604.1 L588.0 598.5 L588.5 592.6 L589.0 586.7 L589.5 580.6 L590.0 574.3 L590.5 568.0 L591.0 561.6 L591.5 555.1 L592.0 548.6 L592.5 542.0 L593.0 535.5 L593.5 528.9 L594.0 522.4 L594.5 515.9 L595.0 509.5 L595.5 503.2 L596.0 496.9 L596.5 490.8 L597.0 484.9 L597.5 479.0 L598.0 473.4 L598.5 467.9 L599.0 462.6 L599.5 457.6 L600.0 452.8 L600.5 448.2 L601.0 443.9 L601.5 439.8 L602.0 436.0 L602.5 432.6 L603.0 429.4 L603.5 426.5 L604.0 424.0 L604.5 421.7 L605.0 419.8 L605.5 418.3 L606.0 417.1 L606.5 416.2 L607.0 415.7 L607.5 415.5 L608.0 415.7 L608.5 416.3 L609.0 417.2 L609.5 418.5 L610.0 420.2 L610.5 422.3 L611.0 424.7 L611.5 427.4 L612.0 430.5 L612.5 434.0 L613.0 437.7 L613.5 441.8 L614.0 446.2 L614.5 450.8 L615.0 455.7 L615.5 460.9 L616.0 466.3 L616.5 472.0 L617.0 477.8 L617.5 483.9 L618.0 490.1 L618.5 496.4 L619.0 502.9 L619.5 509.5 L620.0 516.2 L620.5 523.0 L621.0 529.8 L621.5 536.6 L622.0 543.5 L622.5 550.3 L623.0 557.1 L623.5 563.8 L624.0 570.5 L624.5 577.1 L625.0 583.6 L625.5 589.9 L626.0 596.1 L626.5 602.1 L627.0 607.9 L627.5 613.5 L628.0 618.8 L628.5 624.0 L629.0 628.8 L629.5 633.4 L630.0 637.7 L630.5 641.8 L631.0 645.4 L631.5 648.8 L632.0 651.9 L632.5 654.5 L633.0 656.9 L633.5 658.9 L634.0 660.5 L634.5 661.7 L635.0 662.6 L635.5 663.1 L636.0 663.2 L636.5 662.9 L637.0 662.3 L637.5 661.4 L638.0 660.0 L638.5 658.4 L639.0 656.3 L639.5 654.0 L640.0 651.3 L640.5 648.2 L641.0 644.9 L641.5 641.2 L642.0 637.3 L642.5 633.1 L643.0 628.6 L643.5 623.8 L644.0 618.8 L644.5 613.5 L645.0 608.1 L645.5 602.4 L646.0 596.6 L646.5 590.6 L647.0 584.4 L647.5 578.1 L648.0 571.7 L648.5 565.2 L649.0 558.7 L649.5 552.0 L650.0 545.4 L650.5 538.7 L651.0 532.0 L651.5 525.3 L652.0 518.7 L652.5 512.2 L653.0 505.7 L653.5 499.3 L654.0 493.0 L654.5 486.9 L655.0 480.9 L655.5 475.1 L656.0 469.5 L656.5 464.1 L657.0 458.9 L657.5 453.9 L658.0 449.2 L658.5 444.8 L659.0 440.6 L659.5 436.7 L660.0 433.1 L660.5 429.8 L661.0 426.9 L661.5 424.2 L662.0 421.9 L662.5 420.0" fill="none" stroke="#008000" stroke-width="1.05" shape-rendering="geometricPrecision" stroke-linejoin="round"/><path d="M81.5 539.3 L82.0 539.3 L82.5 539.3 L83.0 539.3 L83.5 539.4 L84.0 539.4 L84.5 539.4 L85.0 539.5 L85.5 539.5 L86.0 539.5 L86.5 539.6 L87.0 539.7 L87.5 539.8 L88.0 540.1 L88.5 540.3 L89.0 540.7 L89.5 541.0 L90.0 541.4 L90.5 541.8 L91.0 542.2 L91.5 542.7 L92.0 543.1 L92.5 543.6 L93.0 544.1 L93.5 544.8 L94.0 545.4 L94.5 546.2 L95.0 546.9 L95.5 547.7 L96.0 548.5 L96.5 549.3 L97.0 550.0 L97.5 550.7 L98.0 551.4 L98.5 552.0 L99.0 552.6 L99.5 553.3 L100.0 553.9 L100.5 554.4 L101.0 554.7 L101.5 554.7 L102.0 554.5 L102.5 554.2 L103.0 553.9 L103.5 553.4 L104.0 553.0 L104.5 552.5 L105.0 552.0 L105.5 551.5 L106.0 550.8 L106.5 550.1 L107.0 549.3 L107.5 548.5 L108.0 547.6 L108.5 546.7 L109.0 545.8 L109.5 544.9 L110.0 543.9 L110.5 543.0 L111.0 542.1 L111.5 541.3 L112.0 540.5 L112.5 539.6 L113.0 538.7 L113.5 537.7 L114.0 536.8 L114.5 535.8 L115.0 534.9 L115.5 534.0 L116.0 533.1 L116.5 532.2 L117.0 531.4 L117.5 530.7 L118.0 530.0 L118.5 529.4 L119.0 528.9 L119.5 528.3 L120.0 527.8 L120.5 527.3 L121.0 526.8 L121.5 526.4 L122.0 526.1 L122.5 525.9 L123.0 525.9 L123.5 526.0 L124.0 526.2 L124.5 526.5 L125.0 526.8 L125.5 527.2 L126.0 527.7 L126.5 528.2 L127.0 528.8 L127.5 529.3 L128.0 529.9 L128.5 530.4 L129.0 530.8 L129.5 531.2 L130.0 531.6 L130.5 531.8 L131.0 532.0 L131.5 532.0 L132.0 532.0 L132.5 531.9 L133.0 531.7 L133.5 531.5 L134.0 531.2 L134.5 530.9 L135.0 530.5 L135.5 530.0 L136.0 529.6 L136.5 529.1 L137.0 528.6 L137.5 528.1 L138.0 527.6 L138.5 527.1 L139.0 526.6 L139.5 526.2 L140.0 525.7 L140.5 525.4 L141.0 525.0 L141.5 524.8 L142.0 524.6 L142.5 524.4 L143.0 524.3 L143.5 524.3 L144.0 524.4 L144.5 524.5 L145.0 524.8 L145.5 525.1 L146.0 525.5 L146.5 526.1 L147.0 526.7 L147.5 527.3 L148.0 528.1 L148.5 528.9 L149.0 529.8 L149.5 530.8 L150.0 531.8 L150.5 532.9 L151.0 534.0 L151.5 535.2 L152.0 536.4 L152.5 537.7 L153.0 538.9 L153.5 540.2 L154.0 541.5 L154.5 542.8 L155.0 544.1 L155.5 545.4 L156.0 546.7 L156.5 548.0 L157.0 549.2 L157.5 550.4 L158.0 551.6 L158.5 552.7 L159.0 553.8 L159.5 554.8 L160.0 555.8 L160.5 556.6 L161.0 557.5 L161.5 558.2 L162.0 558.9 L162.5 559.5 L163.0 560.0 L163.5 560.4 L164.0 560.7 L164.5 560.9 L165.0 561.1 L165.5 561.1 L166.0 561.1 L166.5 561.0 L167.0 560.8 L167.5 560.6 L168.0 560.3 L168.5 560.0 L169.0 559.6 L169.5 559.2 L170.0 558.7 L170.5 558.1 L171.0 557.5 L171.5 556.8 L172.0 556.1 L172.5 555.3 L173.0 554.5 L173.5 553.7 L174.0 552.8 L174.5 551.8 L175.0 550.9 L175.5 549.8 L176.0 548.8 L176.5 547.7 L177.0 546.6 L177.5 545.5 L178.0 544.4 L178.5 543.2 L179.0 542.0 L179.5 540.8 L180.0 539.6 L180.5 538.4 L181.0 537.2 L181.5 536.0 L182.0 534.8 L182.5 533.6 L183.0 532.4 L183.5 531.2 L184.0 530.0 L184.5 528.9 L185.0 527.8 L185.5 526.7 L186.0 525.6 L186.5 524.6 L187.0 523.5 L187.5 522.6 L188.0 521.6 L188.5 520.7 L189.0 519.9 L189.5 519.1 L190.0 518.3 L190.5 517.6 L191.0 516.9 L191.5 516.3 L192.0 515.7 L192.5 515.2 L193.0 514.8 L193.5 514.4 L194.0 514.1 L194.5 513.8 L195.0 513.6 L195.5 513.4 L196.0 513.3 L196.5 513.3 L197.0 513.4 L197.5 513.5 L198.0 513.8 L198.5 514.2 L199.0 514.7 L199.5 515.2 L200.0 515.9 L200.5 516.7 L201.0 517.6 L201.5 518.5 L202.0 519.6 L202.5 520.7 L203.0 521.9 L203.5 523.2 L204.0 524.5 L204.5 525.8 L205.0 527.3 L205.5 528.7 L206.0 530.2 L206.5 531.7 L207.0 533.2 L207.5 534.8 L208.0 536.3 L208.5 537.8 L209.0 539.3 L209.5 540.8 L210.0 542.2 L210.5 543.7 L211.0 545.0 L211.5 546.3 L212.0 547.6 L212.5 548.8 L213.0 549.9 L213.5 551.0 L214.0 551.9 L214.5 552.8 L215.0 553.6 L215.5 554.3 L216.0 554.8 L216.5 555.3 L217.0 555.7 L217.5 556.0 L218.0 556.1 L218.5 556.2 L219.0 556.2 L219.5 556.2 L220.0 556.1 L220.5 556.0 L221.0 555.9 L221.5 555.9 L222.0 555.8 L222.5 555.6 L223.0 555.6 L223.5 555.5 L224.0 555.4 L224.5 555.3 L225.0 555.3 L225.5 555.3 L226.0 555.3 L226.5 555.3 L227.0 555.4 L227.5 555.5 L228.0 555.6 L228.5 555.6 L229.0 555.8 L229.5 555.9 L230.0 555.9 L230.5 556.0 L231.0 556.1 L231.5 556.2 L232.0 556.2 L232.5 556.2 L233.0 556.2 L233.5 556.0 L234.0 555.8 L234.5 555.5 L235.0 555.1 L235.5 554.6 L236.0 554.1 L236.5 553.4 L237.0 552.7 L237.5 551.9 L238.0 551.1 L238.5 550.1 L239.0 549.1 L239.5 548.1 L240.0 547.0 L240.5 545.8 L241.0 544.6 L241.5 543.3 L242.0 542.0 L242.5 540.7 L243.0 539.4 L243.5 538.0 L244.0 536.6 L244.5 535.2 L245.0 533.8 L245.5 532.4 L246.0 531.0 L246.5 529.6 L247.0 528.2 L247.5 526.9 L248.0 525.6 L248.5 524.3 L249.0 523.0 L249.5 521.8 L250.0 520.6 L250.5 519.5 L251.0 518.5 L251.5 517.5 L252.0 516.5 L252.5 515.7 L253.0 514.9 L253.5 514.2 L254.0 513.5 L254.5 513.0 L255.0 512.5 L255.5 512.1 L256.0 511.8 L256.5 511.6 L257.0 511.4 L257.5 511.4 L258.0 511.4 L258.5 511.6 L259.0 511.8 L259.5 512.0 L260.0 512.4 L260.5 512.8 L261.0 513.3 L261.5 513.9 L262.0 514.6 L262.5 515.3 L263.0 516.1 L263.5 516.9 L264.0 517.9 L264.5 518.8 L265.0 519.9 L265.5 521.0 L266.0 522.1 L266.5 523.3 L267.0 524.6 L267.5 525.9 L268.0 527.2 L268.5 528.6 L269.0 530.0 L269.5 531.5 L270.0 532.9 L270.5 534.4 L271.0 535.9 L271.5 537.4 L272.0 539.0 L272.5 540.5 L273.0 542.0 L273.5 543.6 L274.0 545.1 L274.5 546.6 L275.0 548.1 L275.5 549.6 L276.0 551.0 L276.5 552.5 L277.0 553.9 L277.5 555.2 L278.0 556.6 L278.5 557.9 L279.0 559.1 L279.5 560.3 L280.0 561.4 L280.5 562.5 L281.0 563.6 L281.5 564.5 L282.0 565.4 L282.5 566.3 L283.0 567.1 L283.5 567.8 L284.0 568.4 L284.5 569.0 L285.0 569.5 L285.5 569.9 L286.0 570.2 L286.5 570.5 L287.0 570.7 L287.5 570.8 L288.0 570.8 L288.5 570.7 L289.0 570.5 L289.5 570.2 L290.0 569.7 L290.5 569.1 L291.0 568.4 L291.5 567.6 L292.0 566.7 L292.5 565.7 L293.0 564.5 L293.5 563.3 L294.0 562.0 L294.5 560.5 L295.0 559.0 L295.5 557.4 L296.0 555.8 L296.5 554.1 L297.0 552.3 L297.5 550.5 L298.0 548.6 L298.5 546.7 L299.0 544.8 L299.5 542.9 L300.0 540.9 L300.5 539.0 L301.0 537.0 L301.5 535.1 L302.0 533.2 L302.5 531.3 L303.0 529.5 L303.5 527.7 L304.0 525.9 L304.5 524.2 L305.0 522.6 L305.5 521.1 L306.0 519.6 L306.5 518.2 L307.0 516.9 L307.5 515.7 L308.0 514.6 L308.5 513.6 L309.0 512.7 L309.5 512.0 L310.0 511.3 L310.5 510.8 L311.0 510.4 L311.5 510.1 L312.0 509.9 L312.5 509.9 L313.0 509.9 L313.5 510.1 L314.0 510.2 L314.5 510.5 L315.0 510.8 L315.5 511.1 L316.0 511.6 L316.5 512.0 L317.0 512.6 L317.5 513.2 L318.0 513.9 L318.5 514.6 L319.0 515.4 L319.5 516.2 L320.0 517.1 L320.5 518.0 L321.0 519.0 L321.5 520.0 L322.0 521.0 L322.5 522.1 L323.0 523.3 L323.5 524.5 L324.0 525.7 L324.5 526.9 L325.0 528.2 L325.5 529.5 L326.0 530.8 L326.5 532.1 L327.0 533.5 L327.5 534.8 L328.0 536.2 L328.5 537.6 L329.0 539.0 L329.5 540.4 L330.0 541.7 L330.5 543.1 L331.0 544.5 L331.5 545.9 L332.0 547.2 L332.5 548.6 L333.0 549.9 L333.5 551.2 L334.0 552.5 L334.5 553.7 L335.0 554.9 L335.5 556.1 L336.0 557.2 L336.5 558.3 L337.0 559.4 L337.5 560.4 L338.0 561.4 L338.5 562.4 L339.0 563.3 L339.5 564.1 L340.0 564.9 L340.5 565.6 L341.0 566.3 L341.5 566.9 L342.0 567.5 L342.5 567.9 L343.0 568.4 L343.5 568.8 L344.0 569.1 L344.5 569.3 L345.0 569.5 L345.5 569.6 L346.0 569.7 L346.5 569.7 L347.0 569.6 L347.5 569.4 L348.0 569.1 L348.5 568.8 L349.0 568.3 L349.5 567.8 L350.0 567.2 L350.5 566.5 L351.0 565.7 L351.5 564.9 L352.0 563.9 L352.5 562.9 L353.0 561.9 L353.5 560.7 L354.0 559.5 L354.5 558.3 L355.0 557.0 L355.5 555.6 L356.0 554.2 L356.5 552.7 L357.0 551.2 L357.5 549.7 L358.0 548.2 L358.5 546.6 L359.0 545.0 L359.5 543.3 L360.0 541.7 L360.5 540.0 L361.0 538.4 L361.5 536.7 L362.0 535.1 L362.5 533.4 L363.0 531.8 L363.5 530.2 L364.0 528.6 L364.5 527.1 L365.0 525.5 L365.5 524.1 L366.0 522.6 L366.5 521.2 L367.0 519.9 L367.5 518.6 L368.0 517.4 L368.5 516.2 L369.0 515.1 L369.5 514.1 L370.0 513.1 L370.5 512.2 L371.0 511.4 L371.5 510.6 L372.0 510.0 L372.5 509.4 L373.0 508.9 L373.5 508.5 L374.0 508.2 L374.5 507.9 L375.0 507.8 L375.5 507.7 L376.0 507.7 L376.5 507.9 L377.0 508.2 L377.5 508.6 L378.0 509.1 L378.5 509.7 L379.0 510.4 L379.5 511.2 L380.0 512.2 L380.5 513.2 L381.0 514.4 L381.5 515.6 L382.0 517.0 L382.5 518.4 L383.0 519.9 L383.5 521.5 L384.0 523.1 L384.5 524.8 L385.0 526.6 L385.5 528.4 L386.0 530.3 L386.5 532.2 L387.0 534.2 L387.5 536.1 L388.0 538.1 L388.5 540.1 L389.0 542.2 L389.5 544.2 L390.0 546.2 L390.5 548.1 L391.0 550.1 L391.5 552.0 L392.0 553.9 L392.5 555.8 L393.0 557.6 L393.5 559.4 L394.0 561.0 L394.5 562.7 L395.0 564.2 L395.5 565.7 L396.0 567.1 L396.5 568.4 L397.0 569.6 L397.5 570.7 L398.0 571.7 L398.5 572.6 L399.0 573.4 L399.5 574.1 L400.0 574.7 L400.5 575.1 L401.0 575.5 L401.5 575.7 L402.0 575.8 L402.5 575.8 L403.0 575.7 L403.5 575.5 L404.0 575.2 L404.5 574.9 L405.0 574.4 L405.5 573.9 L406.0 573.3 L406.5 572.6 L407.0 571.9 L407.5 571.0 L408.0 570.1 L408.5 569.1 L409.0 568.1 L409.5 567.0 L410.0 565.8 L410.5 564.5 L411.0 563.2 L411.5 561.8 L412.0 560.4 L412.5 559.0 L413.0 557.5 L413.5 555.9 L414.0 554.3 L414.5 552.7 L415.0 551.1 L415.5 549.4 L416.0 547.7 L416.5 546.0 L417.0 544.3 L417.5 542.6 L418.0 540.9 L418.5 539.1 L419.0 537.4 L419.5 535.7 L420.0 534.0 L420.5 532.4 L421.0 530.7 L421.5 529.1 L422.0 527.5 L422.5 525.9 L423.0 524.4 L423.5 523.0 L424.0 521.5 L424.5 520.2 L425.0 518.8 L425.5 517.6 L426.0 516.4 L426.5 515.2 L427.0 514.2 L427.5 513.2 L428.0 512.2 L428.5 511.4 L429.0 510.6 L429.5 509.9 L430.0 509.3 L430.5 508.7 L431.0 508.3 L431.5 507.9 L432.0 507.6 L432.5 507.4 L433.0 507.3 L433.5 507.3 L434.0 507.4 L434.5 507.5 L435.0 507.8 L435.5 508.2 L436.0 508.6 L436.5 509.2 L437.0 509.8 L437.5 510.6 L438.0 511.4 L438.5 512.3 L439.0 513.3 L439.5 514.3 L440.0 515.5 L440.5 516.7 L441.0 518.0 L441.5 519.4 L442.0 520.8 L442.5 522.3 L443.0 523.8 L443.5 525.4 L444.0 527.0 L444.5 528.6 L445.0 530.3 L445.5 532.0 L446.0 533.8 L446.5 535.5 L447.0 537.3 L447.5 539.1 L448.0 540.9 L448.5 542.6 L449.0 544.4 L449.5 546.2 L450.0 547.9 L450.5 549.6 L451.0 551.3 L451.5 552.9 L452.0 554.5 L452.5 556.0 L453.0 557.5 L453.5 559.0 L454.0 560.4 L454.5 561.7 L455.0 562.9 L455.5 564.1 L456.0 565.2 L456.5 566.2 L457.0 567.2 L457.5 568.0 L458.0 568.8 L458.5 569.5 L459.0 570.1 L459.5 570.6 L460.0 571.0 L460.5 571.3 L461.0 571.5 L461.5 571.6 L462.0 571.6 L462.5 571.5 L463.0 571.3 L463.5 571.0 L464.0 570.7 L464.5 570.2 L465.0 569.6 L465.5 568.9 L466.0 568.2 L466.5 567.3 L467.0 566.4 L467.5 565.4 L468.0 564.3 L468.5 563.1 L469.0 561.9 L469.5 560.6 L470.0 559.2 L470.5 557.7 L471.0 556.2 L471.5 554.6 L472.0 553.0 L472.5 551.4 L473.0 549.7 L473.5 547.9 L474.0 546.1 L474.5 544.3 L475.0 542.5 L475.5 540.7 L476.0 538.8 L476.5 536.9 L477.0 535.1 L477.5 533.2 L478.0 531.4 L478.5 529.5 L479.0 527.7 L479.5 525.9 L480.0 524.1 L480.5 522.4 L481.0 520.7 L481.5 519.0 L482.0 517.4 L482.5 515.9 L483.0 514.4 L483.5 512.9 L484.0 511.6 L484.5 510.3 L485.0 509.0 L485.5 507.9 L486.0 506.8 L486.5 505.8 L487.0 504.9 L487.5 504.1 L488.0 503.3 L488.5 502.7 L489.0 502.1 L489.5 501.7 L490.0 501.3 L490.5 501.0 L491.0 500.9 L491.5 500.8 L492.0 500.8 L492.5 501.0 L493.0 501.2 L493.5 501.6 L494.0 502.1 L494.5 502.7 L495.0 503.4 L495.5 504.2 L496.0 505.1 L496.5 506.1 L497.0 507.2 L497.5 508.4 L498.0 509.7 L498.5 511.0 L499.0 512.5 L499.5 514.0 L500.0 515.6 L500.5 517.3 L501.0 519.0 L501.5 520.8 L502.0 522.6 L502.5 524.5 L503.0 526.4 L503.5 528.4 L504.0 530.4 L504.5 532.4 L505.0 534.4 L505.5 536.4 L506.0 538.5 L506.5 540.5 L507.0 542.5 L507.5 544.5 L508.0 546.5 L508.5 548.5 L509.0 550.4 L509.5 552.3 L510.0 554.1 L510.5 555.9 L511.0 557.6 L511.5 559.3 L512.0 560.9 L512.5 562.4 L513.0 563.9 L513.5 565.2 L514.0 566.5 L514.5 567.7 L515.0 568.8 L515.5 569.8 L516.0 570.7 L516.5 571.5 L517.0 572.2 L517.5 572.8 L518.0 573.3 L518.5 573.7 L519.0 573.9 L519.5 574.1 L520.0 574.1 L520.5 574.0 L521.0 573.8 L521.5 573.6 L522.0 573.2 L522.5 572.7 L523.0 572.1 L523.5 571.4 L524.0 570.6 L524.5 569.7 L525.0 568.7 L525.5 567.6 L526.0 566.5 L526.5 565.2 L527.0 563.9 L527.5 562.5 L528.0 561.0 L528.5 559.5 L529.0 557.9 L529.5 556.3 L530.0 554.5 L530.5 552.8 L531.0 551.0 L531.5 549.2 L532.0 547.3 L532.5 545.4 L533.0 543.5 L533.5 541.6 L534.0 539.6 L534.5 537.7 L535.0 535.8 L535.5 533.8 L536.0 531.9 L536.5 530.0 L537.0 528.2 L537.5 526.4 L538.0 524.6 L538.5 522.8 L539.0 521.1 L539.5 519.5 L540.0 517.9 L540.5 516.4 L541.0 514.9 L541.5 513.5 L542.0 512.2 L542.5 511.0 L543.0 509.8 L543.5 508.8 L544.0 507.8 L544.5 506.9 L545.0 506.2 L545.5 505.5 L546.0 504.9 L546.5 504.4 L547.0 504.1 L547.5 503.8 L548.0 503.7 L548.5 503.6 L549.0 503.6 L549.5 503.8 L550.0 504.0 L550.5 504.3 L551.0 504.7 L551.5 505.2 L552.0 505.8 L552.5 506.5 L553.0 507.3 L553.5 508.1 L554.0 509.0 L554.5 510.0 L555.0 511.1 L555.5 512.3 L556.0 513.5 L556.5 514.8 L557.0 516.1 L557.5 517.5 L558.0 519.0 L558.5 520.5 L559.0 522.1 L559.5 523.7 L560.0 525.3 L560.5 527.0 L561.0 528.7 L561.5 530.5 L562.0 532.2 L562.5 534.0 L563.0 535.8 L563.5 537.6 L564.0 539.4 L564.5 541.2 L565.0 543.0 L565.5 544.8 L566.0 546.5 L566.5 548.3 L567.0 550.0 L567.5 551.7 L568.0 553.4 L568.5 555.0 L569.0 556.6 L569.5 558.1 L570.0 559.6 L570.5 561.0 L571.0 562.4 L571.5 563.7 L572.0 565.0 L572.5 566.1 L573.0 567.2 L573.5 568.3 L574.0 569.2 L574.5 570.1 L575.0 570.9 L575.5 571.6 L576.0 572.2 L576.5 572.8 L577.0 573.2 L577.5 573.6 L578.0 573.8 L578.5 574.0 L579.0 574.1 L579.5 574.1 L580.0 573.9 L580.5 573.7 L581.0 573.3 L581.5 572.8 L582.0 572.2 L582.5 571.5 L583.0 570.7 L583.5 569.8 L584.0 568.7 L584.5 567.6 L585.0 566.3 L585.5 565.0 L586.0 563.6 L586.5 562.1 L587.0 560.5 L587.5 558.8 L588.0 557.1 L588.5 555.3 L589.0 553.4 L589.5 551.5 L590.0 549.6 L590.5 547.6 L591.0 545.5 L591.5 543.5 L592.0 541.4 L592.5 539.3 L593.0 537.2 L593.5 535.1 L594.0 533.0 L594.5 530.9 L595.0 528.9 L595.5 526.8 L596.0 524.8 L596.5 522.9 L597.0 521.0 L597.5 519.1 L598.0 517.3 L598.5 515.6 L599.0 513.9 L599.5 512.3 L600.0 510.8 L600.5 509.4 L601.0 508.1 L601.5 506.8 L602.0 505.7 L602.5 504.6 L603.0 503.7 L603.5 502.9 L604.0 502.2 L604.5 501.6 L605.0 501.1 L605.5 500.7 L606.0 500.5 L606.5 500.3 L607.0 500.3 L607.5 500.4 L608.0 500.6 L608.5 500.9 L609.0 501.4 L609.5 501.9 L610.0 502.6 L610.5 503.3 L611.0 504.2 L611.5 505.1 L612.0 506.2 L612.5 507.4 L613.0 508.6 L613.5 509.9 L614.0 511.3 L614.5 512.8 L615.0 514.4 L615.5 516.0 L616.0 517.8 L616.5 519.5 L617.0 521.3 L617.5 523.2 L618.0 525.1 L618.5 527.1 L619.0 529.1 L619.5 531.1 L620.0 533.2 L620.5 535.2 L621.0 537.3 L621.5 539.4 L622.0 541.4 L622.5 543.5 L623.0 545.6 L623.5 547.6 L624.0 549.6 L624.5 551.6 L625.0 553.5 L625.5 555.4 L626.0 557.3 L626.5 559.0 L627.0 560.8 L627.5 562.4 L628.0 564.0 L628.5 565.6 L629.0 567.0 L629.5 568.4 L630.0 569.7 L630.5 570.8 L631.0 571.9 L631.5 572.9 L632.0 573.8 L632.5 574.6 L633.0 575.3 L633.5 575.9 L634.0 576.4 L634.5 576.8 L635.0 577.0 L635.5 577.2 L636.0 577.2 L636.5 577.1 L637.0 576.9 L637.5 576.7 L638.0 576.3 L638.5 575.8 L639.0 575.2 L639.5 574.5 L640.0 573.8 L640.5 572.9 L641.0 571.9 L641.5 570.9 L642.0 569.7 L642.5 568.5 L643.0 567.2 L643.5 565.8 L644.0 564.4 L644.5 562.9 L645.0 561.3 L645.5 559.7 L646.0 558.0 L646.5 556.2 L647.0 554.5 L647.5 552.6 L648.0 550.8 L648.5 548.9 L649.0 547.0 L649.5 545.0 L650.0 543.1 L650.5 541.1 L651.0 539.2 L651.5 537.2 L652.0 535.3 L652.5 533.4 L653.0 531.4 L653.5 529.6 L654.0 527.7 L654.5 525.9 L655.0 524.1 L655.5 522.4 L656.0 520.7 L656.5 519.1 L657.0 517.5 L657.5 516.0 L658.0 514.6 L658.5 513.2 L659.0 511.9 L659.5 510.7 L660.0 509.6 L660.5 508.6 L661.0 507.6 L661.5 506.8 L662.0 506.0 L662.5 505.4 L663.0 504.8" fill="none" stroke="#ff00ff" stroke-width="1.05" shape-rendering="geometricPrecision" stroke-linejoin="round"/><path d="M81.5 539.3 L82.0 539.3 L82.5 539.3 L83.0 539.3 L83.5 539.4 L84.0 539.4 L84.5 539.4 L85.0 539.5 L85.5 539.5 L86.0 539.5 L86.5 539.6 L87.0 539.7 L87.5 539.9 L88.0 540.2 L88.5 540.5 L89.0 540.9 L89.5 541.3 L90.0 541.8 L90.5 542.2 L91.0 542.7 L91.5 543.1 L92.0 543.5 L92.5 543.9 L93.0 544.3 L93.5 544.8 L94.0 545.2 L94.5 545.7 L95.0 546.1 L95.5 546.6 L96.0 547.1 L96.5 547.5 L97.0 548.0 L97.5 548.4 L98.0 548.8 L98.5 549.2 L99.0 549.5 L99.5 549.9 L100.0 550.2 L100.5 550.5 L101.0 550.9 L101.5 551.1 L102.0 551.4 L102.5 551.5 L103.0 551.6 L103.5 551.5 L104.0 551.3 L104.5 551.0 L105.0 550.5 L105.5 550.0 L106.0 549.4 L106.5 548.8 L107.0 548.2 L107.5 547.6 L108.0 547.0 L108.5 546.4 L109.0 545.7 L109.5 545.0 L110.0 544.3 L110.5 543.5 L111.0 542.7 L111.5 541.9 L112.0 541.1 L112.5 540.2 L113.0 539.4 L113.5 538.5 L114.0 537.6 L114.5 536.6 L115.0 535.5 L115.5 534.4 L116.0 533.3 L116.5 532.1 L117.0 530.9 L117.5 529.7 L118.0 528.5 L118.5 527.3 L119.0 526.1 L119.5 524.9 L120.0 523.8 L120.5 522.7 L121.0 521.6 L121.5 520.7 L122.0 519.7 L122.5 518.9 L123.0 518.2 L123.5 517.5 L124.0 517.0 L124.5 516.6 L125.0 516.3 L125.5 516.1 L126.0 516.1 L126.5 516.2 L127.0 516.4 L127.5 516.6 L128.0 517.0 L128.5 517.5 L129.0 518.0 L129.5 518.6 L130.0 519.3 L130.5 520.1 L131.0 521.0 L131.5 522.0 L132.0 523.0 L132.5 524.1 L133.0 525.3 L133.5 526.5 L134.0 527.8 L134.5 529.1 L135.0 530.5 L135.5 531.9 L136.0 533.3 L136.5 534.8 L137.0 536.3 L137.5 537.9 L138.0 539.4 L138.5 541.0 L139.0 542.6 L139.5 544.1 L140.0 545.7 L140.5 547.2 L141.0 548.8 L141.5 550.3 L142.0 551.7 L142.5 553.2 L143.0 554.6 L143.5 556.0 L144.0 557.3 L144.5 558.5 L145.0 559.7 L145.5 560.9 L146.0 561.9 L146.5 562.9 L147.0 563.8 L147.5 564.7 L148.0 565.4 L148.5 566.1 L149.0 566.7 L149.5 567.2 L150.0 567.7 L150.5 568.0 L151.0 568.2 L151.5 568.4 L152.0 568.4 L152.5 568.3 L153.0 568.1 L153.5 567.8 L154.0 567.3 L154.5 566.7 L155.0 565.9 L155.5 565.0 L156.0 564.0 L156.5 562.9 L157.0 561.6 L157.5 560.3 L158.0 558.8 L158.5 557.3 L159.0 555.6 L159.5 553.9 L160.0 552.1 L160.5 550.2 L161.0 548.3 L161.5 546.3 L162.0 544.3 L162.5 542.3 L163.0 540.2 L163.5 538.2 L164.0 536.1 L164.5 534.0 L165.0 532.0 L165.5 530.0 L166.0 528.0 L166.5 526.0 L167.0 524.1 L167.5 522.3 L168.0 520.5 L168.5 518.9 L169.0 517.3 L169.5 515.8 L170.0 514.4 L170.5 513.1 L171.0 511.9 L171.5 510.9 L172.0 509.9 L172.5 509.1 L173.0 508.5 L173.5 507.9 L174.0 507.5 L174.5 507.2 L175.0 507.1 L175.5 507.1 L176.0 507.2 L176.5 507.4 L177.0 507.7 L177.5 508.1 L178.0 508.6 L178.5 509.2 L179.0 509.8 L179.5 510.6 L180.0 511.4 L180.5 512.4 L181.0 513.4 L181.5 514.4 L182.0 515.6 L182.5 516.8 L183.0 518.1 L183.5 519.4 L184.0 520.8 L184.5 522.2 L185.0 523.7 L185.5 525.2 L186.0 526.8 L186.5 528.4 L187.0 530.0 L187.5 531.6 L188.0 533.2 L188.5 534.9 L189.0 536.5 L189.5 538.2 L190.0 539.8 L190.5 541.4 L191.0 543.0 L191.5 544.6 L192.0 546.1 L192.5 547.6 L193.0 549.0 L193.5 550.4 L194.0 551.8 L194.5 553.1 L195.0 554.3 L195.5 555.4 L196.0 556.5 L196.5 557.5 L197.0 558.5 L197.5 559.3 L198.0 560.1 L198.5 560.8 L199.0 561.4 L199.5 561.9 L200.0 562.3 L200.5 562.6 L201.0 562.8 L201.5 563.0 L202.0 563.0 L202.5 563.0 L203.0 562.9 L203.5 562.7 L204.0 562.5 L204.5 562.2 L205.0 561.9 L205.5 561.5 L206.0 561.0 L206.5 560.5 L207.0 560.0 L207.5 559.4 L208.0 558.7 L208.5 558.0 L209.0 557.3 L209.5 556.5 L210.0 555.6 L210.5 554.7 L211.0 553.8 L211.5 552.8 L212.0 551.9 L212.5 550.8 L213.0 549.8 L213.5 548.7 L214.0 547.6 L214.5 546.4 L215.0 545.3 L215.5 544.1 L216.0 543.0 L216.5 541.8 L217.0 540.6 L217.5 539.4 L218.0 538.2 L218.5 537.0 L219.0 535.8 L219.5 534.6 L220.0 533.4 L220.5 532.2 L221.0 531.1 L221.5 529.9 L222.0 528.8 L222.5 527.7 L223.0 526.7 L223.5 525.7 L224.0 524.7 L224.5 523.7 L225.0 522.8 L225.5 521.9 L226.0 521.0 L226.5 520.2 L227.0 519.4 L227.5 518.7 L228.0 518.1 L228.5 517.4 L229.0 516.9 L229.5 516.4 L230.0 515.9 L230.5 515.5 L231.0 515.2 L231.5 514.9 L232.0 514.6 L232.5 514.5 L233.0 514.4 L233.5 514.3 L234.0 514.3 L234.5 514.4 L235.0 514.6 L235.5 514.9 L236.0 515.2 L236.5 515.7 L237.0 516.2 L237.5 516.8 L238.0 517.5 L238.5 518.3 L239.0 519.1 L239.5 520.0 L240.0 521.0 L240.5 522.1 L241.0 523.2 L241.5 524.4 L242.0 525.6 L242.5 526.9 L243.0 528.3 L243.5 529.7 L244.0 531.1 L244.5 532.6 L245.0 534.1 L245.5 535.7 L246.0 537.3 L246.5 538.9 L247.0 540.5 L247.5 542.2 L248.0 543.8 L248.5 545.4 L249.0 547.1 L249.5 548.7 L250.0 550.4 L250.5 552.0 L251.0 553.6 L251.5 555.2 L252.0 556.8 L252.5 558.3 L253.0 559.8 L253.5 561.2 L254.0 562.6 L254.5 564.0 L255.0 565.3 L255.5 566.5 L256.0 567.7 L256.5 568.8 L257.0 569.9 L257.5 570.9 L258.0 571.8 L258.5 572.6 L259.0 573.4 L259.5 574.1 L260.0 574.7 L260.5 575.2 L261.0 575.7 L261.5 576.0 L262.0 576.3 L262.5 576.5 L263.0 576.6 L263.5 576.6 L264.0 576.4 L264.5 576.2 L265.0 575.7 L265.5 575.1 L266.0 574.4 L266.5 573.5 L267.0 572.4 L267.5 571.3 L268.0 569.9 L268.5 568.5 L269.0 566.9 L269.5 565.3 L270.0 563.5 L270.5 561.6 L271.0 559.6 L271.5 557.5 L272.0 555.4 L272.5 553.2 L273.0 550.9 L273.5 548.5 L274.0 546.2 L274.5 543.8 L275.0 541.3 L275.5 538.9 L276.0 536.4 L276.5 534.0 L277.0 531.6 L277.5 529.2 L278.0 526.8 L278.5 524.5 L279.0 522.2 L279.5 520.0 L280.0 517.8 L280.5 515.8 L281.0 513.8 L281.5 512.0 L282.0 510.2 L282.5 508.5 L283.0 507.0 L283.5 505.6 L284.0 504.3 L284.5 503.2 L285.0 502.1 L285.5 501.3 L286.0 500.6 L286.5 500.0 L287.0 499.6 L287.5 499.3 L288.0 499.2 L288.5 499.2 L289.0 499.4 L289.5 499.6 L290.0 500.0 L290.5 500.5 L291.0 501.1 L291.5 501.8 L292.0 502.6 L292.5 503.5 L293.0 504.5 L293.5 505.7 L294.0 506.9 L294.5 508.2 L295.0 509.5 L295.5 511.0 L296.0 512.6 L296.5 514.2 L297.0 515.9 L297.5 517.6 L298.0 519.4 L298.5 521.3 L299.0 523.2 L299.5 525.2 L300.0 527.2 L300.5 529.2 L301.0 531.2 L301.5 533.3 L302.0 535.4 L302.5 537.5 L303.0 539.5 L303.5 541.6 L304.0 543.7 L304.5 545.7 L305.0 547.7 L305.5 549.7 L306.0 551.7 L306.5 553.6 L307.0 555.4 L307.5 557.2 L308.0 559.0 L308.5 560.6 L309.0 562.3 L309.5 563.8 L310.0 565.2 L310.5 566.6 L311.0 567.9 L311.5 569.1 L312.0 570.2 L312.5 571.2 L313.0 572.1 L313.5 572.8 L314.0 573.5 L314.5 574.1 L315.0 574.6 L315.5 574.9 L316.0 575.2 L316.5 575.3 L317.0 575.3 L317.5 575.2 L318.0 575.1 L318.5 574.8 L319.0 574.5 L319.5 574.1 L320.0 573.5 L320.5 573.0 L321.0 572.3 L321.5 571.6 L322.0 570.7 L322.5 569.8 L323.0 568.9 L323.5 567.8 L324.0 566.7 L324.5 565.6 L325.0 564.3 L325.5 563.0 L326.0 561.7 L326.5 560.3 L327.0 558.8 L327.5 557.3 L328.0 555.8 L328.5 554.2 L329.0 552.6 L329.5 551.0 L330.0 549.3 L330.5 547.6 L331.0 545.9 L331.5 544.2 L332.0 542.5 L332.5 540.7 L333.0 539.0 L333.5 537.3 L334.0 535.6 L334.5 533.8 L335.0 532.2 L335.5 530.5 L336.0 528.8 L336.5 527.2 L337.0 525.6 L337.5 524.1 L338.0 522.6 L338.5 521.1 L339.0 519.7 L339.5 518.3 L340.0 517.0 L340.5 515.7 L341.0 514.5 L341.5 513.4 L342.0 512.3 L342.5 511.3 L343.0 510.4 L343.5 509.6 L344.0 508.8 L344.5 508.1 L345.0 507.5 L345.5 506.9 L346.0 506.5 L346.5 506.1 L347.0 505.8 L347.5 505.6 L348.0 505.5 L348.5 505.5 L349.0 505.6 L349.5 505.8 L350.0 506.1 L350.5 506.6 L351.0 507.1 L351.5 507.8 L352.0 508.6 L352.5 509.5 L353.0 510.5 L353.5 511.6 L354.0 512.8 L354.5 514.1 L355.0 515.5 L355.5 517.0 L356.0 518.6 L356.5 520.2 L357.0 521.9 L357.5 523.7 L358.0 525.6 L358.5 527.5 L359.0 529.5 L359.5 531.5 L360.0 533.6 L360.5 535.7 L361.0 537.8 L361.5 539.9 L362.0 542.1 L362.5 544.2 L363.0 546.4 L363.5 548.6 L364.0 550.7 L364.5 552.8 L365.0 554.9 L365.5 557.0 L366.0 559.0 L366.5 561.0 L367.0 562.9 L367.5 564.8 L368.0 566.6 L368.5 568.3 L369.0 570.0 L369.5 571.6 L370.0 573.1 L370.5 574.5 L371.0 575.9 L371.5 577.1 L372.0 578.2 L372.5 579.2 L373.0 580.2 L373.5 581.0 L374.0 581.7 L374.5 582.2 L375.0 582.7 L375.5 583.1 L376.0 583.3 L376.5 583.4 L377.0 583.4 L377.5 583.2 L378.0 582.9 L378.5 582.4 L379.0 581.8 L379.5 581.1 L380.0 580.2 L380.5 579.2 L381.0 578.1 L381.5 576.8 L382.0 575.4 L382.5 573.8 L383.0 572.2 L383.5 570.4 L384.0 568.6 L384.5 566.6 L385.0 564.6 L385.5 562.4 L386.0 560.2 L386.5 557.9 L387.0 555.6 L387.5 553.2 L388.0 550.7 L388.5 548.2 L389.0 545.7 L389.5 543.2 L390.0 540.6 L390.5 538.0 L391.0 535.5 L391.5 532.9 L392.0 530.4 L392.5 527.9 L393.0 525.4 L393.5 523.0 L394.0 520.6 L394.5 518.3 L395.0 516.1 L395.5 513.9 L396.0 511.8 L396.5 509.8 L397.0 507.9 L397.5 506.1 L398.0 504.4 L398.5 502.8 L399.0 501.4 L399.5 500.0 L400.0 498.8 L400.5 497.8 L401.0 496.8 L401.5 496.0 L402.0 495.4 L402.5 494.9 L403.0 494.5 L403.5 494.3 L404.0 494.2 L404.5 494.3 L405.0 494.5 L405.5 494.8 L406.0 495.3 L406.5 495.9 L407.0 496.6 L407.5 497.5 L408.0 498.5 L408.5 499.6 L409.0 500.8 L409.5 502.2 L410.0 503.7 L410.5 505.2 L411.0 506.9 L411.5 508.7 L412.0 510.5 L412.5 512.5 L413.0 514.5 L413.5 516.6 L414.0 518.7 L414.5 520.9 L415.0 523.2 L415.5 525.5 L416.0 527.8 L416.5 530.2 L417.0 532.6 L417.5 535.0 L418.0 537.4 L418.5 539.8 L419.0 542.3 L419.5 544.6 L420.0 547.0 L420.5 549.3 L421.0 551.6 L421.5 553.9 L422.0 556.1 L422.5 558.2 L423.0 560.2 L423.5 562.2 L424.0 564.1 L424.5 566.0 L425.0 567.7 L425.5 569.3 L426.0 570.8 L426.5 572.3 L427.0 573.6 L427.5 574.8 L428.0 575.8 L428.5 576.8 L429.0 577.6 L429.5 578.3 L430.0 578.8 L430.5 579.2 L431.0 579.5 L431.5 579.7 L432.0 579.7 L432.5 579.6 L433.0 579.4 L433.5 579.1 L434.0 578.8 L434.5 578.3 L435.0 577.8 L435.5 577.1 L436.0 576.4 L436.5 575.5 L437.0 574.6 L437.5 573.6 L438.0 572.6 L438.5 571.4 L439.0 570.2 L439.5 568.9 L440.0 567.5 L440.5 566.1 L441.0 564.6 L441.5 563.0 L442.0 561.4 L442.5 559.7 L443.0 558.0 L443.5 556.2 L444.0 554.4 L444.5 552.6 L445.0 550.7 L445.5 548.8 L446.0 546.9 L446.5 545.0 L447.0 543.0 L447.5 541.1 L448.0 539.1 L448.5 537.1 L449.0 535.2 L449.5 533.3 L450.0 531.3 L450.5 529.4 L451.0 527.5 L451.5 525.7 L452.0 523.8 L452.5 522.1 L453.0 520.3 L453.5 518.6 L454.0 517.0 L454.5 515.4 L455.0 513.8 L455.5 512.3 L456.0 510.9 L456.5 509.6 L457.0 508.3 L457.5 507.1 L458.0 506.0 L458.5 505.0 L459.0 504.0 L459.5 503.1 L460.0 502.3 L460.5 501.6 L461.0 501.0 L461.5 500.5 L462.0 500.1 L462.5 499.7 L463.0 499.5 L463.5 499.3 L464.0 499.3 L464.5 499.4 L465.0 499.6 L465.5 499.9 L466.0 500.3 L466.5 500.9 L467.0 501.6 L467.5 502.4 L468.0 503.3 L468.5 504.4 L469.0 505.6 L469.5 506.8 L470.0 508.2 L470.5 509.7 L471.0 511.3 L471.5 513.0 L472.0 514.7 L472.5 516.6 L473.0 518.5 L473.5 520.5 L474.0 522.6 L474.5 524.7 L475.0 526.8 L475.5 529.1 L476.0 531.3 L476.5 533.6 L477.0 535.9 L477.5 538.3 L478.0 540.6 L478.5 543.0 L479.0 545.3 L479.5 547.7 L480.0 550.0 L480.5 552.3 L481.0 554.6 L481.5 556.8 L482.0 559.0 L482.5 561.2 L483.0 563.3 L483.5 565.3 L484.0 567.3 L484.5 569.2 L485.0 571.0 L485.5 572.7 L486.0 574.4 L486.5 575.9 L487.0 577.3 L487.5 578.7 L488.0 579.9 L488.5 581.0 L489.0 582.0 L489.5 582.9 L490.0 583.7 L490.5 584.3 L491.0 584.9 L491.5 585.3 L492.0 585.5 L492.5 585.7 L493.0 585.7 L493.5 585.5 L494.0 585.3 L494.5 584.8 L495.0 584.2 L495.5 583.5 L496.0 582.6 L496.5 581.5 L497.0 580.3 L497.5 579.0 L498.0 577.5 L498.5 576.0 L499.0 574.3 L499.5 572.4 L500.0 570.5 L500.5 568.5 L501.0 566.3 L501.5 564.1 L502.0 561.8 L502.5 559.4 L503.0 556.9 L503.5 554.4 L504.0 551.8 L504.5 549.2 L505.0 546.5 L505.5 543.9 L506.0 541.2 L506.5 538.5 L507.0 535.7 L507.5 533.0 L508.0 530.4 L508.5 527.7 L509.0 525.1 L509.5 522.5 L510.0 520.0 L510.5 517.5 L511.0 515.1 L511.5 512.8 L512.0 510.6 L512.5 508.4 L513.0 506.4 L513.5 504.5 L514.0 502.6 L514.5 500.9 L515.0 499.4 L515.5 497.9 L516.0 496.6 L516.5 495.4 L517.0 494.3 L517.5 493.4 L518.0 492.7 L518.5 492.1 L519.0 491.6 L519.5 491.4 L520.0 491.2 L520.5 491.2 L521.0 491.4 L521.5 491.6 L522.0 492.1 L522.5 492.6 L523.0 493.3 L523.5 494.1 L524.0 495.0 L524.5 496.0 L525.0 497.2 L525.5 498.5 L526.0 499.9 L526.5 501.4 L527.0 503.0 L527.5 504.7 L528.0 506.5 L528.5 508.3 L529.0 510.3 L529.5 512.3 L530.0 514.5 L530.5 516.6 L531.0 518.9 L531.5 521.1 L532.0 523.5 L532.5 525.8 L533.0 528.2 L533.5 530.6 L534.0 533.1 L534.5 535.5 L535.0 538.0 L535.5 540.4 L536.0 542.8 L536.5 545.2 L537.0 547.6 L537.5 549.9 L538.0 552.2 L538.5 554.5 L539.0 556.7 L539.5 558.8 L540.0 560.9 L540.5 562.9 L541.0 564.8 L541.5 566.6 L542.0 568.4 L542.5 570.0 L543.0 571.5 L543.5 573.0 L544.0 574.3 L544.5 575.5 L545.0 576.6 L545.5 577.6 L546.0 578.4 L546.5 579.1 L547.0 579.7 L547.5 580.2 L548.0 580.5 L548.5 580.7 L549.0 580.8 L549.5 580.7 L550.0 580.6 L550.5 580.3 L551.0 579.9 L551.5 579.4 L552.0 578.7 L552.5 578.0 L553.0 577.2 L553.5 576.2 L554.0 575.2 L554.5 574.0 L555.0 572.8 L555.5 571.4 L556.0 570.0 L556.5 568.5 L557.0 566.9 L557.5 565.2 L558.0 563.5 L558.5 561.7 L559.0 559.8 L559.5 557.8 L560.0 555.9 L560.5 553.8 L561.0 551.7 L561.5 549.6 L562.0 547.5 L562.5 545.3 L563.0 543.1 L563.5 540.9 L564.0 538.7 L564.5 536.5 L565.0 534.3 L565.5 532.1 L566.0 529.9 L566.5 527.7 L567.0 525.6 L567.5 523.5 L568.0 521.5 L568.5 519.4 L569.0 517.5 L569.5 515.6 L570.0 513.7 L570.5 512.0 L571.0 510.3 L571.5 508.6 L572.0 507.1 L572.5 505.6 L573.0 504.2 L573.5 503.0 L574.0 501.8 L574.5 500.7 L575.0 499.7 L575.5 498.8 L576.0 498.0 L576.5 497.4 L577.0 496.8 L577.5 496.4 L578.0 496.0 L578.5 495.8 L579.0 495.7 L579.5 495.7 L580.0 495.9 L580.5 496.2 L581.0 496.6 L581.5 497.2 L582.0 497.9 L582.5 498.7 L583.0 499.7 L583.5 500.8 L584.0 502.1 L584.5 503.4 L585.0 504.9 L585.5 506.5 L586.0 508.2 L586.5 510.0 L587.0 511.9 L587.5 513.9 L588.0 515.9 L588.5 518.1 L589.0 520.3 L589.5 522.6 L590.0 525.0 L590.5 527.4 L591.0 529.8 L591.5 532.3 L592.0 534.8 L592.5 537.3 L593.0 539.9 L593.5 542.4 L594.0 545.0 L594.5 547.5 L595.0 550.0 L595.5 552.5 L596.0 555.0 L596.5 557.4 L597.0 559.8 L597.5 562.1 L598.0 564.3 L598.5 566.5 L599.0 568.6 L599.5 570.6 L600.0 572.6 L600.5 574.4 L601.0 576.1 L601.5 577.8 L602.0 579.3 L602.5 580.7 L603.0 582.0 L603.5 583.1 L604.0 584.2 L604.5 585.1 L605.0 585.8 L605.5 586.5 L606.0 587.0 L606.5 587.3 L607.0 587.5 L607.5 587.6 L608.0 587.5 L608.5 587.3 L609.0 586.9 L609.5 586.4 L610.0 585.7 L610.5 584.9 L611.0 583.9 L611.5 582.8 L612.0 581.6 L612.5 580.2 L613.0 578.7 L613.5 577.1 L614.0 575.4 L614.5 573.5 L615.0 571.6 L615.5 569.5 L616.0 567.3 L616.5 565.1 L617.0 562.8 L617.5 560.4 L618.0 557.9 L618.5 555.4 L619.0 552.9 L619.5 550.3 L620.0 547.6 L620.5 544.9 L621.0 542.3 L621.5 539.6 L622.0 536.9 L622.5 534.2 L623.0 531.6 L623.5 528.9 L624.0 526.3 L624.5 523.8 L625.0 521.3 L625.5 518.8 L626.0 516.4 L626.5 514.1 L627.0 511.9 L627.5 509.8 L628.0 507.7 L628.5 505.8 L629.0 504.0 L629.5 502.3 L630.0 500.7 L630.5 499.2 L631.0 497.8 L631.5 496.6 L632.0 495.6 L632.5 494.6 L633.0 493.8 L633.5 493.2 L634.0 492.7 L634.5 492.3 L635.0 492.1 L635.5 492.1 L636.0 492.2 L636.5 492.4 L637.0 492.8 L637.5 493.3 L638.0 493.9 L638.5 494.6 L639.0 495.5 L639.5 496.5 L640.0 497.6 L640.5 498.8 L641.0 500.2 L641.5 501.6 L642.0 503.2 L642.5 504.8 L643.0 506.6 L643.5 508.4 L644.0 510.3 L644.5 512.3 L645.0 514.4 L645.5 516.5 L646.0 518.8 L646.5 521.0 L647.0 523.3 L647.5 525.7 L648.0 528.1 L648.5 530.5 L649.0 532.9 L649.5 535.3 L650.0 537.8 L650.5 540.2 L651.0 542.7 L651.5 545.1 L652.0 547.5 L652.5 549.9 L653.0 552.2 L653.5 554.5 L654.0 556.8 L654.5 559.0 L655.0 561.1 L655.5 563.2 L656.0 565.2 L656.5 567.1 L657.0 568.9 L657.5 570.6 L658.0 572.3 L658.5 573.8 L659.0 575.2 L659.5 576.5 L660.0 577.7 L660.5 578.8 L661.0 579.8 L661.5 580.6 L662.0 581.4 L662.5 581.9" fill="none" stroke="#800080" stroke-width="1.05" shape-rendering="geometricPrecision" stroke-linejoin="round"/><path d="M81.5 539.3 L82.0 539.3 L82.5 539.3 L83.0 539.3 L83.5 539.4 L84.0 539.4 L84.5 539.4 L85.0 539.5 L85.5 539.5 L86.0 539.6 L86.5 539.6 L87.0 539.7 L87.5 539.8 L88.0 539.9 L88.5 540.1 L89.0 540.2 L89.5 540.5 L90.0 540.7 L90.5 541.0 L91.0 541.3 L91.5 541.6 L92.0 541.9 L92.5 542.2 L93.0 542.6 L93.5 543.0 L94.0 543.4 L94.5 543.8 L95.0 544.3 L95.5 544.9 L96.0 545.7 L96.5 546.6 L97.0 547.6 L97.5 548.6 L98.0 549.7 L98.5 550.8 L99.0 552.0 L99.5 553.1 L100.0 554.2 L100.5 555.2 L101.0 556.1 L101.5 557.0 L102.0 558.0 L102.5 559.0 L103.0 560.1 L103.5 561.2 L104.0 562.2 L104.5 563.3 L105.0 564.3 L105.5 565.2 L106.0 566.1 L106.5 566.8 L107.0 567.4 L107.5 567.9 L108.0 568.2 L108.5 568.3 L109.0 568.2 L109.5 567.9 L110.0 567.5 L110.5 566.9 L111.0 566.2 L111.5 565.4 L112.0 564.6 L112.5 563.7 L113.0 562.8 L113.5 562.0 L114.0 561.1 L114.5 560.3 L115.0 559.4 L115.5 558.5 L116.0 557.5 L116.5 556.5 L117.0 555.5 L117.5 554.4 L118.0 553.2 L118.5 552.1 L119.0 550.9 L119.5 549.6 L120.0 548.2 L120.5 546.7 L121.0 545.2 L121.5 543.7 L122.0 542.1 L122.5 540.5 L123.0 539.0 L123.5 537.4 L124.0 535.8 L124.5 534.2 L125.0 532.4 L125.5 530.6 L126.0 528.7 L126.5 526.7 L127.0 524.7 L127.5 522.6 L128.0 520.5 L128.5 518.4 L129.0 516.2 L129.5 514.1 L130.0 511.9 L130.5 509.8 L131.0 507.6 L131.5 505.5 L132.0 503.5 L132.5 501.5 L133.0 499.5 L133.5 497.6 L134.0 495.8 L134.5 494.1 L135.0 492.5 L135.5 491.0 L136.0 489.5 L136.5 488.2 L137.0 487.1 L137.5 486.1 L138.0 485.2 L138.5 484.5 L139.0 484.0 L139.5 483.6 L140.0 483.4 L140.5 483.4 L141.0 483.6 L141.5 484.0 L142.0 484.5 L142.5 485.2 L143.0 486.1 L143.5 487.1 L144.0 488.3 L144.5 489.6 L145.0 491.1 L145.5 492.7 L146.0 494.5 L146.5 496.5 L147.0 498.5 L147.5 500.7 L148.0 503.0 L148.5 505.5 L149.0 508.0 L149.5 510.7 L150.0 513.4 L150.5 516.2 L151.0 519.2 L151.5 522.2 L152.0 525.2 L152.5 528.3 L153.0 531.5 L153.5 534.7 L154.0 537.9 L154.5 541.2 L155.0 544.4 L155.5 547.7 L156.0 550.9 L156.5 554.2 L157.0 557.4 L157.5 560.6 L158.0 563.8 L158.5 566.9 L159.0 569.9 L159.5 572.9 L160.0 575.9 L160.5 578.7 L161.0 581.4 L161.5 584.1 L162.0 586.6 L162.5 589.1 L163.0 591.4 L163.5 593.6 L164.0 595.6 L164.5 597.6 L165.0 599.4 L165.5 601.0 L166.0 602.5 L166.5 603.8 L167.0 605.0 L167.5 606.0 L168.0 606.9 L168.5 607.6 L169.0 608.1 L169.5 608.5 L170.0 608.7 L170.5 608.7 L171.0 608.5 L171.5 608.1 L172.0 607.4 L172.5 606.5 L173.0 605.5 L173.5 604.2 L174.0 602.7 L174.5 600.9 L175.0 599.0 L175.5 596.9 L176.0 594.6 L176.5 592.1 L177.0 589.4 L177.5 586.6 L178.0 583.6 L178.5 580.4 L179.0 577.1 L179.5 573.6 L180.0 570.1 L180.5 566.3 L181.0 562.5 L181.5 558.6 L182.0 554.6 L182.5 550.5 L183.0 546.4 L183.5 542.1 L184.0 537.9 L184.5 533.6 L185.0 529.3 L185.5 524.9 L186.0 520.6 L186.5 516.3 L187.0 512.0 L187.5 507.7 L188.0 503.5 L188.5 499.3 L189.0 495.2 L189.5 491.2 L190.0 487.2 L190.5 483.4 L191.0 479.7 L191.5 476.1 L192.0 472.6 L192.5 469.2 L193.0 466.0 L193.5 463.0 L194.0 460.1 L194.5 457.4 L195.0 454.9 L195.5 452.5 L196.0 450.4 L196.5 448.4 L197.0 446.7 L197.5 445.1 L198.0 443.8 L198.5 442.7 L199.0 441.7 L199.5 441.1 L200.0 440.6 L200.5 440.3 L201.0 440.3 L201.5 440.6 L202.0 441.2 L202.5 442.1 L203.0 443.4 L203.5 444.9 L204.0 446.8 L204.5 449.0 L205.0 451.4 L205.5 454.1 L206.0 457.2 L206.5 460.4 L207.0 464.0 L207.5 467.8 L208.0 471.8 L208.5 476.1 L209.0 480.5 L209.5 485.2 L210.0 490.1 L210.5 495.1 L211.0 500.3 L211.5 505.6 L212.0 511.0 L212.5 516.6 L213.0 522.2 L213.5 527.9 L214.0 533.7 L214.5 539.5 L215.0 545.3 L215.5 551.2 L216.0 557.0 L216.5 562.8 L217.0 568.5 L217.5 574.2 L218.0 579.8 L218.5 585.2 L219.0 590.6 L219.5 595.9 L220.0 600.9 L220.5 605.9 L221.0 610.6 L221.5 615.2 L222.0 619.5 L222.5 623.6 L223.0 627.5 L223.5 631.2 L224.0 634.6 L224.5 637.7 L225.0 640.5 L225.5 643.1 L226.0 645.4 L226.5 647.4 L227.0 649.0 L227.5 650.4 L228.0 651.4 L228.5 652.2 L229.0 652.6 L229.5 652.7 L230.0 652.4 L230.5 651.8 L231.0 650.8 L231.5 649.4 L232.0 647.7 L232.5 645.6 L233.0 643.2 L233.5 640.4 L234.0 637.3 L234.5 633.8 L235.0 630.1 L235.5 626.0 L236.0 621.6 L236.5 617.0 L237.0 612.1 L237.5 607.0 L238.0 601.6 L238.5 596.1 L239.0 590.3 L239.5 584.3 L240.0 578.2 L240.5 572.0 L241.0 565.6 L241.5 559.1 L242.0 552.6 L242.5 546.0 L243.0 539.3 L243.5 532.6 L244.0 526.0 L244.5 519.3 L245.0 512.7 L245.5 506.2 L246.0 499.7 L246.5 493.4 L247.0 487.1 L247.5 481.1 L248.0 475.1 L248.5 469.4 L249.0 463.9 L249.5 458.6 L250.0 453.5 L250.5 448.6 L251.0 444.1 L251.5 439.8 L252.0 435.8 L252.5 432.1 L253.0 428.7 L253.5 425.6 L254.0 422.9 L254.5 420.6 L255.0 418.5 L255.5 416.9 L256.0 415.6 L256.5 414.6 L257.0 414.1 L257.5 413.9 L258.0 414.1 L258.5 414.6 L259.0 415.4 L259.5 416.6 L260.0 418.2 L260.5 420.0 L261.0 422.2 L261.5 424.7 L262.0 427.6 L262.5 430.7 L263.0 434.1 L263.5 437.8 L264.0 441.8 L264.5 446.1 L265.0 450.6 L265.5 455.4 L266.0 460.4 L266.5 465.6 L267.0 471.1 L267.5 476.7 L268.0 482.5 L268.5 488.4 L269.0 494.5 L269.5 500.7 L270.0 507.1 L270.5 513.5 L271.0 520.0 L271.5 526.6 L272.0 533.2 L272.5 539.8 L273.0 546.5 L273.5 553.1 L274.0 559.7 L274.5 566.3 L275.0 572.8 L275.5 579.2 L276.0 585.5 L276.5 591.7 L277.0 597.8 L277.5 603.7 L278.0 609.5 L278.5 615.0 L279.0 620.4 L279.5 625.6 L280.0 630.6 L280.5 635.3 L281.0 639.8 L281.5 644.0 L282.0 647.9 L282.5 651.6 L283.0 655.0 L283.5 658.0 L284.0 660.8 L284.5 663.2 L285.0 665.4 L285.5 667.2 L286.0 668.6 L286.5 669.8 L287.0 670.5 L287.5 671.0 L288.0 671.1 L288.5 670.8 L289.0 670.1 L289.5 669.0 L290.0 667.5 L290.5 665.6 L291.0 663.4 L291.5 660.7 L292.0 657.7 L292.5 654.3 L293.0 650.5 L293.5 646.4 L294.0 642.0 L294.5 637.2 L295.0 632.1 L295.5 626.8 L296.0 621.2 L296.5 615.3 L297.0 609.1 L297.5 602.8 L298.0 596.2 L298.5 589.5 L299.0 582.6 L299.5 575.5 L300.0 568.3 L300.5 561.1 L301.0 553.7 L301.5 546.3 L302.0 538.8 L302.5 531.4 L303.0 523.9 L303.5 516.5 L304.0 509.1 L304.5 501.8 L305.0 494.5 L305.5 487.4 L306.0 480.5 L306.5 473.7 L307.0 467.0 L307.5 460.6 L308.0 454.4 L308.5 448.4 L309.0 442.6 L309.5 437.2 L310.0 432.0 L310.5 427.1 L311.0 422.5 L311.5 418.3 L312.0 414.4 L312.5 410.8 L313.0 407.7 L313.5 404.9 L314.0 402.4 L314.5 400.4 L315.0 398.7 L315.5 397.5 L316.0 396.6 L316.5 396.2 L317.0 396.1 L317.5 396.5 L318.0 397.4 L318.5 398.6 L319.0 400.3 L319.5 402.5 L320.0 405.0 L320.5 408.0 L321.0 411.3 L321.5 415.1 L322.0 419.2 L322.5 423.7 L323.0 428.6 L323.5 433.8 L324.0 439.3 L324.5 445.2 L325.0 451.3 L325.5 457.7 L326.0 464.4 L326.5 471.3 L327.0 478.5 L327.5 485.8 L328.0 493.3 L328.5 501.0 L329.0 508.8 L329.5 516.7 L330.0 524.7 L330.5 532.7 L331.0 540.8 L331.5 548.9 L332.0 557.0 L332.5 565.0 L333.0 573.0 L333.5 581.0 L334.0 588.8 L334.5 596.5 L335.0 604.0 L335.5 611.4 L336.0 618.5 L336.5 625.5 L337.0 632.2 L337.5 638.7 L338.0 644.9 L338.5 650.8 L339.0 656.4 L339.5 661.7 L340.0 666.6 L340.5 671.2 L341.0 675.4 L341.5 679.3 L342.0 682.7 L342.5 685.7 L343.0 688.4 L343.5 690.6 L344.0 692.4 L344.5 693.7 L345.0 694.6 L345.5 695.1 L346.0 695.2 L346.5 694.7 L347.0 693.9 L347.5 692.5 L348.0 690.7 L348.5 688.5 L349.0 685.8 L349.5 682.6 L350.0 679.1 L350.5 675.1 L351.0 670.7 L351.5 665.9 L352.0 660.7 L352.5 655.2 L353.0 649.4 L353.5 643.2 L354.0 636.7 L354.5 629.9 L355.0 622.8 L355.5 615.5 L356.0 607.9 L356.5 600.2 L357.0 592.3 L357.5 584.2 L358.0 576.0 L358.5 567.6 L359.0 559.2 L359.5 550.8 L360.0 542.3 L360.5 533.7 L361.0 525.3 L361.5 516.8 L362.0 508.4 L362.5 500.1 L363.0 492.0 L363.5 483.9 L364.0 476.1 L364.5 468.4 L365.0 461.0 L365.5 453.8 L366.0 446.8 L366.5 440.1 L367.0 433.7 L367.5 427.7 L368.0 421.9 L368.5 416.5 L369.0 411.5 L369.5 406.9 L370.0 402.7 L370.5 398.9 L371.0 395.5 L371.5 392.5 L372.0 390.0 L372.5 387.9 L373.0 386.3 L373.5 385.1 L374.0 384.4 L374.5 384.2 L375.0 384.4 L375.5 385.1 L376.0 386.2 L376.5 387.8 L377.0 389.8 L377.5 392.2 L378.0 395.1 L378.5 398.3 L379.0 402.0 L379.5 406.1 L380.0 410.6 L380.5 415.4 L381.0 420.6 L381.5 426.1 L382.0 432.0 L382.5 438.2 L383.0 444.7 L383.5 451.4 L384.0 458.4 L384.5 465.7 L385.0 473.2 L385.5 480.8 L386.0 488.7 L386.5 496.7 L387.0 504.8 L387.5 513.0 L388.0 521.3 L388.5 529.7 L389.0 538.1 L389.5 546.5 L390.0 554.9 L390.5 563.3 L391.0 571.6 L391.5 579.8 L392.0 587.9 L392.5 595.9 L393.0 603.8 L393.5 611.4 L394.0 618.9 L394.5 626.2 L395.0 633.2 L395.5 639.9 L396.0 646.4 L396.5 652.6 L397.0 658.5 L397.5 664.0 L398.0 669.2 L398.5 674.0 L399.0 678.5 L399.5 682.6 L400.0 686.3 L400.5 689.5 L401.0 692.4 L401.5 694.8 L402.0 696.8 L402.5 698.4 L403.0 699.5 L403.5 700.2 L404.0 700.4 L404.5 700.2 L405.0 699.5 L405.5 698.3 L406.0 696.7 L406.5 694.6 L407.0 692.0 L407.5 689.0 L408.0 685.6 L408.5 681.8 L409.0 677.5 L409.5 672.8 L410.0 667.8 L410.5 662.3 L411.0 656.5 L411.5 650.4 L412.0 643.9 L412.5 637.1 L413.0 630.1 L413.5 622.7 L414.0 615.2 L414.5 607.4 L415.0 599.3 L415.5 591.2 L416.0 582.8 L416.5 574.3 L417.0 565.7 L417.5 557.1 L418.0 548.3 L418.5 539.6 L419.0 530.8 L419.5 522.0 L420.0 513.3 L420.5 504.6 L421.0 496.1 L421.5 487.6 L422.0 479.3 L422.5 471.1 L423.0 463.2 L423.5 455.4 L424.0 447.9 L424.5 440.6 L425.0 433.6 L425.5 426.9 L426.0 420.5 L426.5 414.4 L427.0 408.7 L427.5 403.3 L428.0 398.3 L428.5 393.7 L429.0 389.5 L429.5 385.8 L430.0 382.4 L430.5 379.5 L431.0 377.1 L431.5 375.1 L432.0 373.5 L432.5 372.5 L433.0 371.9 L433.5 371.7 L434.0 372.1 L434.5 373.0 L435.0 374.3 L435.5 376.2 L436.0 378.7 L436.5 381.6 L437.0 385.0 L437.5 388.8 L438.0 393.2 L438.5 397.9 L439.0 403.2 L439.5 408.8 L440.0 414.9 L440.5 421.3 L441.0 428.1 L441.5 435.3 L442.0 442.7 L442.5 450.5 L443.0 458.5 L443.5 466.8 L444.0 475.4 L444.5 484.1 L445.0 493.0 L445.5 502.1 L446.0 511.2 L446.5 520.5 L447.0 529.8 L447.5 539.2 L448.0 548.5 L448.5 557.9 L449.0 567.2 L449.5 576.4 L450.0 585.5 L450.5 594.4 L451.0 603.3 L451.5 611.9 L452.0 620.3 L452.5 628.4 L453.0 636.3 L453.5 643.9 L454.0 651.2 L454.5 658.1 L455.0 664.7 L455.5 670.9 L456.0 676.7 L456.5 682.1 L457.0 687.1 L457.5 691.6 L458.0 695.7 L458.5 699.2 L459.0 702.3 L459.5 704.9 L460.0 707.1 L460.5 708.7 L461.0 709.7 L461.5 710.3 L462.0 710.4 L462.5 709.9 L463.0 709.0 L463.5 707.6 L464.0 705.7 L464.5 703.3 L465.0 700.5 L465.5 697.2 L466.0 693.4 L466.5 689.2 L467.0 684.6 L467.5 679.5 L468.0 674.1 L468.5 668.2 L469.0 662.0 L469.5 655.5 L470.0 648.6 L470.5 641.4 L471.0 633.9 L471.5 626.1 L472.0 618.1 L472.5 609.9 L473.0 601.4 L473.5 592.8 L474.0 584.0 L474.5 575.1 L475.0 566.1 L475.5 557.0 L476.0 547.9 L476.5 538.7 L477.0 529.5 L477.5 520.4 L478.0 511.3 L478.5 502.3 L479.0 493.4 L479.5 484.6 L480.0 476.0 L480.5 467.5 L481.0 459.3 L481.5 451.3 L482.0 443.5 L482.5 436.0 L483.0 428.8 L483.5 421.9 L484.0 415.4 L484.5 409.2 L485.0 403.3 L485.5 397.9 L486.0 392.8 L486.5 388.2 L487.0 384.0 L487.5 380.2 L488.0 376.9 L488.5 374.1 L489.0 371.7 L489.5 369.8 L490.0 368.4 L490.5 367.5 L491.0 367.0 L491.5 367.1 L492.0 367.6 L492.5 368.7 L493.0 370.2 L493.5 372.2 L494.0 374.7 L494.5 377.6 L495.0 381.0 L495.5 384.9 L496.0 389.2 L496.5 393.9 L497.0 399.1 L497.5 404.6 L498.0 410.6 L498.5 416.9 L499.0 423.5 L499.5 430.5 L500.0 437.8 L500.5 445.4 L501.0 453.3 L501.5 461.4 L502.0 469.7 L502.5 478.2 L503.0 486.9 L503.5 495.8 L504.0 504.8 L504.5 513.8 L505.0 523.0 L505.5 532.2 L506.0 541.4 L506.5 550.6 L507.0 559.8 L507.5 568.9 L508.0 577.9 L508.5 586.9 L509.0 595.7 L509.5 604.3 L510.0 612.8 L510.5 621.0 L511.0 629.0 L511.5 636.8 L512.0 644.2 L512.5 651.4 L513.0 658.3 L513.5 664.8 L514.0 670.9 L514.5 676.7 L515.0 682.1 L515.5 687.1 L516.0 691.7 L516.5 695.8 L517.0 699.5 L517.5 702.7 L518.0 705.5 L518.5 707.8 L519.0 709.6 L519.5 710.9 L520.0 711.7 L520.5 712.1 L521.0 711.9 L521.5 711.2 L522.0 710.0 L522.5 708.2 L523.0 705.9 L523.5 703.1 L524.0 699.8 L524.5 695.9 L525.0 691.6 L525.5 686.8 L526.0 681.5 L526.5 675.8 L527.0 669.7 L527.5 663.1 L528.0 656.2 L528.5 648.9 L529.0 641.3 L529.5 633.3 L530.0 625.0 L530.5 616.5 L531.0 607.7 L531.5 598.6 L532.0 589.4 L532.5 580.1 L533.0 570.6 L533.5 560.9 L534.0 551.2 L534.5 541.5 L535.0 531.7 L535.5 522.0 L536.0 512.3 L536.5 502.7 L537.0 493.1 L537.5 483.7 L538.0 474.5 L538.5 465.4 L539.0 456.6 L539.5 448.0 L540.0 439.7 L540.5 431.6 L541.0 423.9 L541.5 416.5 L542.0 409.5 L542.5 402.9 L543.0 396.7 L543.5 390.9 L544.0 385.5 L544.5 380.6 L545.0 376.2 L545.5 372.3 L546.0 368.8 L546.5 365.9 L547.0 363.5 L547.5 361.6 L548.0 360.3 L548.5 359.5 L549.0 359.2 L549.5 359.5 L550.0 360.3 L550.5 361.6 L551.0 363.4 L551.5 365.7 L552.0 368.6 L552.5 372.0 L553.0 375.8 L553.5 380.1 L554.0 384.9 L554.5 390.1 L555.0 395.8 L555.5 401.9 L556.0 408.4 L556.5 415.3 L557.0 422.5 L557.5 430.1 L558.0 438.0 L558.5 446.2 L559.0 454.7 L559.5 463.4 L560.0 472.3 L560.5 481.5 L561.0 490.8 L561.5 500.2 L562.0 509.7 L562.5 519.4 L563.0 529.1 L563.5 538.8 L564.0 548.5 L564.5 558.2 L565.0 567.9 L565.5 577.4 L566.0 586.8 L566.5 596.1 L567.0 605.3 L567.5 614.2 L568.0 622.9 L568.5 631.4 L569.0 639.6 L569.5 647.5 L570.0 655.1 L570.5 662.3 L571.0 669.2 L571.5 675.7 L572.0 681.8 L572.5 687.5 L573.0 692.7 L573.5 697.5 L574.0 701.8 L574.5 705.6 L575.0 709.0 L575.5 711.9 L576.0 714.2 L576.5 716.0 L577.0 717.3 L577.5 718.1 L578.0 718.4 L578.5 718.1 L579.0 717.3 L579.5 716.0 L580.0 714.2 L580.5 711.8 L581.0 708.9 L581.5 705.5 L582.0 701.7 L582.5 697.3 L583.0 692.5 L583.5 687.2 L584.0 681.5 L584.5 675.4 L585.0 668.8 L585.5 661.9 L586.0 654.6 L586.5 647.0 L587.0 639.0 L587.5 630.8 L588.0 622.3 L588.5 613.5 L589.0 604.6 L589.5 595.4 L590.0 586.1 L590.5 576.6 L591.0 567.0 L591.5 557.4 L592.0 547.6 L592.5 537.9 L593.0 528.2 L593.5 518.5 L594.0 508.8 L594.5 499.3 L595.0 489.9 L595.5 480.6 L596.0 471.5 L596.5 462.6 L597.0 454.0 L597.5 445.6 L598.0 437.4 L598.5 429.6 L599.0 422.1 L599.5 415.0 L600.0 408.2 L600.5 401.8 L601.0 395.9 L601.5 390.3 L602.0 385.2 L602.5 380.6 L603.0 376.4 L603.5 372.7 L604.0 369.6 L604.5 366.9 L605.0 364.7 L605.5 363.1 L606.0 362.0 L606.5 361.4 L607.0 361.3 L607.5 361.8 L608.0 362.8 L608.5 364.3 L609.0 366.3 L609.5 368.9 L610.0 371.9 L610.5 375.4 L611.0 379.4 L611.5 383.9 L612.0 388.8 L612.5 394.1 L613.0 399.9 L613.5 406.1 L614.0 412.7 L614.5 419.7 L615.0 427.0 L615.5 434.6 L616.0 442.6 L616.5 450.8 L617.0 459.3 L617.5 468.0 L618.0 477.0 L618.5 486.1 L619.0 495.4 L619.5 504.8 L620.0 514.3 L620.5 523.9 L621.0 533.5 L621.5 543.2 L622.0 552.9 L622.5 562.5 L623.0 572.0 L623.5 581.5 L624.0 590.8 L624.5 600.0 L625.0 609.0 L625.5 617.8 L626.0 626.4 L626.5 634.8 L627.0 642.8 L627.5 650.6 L628.0 658.1 L628.5 665.2 L629.0 671.9 L629.5 678.2 L630.0 684.2 L630.5 689.7 L631.0 694.8 L631.5 699.5 L632.0 703.7 L632.5 707.4 L633.0 710.6 L633.5 713.3 L634.0 715.5 L634.5 717.3 L635.0 718.5 L635.5 719.1 L636.0 719.3 L636.5 718.9 L637.0 718.0 L637.5 716.6 L638.0 714.7 L638.5 712.2 L639.0 709.3 L639.5 705.9 L640.0 701.9 L640.5 697.5 L641.0 692.7 L641.5 687.4 L642.0 681.6 L642.5 675.5 L643.0 668.9 L643.5 662.0 L644.0 654.7 L644.5 647.1 L645.0 639.1 L645.5 630.9 L646.0 622.4 L646.5 613.7 L647.0 604.7 L647.5 595.6 L648.0 586.2 L648.5 576.8 L649.0 567.2 L649.5 557.6 L650.0 547.9 L650.5 538.2 L651.0 528.5 L651.5 518.8 L652.0 509.1 L652.5 499.6 L653.0 490.2 L653.5 480.9 L654.0 471.8 L654.5 462.9 L655.0 454.2 L655.5 445.7 L656.0 437.6 L656.5 429.7 L657.0 422.1 L657.5 414.9 L658.0 408.0 L658.5 401.6 L659.0 395.5 L659.5 389.8 L660.0 384.6 L660.5 379.8 L661.0 375.5 L661.5 371.7 L662.0 368.4 L662.5 365.5" fill="none" stroke="#808080" stroke-width="1.05" shape-rendering="geometricPrecision" stroke-linejoin="round"/><path d="M81.5 539.3 L82.0 539.3 L82.5 539.3 L83.0 539.3 L83.5 539.3 L84.0 539.3 L84.5 539.3 L85.0 539.4 L85.5 539.4 L86.0 539.4 L86.5 539.4 L87.0 539.5 L87.5 539.5 L88.0 539.5 L88.5 539.5 L89.0 539.6 L89.5 539.6 L90.0 539.7 L90.5 539.8 L91.0 539.8 L91.5 539.9 L92.0 540.0 L92.5 540.1 L93.0 540.2 L93.5 540.4 L94.0 540.5 L94.5 540.6 L95.0 540.8 L95.5 541.0 L96.0 541.1 L96.5 541.3 L97.0 541.5 L97.5 541.7 L98.0 541.9 L98.5 542.1 L99.0 542.5 L99.5 542.9 L100.0 543.4 L100.5 544.0 L101.0 544.6 L101.5 545.3 L102.0 546.0 L102.5 546.7 L103.0 547.5 L103.5 548.2 L104.0 548.9 L104.5 549.6 L105.0 550.4 L105.5 551.2 L106.0 552.1 L106.5 553.0 L107.0 553.9 L107.5 554.7 L108.0 555.5 L108.5 556.3 L109.0 557.0 L109.5 557.6 L110.0 558.3 L110.5 559.0 L111.0 559.6 L111.5 560.2 L112.0 560.7 L112.5 561.2 L113.0 561.5 L113.5 561.6 L114.0 561.6 L114.5 561.4 L115.0 561.1 L115.5 560.7 L116.0 560.2 L116.5 559.6 L117.0 558.9 L117.5 558.2 L118.0 557.5 L118.5 556.8 L119.0 556.0 L119.5 555.0 L120.0 553.9 L120.5 552.6 L121.0 551.1 L121.5 549.6 L122.0 548.1 L122.5 546.5 L123.0 545.0 L123.5 543.5 L124.0 542.0 L124.5 540.5 L125.0 538.8 L125.5 537.1 L126.0 535.3 L126.5 533.4 L127.0 531.5 L127.5 529.5 L128.0 527.5 L128.5 525.5 L129.0 523.5 L129.5 521.4 L130.0 519.4 L130.5 517.4 L131.0 515.5 L131.5 513.6 L132.0 511.7 L132.5 509.9 L133.0 508.2 L133.5 506.5 L134.0 505.0 L134.5 503.5 L135.0 502.2 L135.5 501.0 L136.0 499.9 L136.5 499.0 L137.0 498.3 L137.5 497.7 L138.0 497.3 L138.5 497.0 L139.0 497.0 L139.5 497.1 L140.0 497.3 L140.5 497.7 L141.0 498.1 L141.5 498.6 L142.0 499.3 L142.5 500.1 L143.0 500.9 L143.5 501.9 L144.0 503.0 L144.5 504.2 L145.0 505.5 L145.5 506.8 L146.0 508.3 L146.5 509.8 L147.0 511.4 L147.5 513.2 L148.0 514.9 L148.5 516.8 L149.0 518.7 L149.5 520.7 L150.0 522.7 L150.5 524.8 L151.0 526.9 L151.5 529.1 L152.0 531.3 L152.5 533.6 L153.0 535.8 L153.5 538.1 L154.0 540.4 L154.5 542.7 L155.0 545.0 L155.5 547.4 L156.0 549.7 L156.5 552.0 L157.0 554.2 L157.5 556.5 L158.0 558.7 L158.5 560.9 L159.0 563.1 L159.5 565.2 L160.0 567.2 L160.5 569.2 L161.0 571.2 L161.5 573.0 L162.0 574.8 L162.5 576.6 L163.0 578.2 L163.5 579.8 L164.0 581.3 L164.5 582.7 L165.0 584.0 L165.5 585.2 L166.0 586.4 L166.5 587.4 L167.0 588.3 L167.5 589.1 L168.0 589.8 L168.5 590.4 L169.0 590.9 L169.5 591.3 L170.0 591.5 L170.5 591.7 L171.0 591.7 L171.5 591.6 L172.0 591.3 L172.5 590.9 L173.0 590.3 L173.5 589.5 L174.0 588.6 L174.5 587.5 L175.0 586.2 L175.5 584.9 L176.0 583.3 L176.5 581.7 L177.0 579.9 L177.5 577.9 L178.0 575.8 L178.5 573.6 L179.0 571.3 L179.5 568.9 L180.0 566.4 L180.5 563.8 L181.0 561.1 L181.5 558.3 L182.0 555.4 L182.5 552.5 L183.0 549.5 L183.5 546.4 L184.0 543.3 L184.5 540.2 L185.0 537.0 L185.5 533.9 L186.0 530.7 L186.5 527.5 L187.0 524.3 L187.5 521.2 L188.0 518.0 L188.5 514.9 L189.0 511.8 L189.5 508.8 L190.0 505.9 L190.5 503.0 L191.0 500.1 L191.5 497.4 L192.0 494.7 L192.5 492.2 L193.0 489.7 L193.5 487.4 L194.0 485.1 L194.5 483.0 L195.0 481.0 L195.5 479.1 L196.0 477.4 L196.5 475.8 L197.0 474.4 L197.5 473.1 L198.0 472.0 L198.5 471.0 L199.0 470.1 L199.5 469.5 L200.0 469.0 L200.5 468.6 L201.0 468.4 L201.5 468.4 L202.0 468.6 L202.5 469.1 L203.0 469.8 L203.5 470.8 L204.0 472.0 L204.5 473.5 L205.0 475.2 L205.5 477.1 L206.0 479.2 L206.5 481.6 L207.0 484.2 L207.5 486.9 L208.0 489.9 L208.5 493.0 L209.0 496.3 L209.5 499.8 L210.0 503.5 L210.5 507.2 L211.0 511.1 L211.5 515.2 L212.0 519.3 L212.5 523.5 L213.0 527.8 L213.5 532.2 L214.0 536.6 L214.5 541.0 L215.0 545.5 L215.5 550.0 L216.0 554.5 L216.5 558.9 L217.0 563.4 L217.5 567.8 L218.0 572.1 L218.5 576.3 L219.0 580.5 L219.5 584.6 L220.0 588.5 L220.5 592.3 L221.0 596.0 L221.5 599.6 L222.0 603.0 L222.5 606.2 L223.0 609.2 L223.5 612.1 L224.0 614.7 L224.5 617.2 L225.0 619.4 L225.5 621.4 L226.0 623.2 L226.5 624.7 L227.0 626.0 L227.5 627.1 L228.0 627.9 L228.5 628.5 L229.0 628.8 L229.5 628.9 L230.0 628.7 L230.5 628.3 L231.0 627.6 L231.5 626.7 L232.0 625.5 L232.5 624.1 L233.0 622.5 L233.5 620.6 L234.0 618.5 L234.5 616.2 L235.0 613.7 L235.5 610.9 L236.0 608.0 L236.5 604.8 L237.0 601.5 L237.5 598.0 L238.0 594.3 L238.5 590.5 L239.0 586.6 L239.5 582.5 L240.0 578.3 L240.5 573.9 L241.0 569.5 L241.5 565.0 L242.0 560.4 L242.5 555.7 L243.0 551.0 L243.5 546.3 L244.0 541.5 L244.5 536.7 L245.0 532.0 L245.5 527.2 L246.0 522.5 L246.5 517.8 L247.0 513.2 L247.5 508.6 L248.0 504.1 L248.5 499.7 L249.0 495.4 L249.5 491.3 L250.0 487.2 L250.5 483.3 L251.0 479.6 L251.5 476.0 L252.0 472.5 L252.5 469.3 L253.0 466.2 L253.5 463.4 L254.0 460.7 L254.5 458.2 L255.0 456.0 L255.5 454.0 L256.0 452.2 L256.5 450.7 L257.0 449.4 L257.5 448.3 L258.0 447.5 L258.5 446.9 L259.0 446.6 L259.5 446.5 L260.0 446.7 L260.5 447.2 L261.0 448.0 L261.5 449.1 L262.0 450.5 L262.5 452.1 L263.0 454.1 L263.5 456.3 L264.0 458.7 L264.5 461.5 L265.0 464.5 L265.5 467.7 L266.0 471.1 L266.5 474.8 L267.0 478.7 L267.5 482.7 L268.0 487.0 L268.5 491.4 L269.0 496.0 L269.5 500.7 L270.0 505.5 L270.5 510.5 L271.0 515.5 L271.5 520.7 L272.0 525.9 L272.5 531.1 L273.0 536.4 L273.5 541.7 L274.0 547.0 L274.5 552.2 L275.0 557.5 L275.5 562.7 L276.0 567.8 L276.5 572.8 L277.0 577.7 L277.5 582.6 L278.0 587.2 L278.5 591.8 L279.0 596.2 L279.5 600.4 L280.0 604.4 L280.5 608.3 L281.0 611.9 L281.5 615.3 L282.0 618.5 L282.5 621.4 L283.0 624.1 L283.5 626.5 L284.0 628.6 L284.5 630.5 L285.0 632.1 L285.5 633.4 L286.0 634.5 L286.5 635.2 L287.0 635.7 L287.5 635.8 L288.0 635.7 L288.5 635.2 L289.0 634.5 L289.5 633.5 L290.0 632.2 L290.5 630.6 L291.0 628.8 L291.5 626.7 L292.0 624.3 L292.5 621.6 L293.0 618.7 L293.5 615.6 L294.0 612.2 L294.5 608.6 L295.0 604.8 L295.5 600.8 L296.0 596.6 L296.5 592.3 L297.0 587.7 L297.5 583.0 L298.0 578.1 L298.5 573.2 L299.0 568.1 L299.5 562.9 L300.0 557.6 L300.5 552.3 L301.0 546.9 L301.5 541.4 L302.0 535.9 L302.5 530.5 L303.0 525.0 L303.5 519.5 L304.0 514.1 L304.5 508.7 L305.0 503.4 L305.5 498.2 L306.0 493.0 L306.5 488.0 L307.0 483.1 L307.5 478.4 L308.0 473.7 L308.5 469.3 L309.0 465.0 L309.5 460.9 L310.0 457.0 L310.5 453.4 L311.0 449.9 L311.5 446.7 L312.0 443.7 L312.5 441.0 L313.0 438.5 L313.5 436.2 L314.0 434.3 L314.5 432.6 L315.0 431.2 L315.5 430.1 L316.0 429.2 L316.5 428.7 L317.0 428.4 L317.5 428.5 L318.0 428.8 L318.5 429.6 L319.0 430.6 L319.5 432.0 L320.0 433.7 L320.5 435.8 L321.0 438.2 L321.5 440.9 L322.0 443.9 L322.5 447.1 L323.0 450.7 L323.5 454.6 L324.0 458.7 L324.5 463.1 L325.0 467.7 L325.5 472.5 L326.0 477.6 L326.5 482.8 L327.0 488.2 L327.5 493.8 L328.0 499.5 L328.5 505.4 L329.0 511.3 L329.5 517.4 L330.0 523.5 L330.5 529.7 L331.0 536.0 L331.5 542.2 L332.0 548.4 L332.5 554.7 L333.0 560.9 L333.5 567.0 L334.0 573.1 L334.5 579.0 L335.0 584.9 L335.5 590.6 L336.0 596.2 L336.5 601.6 L337.0 606.8 L337.5 611.9 L338.0 616.7 L338.5 621.3 L339.0 625.7 L339.5 629.8 L340.0 633.7 L340.5 637.3 L341.0 640.5 L341.5 643.5 L342.0 646.2 L342.5 648.6 L343.0 650.7 L343.5 652.4 L344.0 653.8 L344.5 654.8 L345.0 655.6 L345.5 655.9 L346.0 656.0 L346.5 655.7 L347.0 655.0 L347.5 654.1 L348.0 652.8 L348.5 651.2 L349.0 649.2 L349.5 647.0 L350.0 644.4 L350.5 641.5 L351.0 638.4 L351.5 634.9 L352.0 631.2 L352.5 627.2 L353.0 623.0 L353.5 618.5 L354.0 613.8 L354.5 608.9 L355.0 603.8 L355.5 598.5 L356.0 593.0 L356.5 587.4 L357.0 581.6 L357.5 575.7 L358.0 569.7 L358.5 563.7 L359.0 557.5 L359.5 551.3 L360.0 545.1 L360.5 538.8 L361.0 532.5 L361.5 526.3 L362.0 520.1 L362.5 513.9 L363.0 507.9 L363.5 501.9 L364.0 496.0 L364.5 490.2 L365.0 484.6 L365.5 479.1 L366.0 473.8 L366.5 468.7 L367.0 463.8 L367.5 459.1 L368.0 454.6 L368.5 450.4 L369.0 446.4 L369.5 442.7 L370.0 439.2 L370.5 436.1 L371.0 433.2 L371.5 430.6 L372.0 428.4 L372.5 426.4 L373.0 424.8 L373.5 423.5 L374.0 422.6 L374.5 421.9 L375.0 421.6 L375.5 421.7 L376.0 422.0 L376.5 422.8 L377.0 423.9 L377.5 425.3 L378.0 427.1 L378.5 429.2 L379.0 431.6 L379.5 434.3 L380.0 437.4 L380.5 440.8 L381.0 444.4 L381.5 448.4 L382.0 452.6 L382.5 457.1 L383.0 461.8 L383.5 466.7 L384.0 471.9 L384.5 477.3 L385.0 482.8 L385.5 488.5 L386.0 494.4 L386.5 500.4 L387.0 506.5 L387.5 512.8 L388.0 519.1 L388.5 525.4 L389.0 531.8 L389.5 538.3 L390.0 544.7 L390.5 551.1 L391.0 557.5 L391.5 563.8 L392.0 570.1 L392.5 576.2 L393.0 582.3 L393.5 588.2 L394.0 594.0 L394.5 599.6 L395.0 605.1 L395.5 610.3 L396.0 615.4 L396.5 620.2 L397.0 624.8 L397.5 629.1 L398.0 633.1 L398.5 636.9 L399.0 640.4 L399.5 643.6 L400.0 646.4 L400.5 649.0 L401.0 651.2 L401.5 653.1 L402.0 654.7 L402.5 655.9 L403.0 656.8 L403.5 657.3 L404.0 657.5 L404.5 657.3 L405.0 656.8 L405.5 655.9 L406.0 654.6 L406.5 653.0 L407.0 651.0 L407.5 648.7 L408.0 646.0 L408.5 643.1 L409.0 639.8 L409.5 636.2 L410.0 632.2 L410.5 628.0 L411.0 623.6 L411.5 618.8 L412.0 613.8 L412.5 608.6 L413.0 603.2 L413.5 597.5 L414.0 591.7 L414.5 585.7 L415.0 579.5 L415.5 573.2 L416.0 566.8 L416.5 560.3 L417.0 553.8 L417.5 547.1 L418.0 540.5 L418.5 533.8 L419.0 527.1 L419.5 520.4 L420.0 513.8 L420.5 507.3 L421.0 500.8 L421.5 494.4 L422.0 488.1 L422.5 482.0 L423.0 476.0 L423.5 470.2 L424.0 464.6 L424.5 459.2 L425.0 454.1 L425.5 449.1 L426.0 444.4 L426.5 440.0 L427.0 435.9 L427.5 432.0 L428.0 428.4 L428.5 425.2 L429.0 422.3 L429.5 419.7 L430.0 417.5 L430.5 415.6 L431.0 414.0 L431.5 412.8 L432.0 412.0 L432.5 411.5 L433.0 411.4 L433.5 411.7 L434.0 412.3 L434.5 413.4 L435.0 414.8 L435.5 416.5 L436.0 418.7 L436.5 421.2 L437.0 424.0 L437.5 427.2 L438.0 430.8 L438.5 434.6 L439.0 438.8 L439.5 443.3 L440.0 448.0 L440.5 453.1 L441.0 458.4 L441.5 463.9 L442.0 469.7 L442.5 475.6 L443.0 481.8 L443.5 488.2 L444.0 494.6 L444.5 501.3 L445.0 508.0 L445.5 514.9 L446.0 521.8 L446.5 528.8 L447.0 535.8 L447.5 542.8 L448.0 549.8 L448.5 556.8 L449.0 563.8 L449.5 570.6 L450.0 577.4 L450.5 584.1 L451.0 590.7 L451.5 597.1 L452.0 603.3 L452.5 609.4 L453.0 615.2 L453.5 620.8 L454.0 626.2 L454.5 631.4 L455.0 636.3 L455.5 640.8 L456.0 645.1 L456.5 649.1 L457.0 652.8 L457.5 656.1 L458.0 659.1 L458.5 661.8 L459.0 664.1 L459.5 666.0 L460.0 667.5 L460.5 668.7 L461.0 669.5 L461.5 669.9 L462.0 670.0 L462.5 669.6 L463.0 668.9 L463.5 667.9 L464.0 666.5 L464.5 664.7 L465.0 662.5 L465.5 660.1 L466.0 657.2 L466.5 654.1 L467.0 650.6 L467.5 646.8 L468.0 642.7 L468.5 638.3 L469.0 633.7 L469.5 628.8 L470.0 623.6 L470.5 618.2 L471.0 612.5 L471.5 606.7 L472.0 600.7 L472.5 594.5 L473.0 588.2 L473.5 581.7 L474.0 575.1 L474.5 568.4 L475.0 561.6 L475.5 554.8 L476.0 547.9 L476.5 541.1 L477.0 534.2 L477.5 527.3 L478.0 520.5 L478.5 513.7 L479.0 507.0 L479.5 500.4 L480.0 493.9 L480.5 487.6 L481.0 481.4 L481.5 475.4 L482.0 469.6 L482.5 463.9 L483.0 458.5 L483.5 453.3 L484.0 448.4 L484.5 443.8 L485.0 439.4 L485.5 435.3 L486.0 431.5 L486.5 428.0 L487.0 424.9 L487.5 422.0 L488.0 419.6 L488.5 417.4 L489.0 415.6 L489.5 414.2 L490.0 413.2 L490.5 412.5 L491.0 412.1 L491.5 412.2 L492.0 412.6 L492.5 413.4 L493.0 414.6 L493.5 416.2 L494.0 418.1 L494.5 420.4 L495.0 423.1 L495.5 426.1 L496.0 429.5 L496.5 433.2 L497.0 437.3 L497.5 441.6 L498.0 446.3 L498.5 451.2 L499.0 456.4 L499.5 461.8 L500.0 467.5 L500.5 473.4 L501.0 479.6 L501.5 485.9 L502.0 492.3 L502.5 498.9 L503.0 505.7 L503.5 512.5 L504.0 519.4 L504.5 526.4 L505.0 533.5 L505.5 540.5 L506.0 547.6 L506.5 554.7 L507.0 561.7 L507.5 568.6 L508.0 575.5 L508.5 582.2 L509.0 588.9 L509.5 595.4 L510.0 601.7 L510.5 607.9 L511.0 613.8 L511.5 619.5 L512.0 625.0 L512.5 630.3 L513.0 635.3 L513.5 640.0 L514.0 644.4 L514.5 648.5 L515.0 652.3 L515.5 655.7 L516.0 658.8 L516.5 661.6 L517.0 663.9 L517.5 666.0 L518.0 667.6 L518.5 668.9 L519.0 669.8 L519.5 670.3 L520.0 670.4 L520.5 670.1 L521.0 669.5 L521.5 668.5 L522.0 667.1 L522.5 665.3 L523.0 663.2 L523.5 660.7 L524.0 657.9 L524.5 654.8 L525.0 651.3 L525.5 647.5 L526.0 643.3 L526.5 638.9 L527.0 634.2 L527.5 629.2 L528.0 623.9 L528.5 618.4 L529.0 612.7 L529.5 606.8 L530.0 600.6 L530.5 594.3 L531.0 587.8 L531.5 581.2 L532.0 574.5 L532.5 567.6 L533.0 560.7 L533.5 553.7 L534.0 546.6 L534.5 539.6 L535.0 532.5 L535.5 525.4 L536.0 518.4 L536.5 511.4 L537.0 504.5 L537.5 497.7 L538.0 491.0 L538.5 484.5 L539.0 478.0 L539.5 471.8 L540.0 465.7 L540.5 459.9 L541.0 454.2 L541.5 448.8 L542.0 443.7 L542.5 438.8 L543.0 434.2 L543.5 429.9 L544.0 425.9 L544.5 422.2 L545.0 418.8 L545.5 415.8 L546.0 413.1 L546.5 410.8 L547.0 408.8 L547.5 407.2 L548.0 406.0 L548.5 405.1 L549.0 404.6 L549.5 404.5 L550.0 404.8 L550.5 405.5 L551.0 406.6 L551.5 408.1 L552.0 410.0 L552.5 412.3 L553.0 414.9 L553.5 418.0 L554.0 421.4 L554.5 425.2 L555.0 429.3 L555.5 433.8 L556.0 438.6 L556.5 443.6 L557.0 449.0 L557.5 454.7 L558.0 460.6 L558.5 466.7 L559.0 473.1 L559.5 479.6 L560.0 486.4 L560.5 493.3 L561.0 500.3 L561.5 507.5 L562.0 514.8 L562.5 522.1 L563.0 529.5 L563.5 536.9 L564.0 544.4 L564.5 551.8 L565.0 559.2 L565.5 566.5 L566.0 573.7 L566.5 580.9 L567.0 587.9 L567.5 594.8 L568.0 601.5 L568.5 608.0 L569.0 614.3 L569.5 620.4 L570.0 626.3 L570.5 631.9 L571.0 637.2 L571.5 642.2 L572.0 646.9 L572.5 651.3 L573.0 655.4 L573.5 659.1 L574.0 662.4 L574.5 665.4 L575.0 668.0 L575.5 670.2 L576.0 672.0 L576.5 673.5 L577.0 674.5 L577.5 675.1 L578.0 675.3 L578.5 675.1 L579.0 674.5 L579.5 673.6 L580.0 672.2 L580.5 670.5 L581.0 668.5 L581.5 666.0 L582.0 663.2 L582.5 660.1 L583.0 656.6 L583.5 652.8 L584.0 648.6 L584.5 644.2 L585.0 639.4 L585.5 634.4 L586.0 629.1 L586.5 623.6 L587.0 617.8 L587.5 611.8 L588.0 605.6 L588.5 599.2 L589.0 592.7 L589.5 586.0 L590.0 579.1 L590.5 572.2 L591.0 565.2 L591.5 558.0 L592.0 550.9 L592.5 543.7 L593.0 536.5 L593.5 529.3 L594.0 522.2 L594.5 515.0 L595.0 508.0 L595.5 501.1 L596.0 494.2 L596.5 487.5 L597.0 481.0 L597.5 474.6 L598.0 468.4 L598.5 462.4 L599.0 456.6 L599.5 451.1 L600.0 445.8 L600.5 440.8 L601.0 436.0 L601.5 431.6 L602.0 427.4 L602.5 423.6 L603.0 420.1 L603.5 417.0 L604.0 414.2 L604.5 411.7 L605.0 409.7 L605.5 408.0 L606.0 406.6 L606.5 405.7 L607.0 405.1 L607.5 404.9 L608.0 405.1 L608.5 405.7 L609.0 406.8 L609.5 408.2 L610.0 410.0 L610.5 412.3 L611.0 414.9 L611.5 417.9 L612.0 421.3 L612.5 425.0 L613.0 429.1 L613.5 433.5 L614.0 438.3 L614.5 443.4 L615.0 448.7 L615.5 454.4 L616.0 460.3 L616.5 466.4 L617.0 472.8 L617.5 479.4 L618.0 486.1 L618.5 493.1 L619.0 500.1 L619.5 507.3 L620.0 514.6 L620.5 522.0 L621.0 529.4 L621.5 536.9 L622.0 544.3 L622.5 551.8 L623.0 559.2 L623.5 566.5 L624.0 573.8 L624.5 581.0 L625.0 588.0 L625.5 594.9 L626.0 601.6 L626.5 608.2 L627.0 614.5 L627.5 620.6 L628.0 626.5 L628.5 632.1 L629.0 637.4 L629.5 642.4 L630.0 647.1 L630.5 651.4 L631.0 655.5 L631.5 659.1 L632.0 662.4 L632.5 665.4 L633.0 667.9 L633.5 670.1 L634.0 671.8 L634.5 673.2 L635.0 674.1 L635.5 674.7 L636.0 674.8 L636.5 674.5 L637.0 673.8 L637.5 672.8 L638.0 671.3 L638.5 669.5 L639.0 667.3 L639.5 664.7 L640.0 661.7 L640.5 658.4 L641.0 654.7 L641.5 650.7 L642.0 646.4 L642.5 641.7 L643.0 636.8 L643.5 631.6 L644.0 626.1 L644.5 620.3 L645.0 614.3 L645.5 608.1 L646.0 601.7 L646.5 595.1 L647.0 588.4 L647.5 581.5 L648.0 574.4 L648.5 567.3 L649.0 560.1 L649.5 552.8 L650.0 545.5 L650.5 538.2 L651.0 530.8 L651.5 523.5 L652.0 516.3 L652.5 509.1 L653.0 502.0 L653.5 495.0 L654.0 488.1 L654.5 481.4 L655.0 474.8 L655.5 468.4 L656.0 462.3 L656.5 456.3 L657.0 450.6 L657.5 445.2 L658.0 440.0 L658.5 435.1 L659.0 430.5 L659.5 426.3 L660.0 422.3 L660.5 418.7 L661.0 415.5 L661.5 412.6 L662.0 410.1 L662.5 407.9" fill="none" stroke="#000000" stroke-width="1.05" shape-rendering="geometricPrecision" stroke-linejoin="round"/><path d="M81.5 539.3 L82.0 539.3 L82.5 539.3 L83.0 539.3 L83.5 539.3 L84.0 539.3 L84.5 539.3 L85.0 539.3 L85.5 539.3 L86.0 539.4 L86.5 539.4 L87.0 539.4 L87.5 539.4 L88.0 539.4 L88.5 539.4 L89.0 539.4 L89.5 539.5 L90.0 539.5 L90.5 539.6 L91.0 539.7 L91.5 539.7 L92.0 539.8 L92.5 539.9 L93.0 540.0 L93.5 540.1 L94.0 540.2 L94.5 540.3 L95.0 540.4 L95.5 540.6 L96.0 540.7 L96.5 540.8 L97.0 541.0 L97.5 541.1 L98.0 541.2 L98.5 541.4 L99.0 541.6 L99.5 541.8 L100.0 542.1 L100.5 542.4 L101.0 542.7 L101.5 543.0 L102.0 543.3 L102.5 543.7 L103.0 544.1 L103.5 544.5 L104.0 544.8 L104.5 545.2 L105.0 545.6 L105.5 546.0 L106.0 546.4 L106.5 546.7 L107.0 547.1 L107.5 547.4 L108.0 547.8 L108.5 548.2 L109.0 548.5 L109.5 548.9 L110.0 549.3 L110.5 549.7 L111.0 550.0 L111.5 550.4 L112.0 550.8 L112.5 551.2 L113.0 551.7 L113.5 552.2 L114.0 552.6 L114.5 553.0 L115.0 553.4 L115.5 553.6 L116.0 553.8 L116.5 553.8 L117.0 553.7 L117.5 553.5 L118.0 553.3 L118.5 553.0 L119.0 552.6 L119.5 552.2 L120.0 551.8 L120.5 551.4 L121.0 550.9 L121.5 550.5 L122.0 550.1 L122.5 549.6 L123.0 549.1 L123.5 548.5 L124.0 547.9 L124.5 547.3 L125.0 546.6 L125.5 545.9 L126.0 545.1 L126.5 544.3 L127.0 543.5 L127.5 542.6 L128.0 541.6 L128.5 540.5 L129.0 539.2 L129.5 537.7 L130.0 536.1 L130.5 534.4 L131.0 532.6 L131.5 530.8 L132.0 528.9 L132.5 527.0 L133.0 525.2 L133.5 523.3 L134.0 521.5 L134.5 519.8 L135.0 518.2 L135.5 516.7 L136.0 515.4 L136.5 514.2 L137.0 513.1 L137.5 511.9 L138.0 510.7 L138.5 509.4 L139.0 508.2 L139.5 507.1 L140.0 505.9 L140.5 504.8 L141.0 503.8 L141.5 502.9 L142.0 502.0 L142.5 501.2 L143.0 500.6 L143.5 500.0 L144.0 499.6 L144.5 499.4 L145.0 499.3 L145.5 499.4 L146.0 499.6 L146.5 500.0 L147.0 500.6 L147.5 501.3 L148.0 502.1 L148.5 503.2 L149.0 504.3 L149.5 505.6 L150.0 507.1 L150.5 508.6 L151.0 510.3 L151.5 512.2 L152.0 514.1 L152.5 516.2 L153.0 518.3 L153.5 520.6 L154.0 523.0 L154.5 525.4 L155.0 527.9 L155.5 530.5 L156.0 533.2 L156.5 535.9 L157.0 538.6 L157.5 541.4 L158.0 544.2 L158.5 547.0 L159.0 549.8 L159.5 552.7 L160.0 555.5 L160.5 558.3 L161.0 561.0 L161.5 563.8 L162.0 566.5 L162.5 569.1 L163.0 571.7 L163.5 574.2 L164.0 576.6 L164.5 578.9 L165.0 581.2 L165.5 583.3 L166.0 585.4 L166.5 587.3 L167.0 589.1 L167.5 590.8 L168.0 592.3 L168.5 593.8 L169.0 595.0 L169.5 596.2 L170.0 597.1 L170.5 598.0 L171.0 598.7 L171.5 599.2 L172.0 599.5 L172.5 599.7 L173.0 599.8 L173.5 599.7 L174.0 599.3 L174.5 598.8 L175.0 598.0 L175.5 597.1 L176.0 596.0 L176.5 594.7 L177.0 593.2 L177.5 591.5 L178.0 589.6 L178.5 587.6 L179.0 585.4 L179.5 583.1 L180.0 580.6 L180.5 577.9 L181.0 575.1 L181.5 572.2 L182.0 569.2 L182.5 566.1 L183.0 562.9 L183.5 559.6 L184.0 556.2 L184.5 552.7 L185.0 549.2 L185.5 545.7 L186.0 542.1 L186.5 538.5 L187.0 534.8 L187.5 531.2 L188.0 527.6 L188.5 524.0 L189.0 520.4 L189.5 516.9 L190.0 513.4 L190.5 510.0 L191.0 506.6 L191.5 503.4 L192.0 500.2 L192.5 497.1 L193.0 494.2 L193.5 491.4 L194.0 488.7 L194.5 486.1 L195.0 483.7 L195.5 481.5 L196.0 479.4 L196.5 477.4 L197.0 475.7 L197.5 474.1 L198.0 472.7 L198.5 471.5 L199.0 470.5 L199.5 469.7 L200.0 469.1 L200.5 468.7 L201.0 468.4 L201.5 468.4 L202.0 468.6 L202.5 469.1 L203.0 469.7 L203.5 470.6 L204.0 471.7 L204.5 473.0 L205.0 474.6 L205.5 476.3 L206.0 478.3 L206.5 480.5 L207.0 482.8 L207.5 485.3 L208.0 488.0 L208.5 490.9 L209.0 494.0 L209.5 497.2 L210.0 500.5 L210.5 504.0 L211.0 507.5 L211.5 511.2 L212.0 515.0 L212.5 518.9 L213.0 522.9 L213.5 526.9 L214.0 531.0 L214.5 535.1 L215.0 539.2 L215.5 543.4 L216.0 547.5 L216.5 551.7 L217.0 555.8 L217.5 559.9 L218.0 563.9 L218.5 567.9 L219.0 571.8 L219.5 575.6 L220.0 579.3 L220.5 582.9 L221.0 586.4 L221.5 589.8 L222.0 593.0 L222.5 596.1 L223.0 599.0 L223.5 601.7 L224.0 604.3 L224.5 606.7 L225.0 608.9 L225.5 610.9 L226.0 612.7 L226.5 614.3 L227.0 615.6 L227.5 616.8 L228.0 617.7 L228.5 618.4 L229.0 618.9 L229.5 619.2 L230.0 619.2 L230.5 619.0 L231.0 618.5 L231.5 617.8 L232.0 616.9 L232.5 615.7 L233.0 614.3 L233.5 612.6 L234.0 610.8 L234.5 608.7 L235.0 606.4 L235.5 603.9 L236.0 601.2 L236.5 598.3 L237.0 595.2 L237.5 591.9 L238.0 588.5 L238.5 584.9 L239.0 581.2 L239.5 577.3 L240.0 573.4 L240.5 569.3 L241.0 565.0 L241.5 560.8 L242.0 556.4 L242.5 551.9 L243.0 547.4 L243.5 542.9 L244.0 538.3 L244.5 533.8 L245.0 529.2 L245.5 524.6 L246.0 520.1 L246.5 515.6 L247.0 511.1 L247.5 506.7 L248.0 502.4 L248.5 498.1 L249.0 494.0 L249.5 489.9 L250.0 486.0 L250.5 482.2 L251.0 478.6 L251.5 475.1 L252.0 471.8 L252.5 468.6 L253.0 465.7 L253.5 462.9 L254.0 460.3 L254.5 457.9 L255.0 455.7 L255.5 453.8 L256.0 452.1 L256.5 450.6 L257.0 449.3 L257.5 448.2 L258.0 447.5 L258.5 446.9 L259.0 446.6 L259.5 446.5 L260.0 446.7 L260.5 447.2 L261.0 448.0 L261.5 449.1 L262.0 450.5 L262.5 452.2 L263.0 454.1 L263.5 456.3 L264.0 458.8 L264.5 461.6 L265.0 464.6 L265.5 467.8 L266.0 471.3 L266.5 475.0 L267.0 478.9 L267.5 483.0 L268.0 487.3 L268.5 491.8 L269.0 496.4 L269.5 501.2 L270.0 506.1 L270.5 511.1 L271.0 516.2 L271.5 521.5 L272.0 526.7 L272.5 532.1 L273.0 537.4 L273.5 542.8 L274.0 548.2 L274.5 553.6 L275.0 559.0 L275.5 564.3 L276.0 569.5 L276.5 574.7 L277.0 579.8 L277.5 584.8 L278.0 589.6 L278.5 594.4 L279.0 598.9 L279.5 603.3 L280.0 607.5 L280.5 611.6 L281.0 615.4 L281.5 619.0 L282.0 622.4 L282.5 625.6 L283.0 628.5 L283.5 631.1 L284.0 633.5 L284.5 635.6 L285.0 637.4 L285.5 639.0 L286.0 640.3 L286.5 641.2 L287.0 641.9 L287.5 642.3 L288.0 642.4 L288.5 642.2 L289.0 641.7 L289.5 640.8 L290.0 639.7 L290.5 638.2 L291.0 636.5 L291.5 634.5 L292.0 632.2 L292.5 629.6 L293.0 626.7 L293.5 623.6 L294.0 620.2 L294.5 616.6 L295.0 612.8 L295.5 608.7 L296.0 604.4 L296.5 599.9 L297.0 595.3 L297.5 590.4 L298.0 585.4 L298.5 580.3 L299.0 575.1 L299.5 569.7 L300.0 564.2 L300.5 558.7 L301.0 553.1 L301.5 547.5 L302.0 541.8 L302.5 536.1 L303.0 530.4 L303.5 524.8 L304.0 519.1 L304.5 513.6 L305.0 508.1 L305.5 502.7 L306.0 497.4 L306.5 492.2 L307.0 487.1 L307.5 482.3 L308.0 477.5 L308.5 473.0 L309.0 468.6 L309.5 464.4 L310.0 460.5 L310.5 456.8 L311.0 453.3 L311.5 450.1 L312.0 447.1 L312.5 444.4 L313.0 442.0 L313.5 439.9 L314.0 438.0 L314.5 436.5 L315.0 435.2 L315.5 434.2 L316.0 433.6 L316.5 433.3 L317.0 433.2 L317.5 433.5 L318.0 434.1 L318.5 435.0 L319.0 436.3 L319.5 437.8 L320.0 439.6 L320.5 441.8 L321.0 444.2 L321.5 446.9 L322.0 449.9 L322.5 453.2 L323.0 456.7 L323.5 460.4 L324.0 464.4 L324.5 468.7 L325.0 473.1 L325.5 477.8 L326.0 482.6 L326.5 487.6 L327.0 492.7 L327.5 498.0 L328.0 503.5 L328.5 509.0 L329.0 514.6 L329.5 520.4 L330.0 526.1 L330.5 531.9 L331.0 537.8 L331.5 543.6 L332.0 549.5 L332.5 555.3 L333.0 561.1 L333.5 566.8 L334.0 572.5 L334.5 578.0 L335.0 583.5 L335.5 588.8 L336.0 594.0 L336.5 599.0 L337.0 603.9 L337.5 608.6 L338.0 613.1 L338.5 617.3 L339.0 621.4 L339.5 625.2 L340.0 628.8 L340.5 632.1 L341.0 635.1 L341.5 637.9 L342.0 640.4 L342.5 642.6 L343.0 644.5 L343.5 646.1 L344.0 647.4 L344.5 648.3 L345.0 649.0 L345.5 649.3 L346.0 649.4 L346.5 649.1 L347.0 648.5 L347.5 647.5 L348.0 646.3 L348.5 644.7 L349.0 642.8 L349.5 640.6 L350.0 638.1 L350.5 635.3 L351.0 632.3 L351.5 628.9 L352.0 625.3 L352.5 621.4 L353.0 617.3 L353.5 613.0 L354.0 608.4 L354.5 603.6 L355.0 598.7 L355.5 593.5 L356.0 588.2 L356.5 582.7 L357.0 577.1 L357.5 571.4 L358.0 565.6 L358.5 559.7 L359.0 553.7 L359.5 547.6 L360.0 541.6 L360.5 535.5 L361.0 529.4 L361.5 523.4 L362.0 517.3 L362.5 511.3 L363.0 505.4 L363.5 499.6 L364.0 493.9 L364.5 488.3 L365.0 482.8 L365.5 477.5 L366.0 472.3 L366.5 467.4 L367.0 462.6 L367.5 458.0 L368.0 453.7 L368.5 449.6 L369.0 445.7 L369.5 442.1 L370.0 438.7 L370.5 435.7 L371.0 432.9 L371.5 430.4 L372.0 428.2 L372.5 426.3 L373.0 424.7 L373.5 423.5 L374.0 422.5 L374.5 421.9 L375.0 421.6 L375.5 421.7 L376.0 422.1 L376.5 422.8 L377.0 423.9 L377.5 425.4 L378.0 427.2 L378.5 429.3 L379.0 431.8 L379.5 434.6 L380.0 437.7 L380.5 441.1 L381.0 444.8 L381.5 448.9 L382.0 453.2 L382.5 457.7 L383.0 462.5 L383.5 467.6 L384.0 472.8 L384.5 478.3 L385.0 483.9 L385.5 489.8 L386.0 495.7 L386.5 501.9 L387.0 508.1 L387.5 514.4 L388.0 520.8 L388.5 527.3 L389.0 533.8 L389.5 540.4 L390.0 546.9 L390.5 553.5 L391.0 560.0 L391.5 566.4 L392.0 572.8 L392.5 579.1 L393.0 585.2 L393.5 591.3 L394.0 597.2 L394.5 602.9 L395.0 608.4 L395.5 613.8 L396.0 618.9 L396.5 623.8 L397.0 628.5 L397.5 632.9 L398.0 637.0 L398.5 640.8 L399.0 644.4 L399.5 647.6 L400.0 650.5 L400.5 653.2 L401.0 655.4 L401.5 657.4 L402.0 659.0 L402.5 660.2 L403.0 661.1 L403.5 661.6 L404.0 661.8 L404.5 661.6 L405.0 661.1 L405.5 660.2 L406.0 658.9 L406.5 657.3 L407.0 655.3 L407.5 653.0 L408.0 650.4 L408.5 647.4 L409.0 644.1 L409.5 640.5 L410.0 636.6 L410.5 632.4 L411.0 627.9 L411.5 623.2 L412.0 618.2 L412.5 613.0 L413.0 607.6 L413.5 601.9 L414.0 596.1 L414.5 590.1 L415.0 584.0 L415.5 577.7 L416.0 571.3 L416.5 564.8 L417.0 558.3 L417.5 551.7 L418.0 545.0 L418.5 538.3 L419.0 531.7 L419.5 525.0 L420.0 518.4 L420.5 511.9 L421.0 505.4 L421.5 499.0 L422.0 492.8 L422.5 486.7 L423.0 480.7 L423.5 474.9 L424.0 469.3 L424.5 463.9 L425.0 458.8 L425.5 453.8 L426.0 449.2 L426.5 444.7 L427.0 440.6 L427.5 436.8 L428.0 433.2 L428.5 430.0 L429.0 427.1 L429.5 424.5 L430.0 422.3 L430.5 420.4 L431.0 418.8 L431.5 417.6 L432.0 416.8 L432.5 416.3 L433.0 416.2 L433.5 416.5 L434.0 417.1 L434.5 418.0 L435.0 419.3 L435.5 421.0 L436.0 422.9 L436.5 425.3 L437.0 427.9 L437.5 430.9 L438.0 434.2 L438.5 437.8 L439.0 441.6 L439.5 445.8 L440.0 450.2 L440.5 454.9 L441.0 459.9 L441.5 465.0 L442.0 470.4 L442.5 476.0 L443.0 481.7 L443.5 487.7 L444.0 493.7 L444.5 499.9 L445.0 506.3 L445.5 512.7 L446.0 519.2 L446.5 525.7 L447.0 532.3 L447.5 539.0 L448.0 545.6 L448.5 552.2 L449.0 558.8 L449.5 565.3 L450.0 571.8 L450.5 578.1 L451.0 584.4 L451.5 590.5 L452.0 596.5 L452.5 602.3 L453.0 608.0 L453.5 613.5 L454.0 618.7 L454.5 623.7 L455.0 628.5 L455.5 633.1 L456.0 637.3 L456.5 641.3 L457.0 645.0 L457.5 648.4 L458.0 651.5 L458.5 654.3 L459.0 656.8 L459.5 658.9 L460.0 660.7 L460.5 662.1 L461.0 663.2 L461.5 663.9 L462.0 664.3 L462.5 664.4 L463.0 664.0 L463.5 663.3 L464.0 662.2 L464.5 660.8 L465.0 658.9 L465.5 656.8 L466.0 654.2 L466.5 651.3 L467.0 648.1 L467.5 644.6 L468.0 640.7 L468.5 636.5 L469.0 632.0 L469.5 627.3 L470.0 622.3 L470.5 617.0 L471.0 611.5 L471.5 605.8 L472.0 599.8 L472.5 593.7 L473.0 587.4 L473.5 581.0 L474.0 574.4 L474.5 567.7 L475.0 561.0 L475.5 554.1 L476.0 547.2 L476.5 540.3 L477.0 533.4 L477.5 526.5 L478.0 519.6 L478.5 512.7 L479.0 506.0 L479.5 499.3 L480.0 492.7 L480.5 486.3 L481.0 480.0 L481.5 473.9 L482.0 467.9 L482.5 462.2 L483.0 456.7 L483.5 451.4 L484.0 446.4 L484.5 441.7 L485.0 437.2 L485.5 433.0 L486.0 429.1 L486.5 425.6 L487.0 422.4 L487.5 419.5 L488.0 416.9 L488.5 414.8 L489.0 412.9 L489.5 411.5 L490.0 410.4 L490.5 409.7 L491.0 409.3 L491.5 409.4 L492.0 409.8 L492.5 410.6 L493.0 411.8 L493.5 413.4 L494.0 415.4 L494.5 417.7 L495.0 420.4 L495.5 423.5 L496.0 426.9 L496.5 430.7 L497.0 434.7 L497.5 439.1 L498.0 443.8 L498.5 448.8 L499.0 454.1 L499.5 459.6 L500.0 465.3 L500.5 471.3 L501.0 477.5 L501.5 483.9 L502.0 490.4 L502.5 497.1 L503.0 503.9 L503.5 510.8 L504.0 517.8 L504.5 524.9 L505.0 532.0 L505.5 539.1 L506.0 546.3 L506.5 553.4 L507.0 560.5 L507.5 567.5 L508.0 574.4 L508.5 581.3 L509.0 588.0 L509.5 594.6 L510.0 601.0 L510.5 607.2 L511.0 613.2 L511.5 619.0 L512.0 624.6 L512.5 629.9 L513.0 634.9 L513.5 639.7 L514.0 644.1 L514.5 648.2 L515.0 652.1 L515.5 655.5 L516.0 658.7 L516.5 661.5 L517.0 663.9 L517.5 665.9 L518.0 667.6 L518.5 668.9 L519.0 669.8 L519.5 670.3 L520.0 670.4 L520.5 670.1 L521.0 669.5 L521.5 668.5 L522.0 667.1 L522.5 665.3 L523.0 663.1 L523.5 660.6 L524.0 657.8 L524.5 654.6 L525.0 651.1 L525.5 647.2 L526.0 643.0 L526.5 638.6 L527.0 633.8 L527.5 628.8 L528.0 623.5 L528.5 618.0 L529.0 612.2 L529.5 606.2 L530.0 600.0 L530.5 593.7 L531.0 587.2 L531.5 580.6 L532.0 573.8 L532.5 566.9 L533.0 560.0 L533.5 553.0 L534.0 546.0 L534.5 538.9 L535.0 531.8 L535.5 524.8 L536.0 517.8 L536.5 510.9 L537.0 504.0 L537.5 497.3 L538.0 490.7 L538.5 484.2 L539.0 477.9 L539.5 471.8 L540.0 465.8 L540.5 460.1 L541.0 454.6 L541.5 449.4 L542.0 444.4 L542.5 439.7 L543.0 435.3 L543.5 431.2 L544.0 427.4 L544.5 423.9 L545.0 420.8 L545.5 418.0 L546.0 415.6 L546.5 413.5 L547.0 411.8 L547.5 410.5 L548.0 409.6 L548.5 409.0 L549.0 408.8 L549.5 409.0 L550.0 409.5 L550.5 410.5 L551.0 411.8 L551.5 413.4 L552.0 415.4 L552.5 417.8 L553.0 420.5 L553.5 423.6 L554.0 426.9 L554.5 430.6 L555.0 434.7 L555.5 439.0 L556.0 443.6 L556.5 448.4 L557.0 453.6 L557.5 458.9 L558.0 464.5 L558.5 470.3 L559.0 476.3 L559.5 482.5 L560.0 488.9 L560.5 495.4 L561.0 502.0 L561.5 508.7 L562.0 515.6 L562.5 522.5 L563.0 529.4 L563.5 536.4 L564.0 543.3 L564.5 550.3 L565.0 557.2 L565.5 564.1 L566.0 571.0 L566.5 577.7 L567.0 584.3 L567.5 590.8 L568.0 597.2 L568.5 603.4 L569.0 609.4 L569.5 615.2 L570.0 620.8 L570.5 626.1 L571.0 631.3 L571.5 636.1 L572.0 640.7 L572.5 645.0 L573.0 649.1 L573.5 652.8 L574.0 656.1 L574.5 659.2 L575.0 661.9 L575.5 664.3 L576.0 666.3 L576.5 667.9 L577.0 669.2 L577.5 670.2 L578.0 670.7 L578.5 670.9 L579.0 670.7 L579.5 670.1 L580.0 669.1 L580.5 667.8 L581.0 666.1 L581.5 663.9 L582.0 661.5 L582.5 658.6 L583.0 655.4 L583.5 651.9 L584.0 648.0 L584.5 643.8 L585.0 639.3 L585.5 634.5 L586.0 629.4 L586.5 624.0 L587.0 618.4 L587.5 612.5 L588.0 606.5 L588.5 600.2 L589.0 593.7 L589.5 587.1 L590.0 580.4 L590.5 573.5 L591.0 566.5 L591.5 559.4 L592.0 552.3 L592.5 545.1 L593.0 537.9 L593.5 530.7 L594.0 523.5 L594.5 516.4 L595.0 509.3 L595.5 502.3 L596.0 495.4 L596.5 488.7 L597.0 482.1 L597.5 475.6 L598.0 469.3 L598.5 463.3 L599.0 457.4 L599.5 451.8 L600.0 446.4 L600.5 441.3 L601.0 436.5 L601.5 432.0 L602.0 427.8 L602.5 423.9 L603.0 420.4 L603.5 417.2 L604.0 414.3 L604.5 411.9 L605.0 409.7 L605.5 408.0 L606.0 406.7 L606.5 405.7 L607.0 405.1 L607.5 404.9 L608.0 405.1 L608.5 405.7 L609.0 406.8 L609.5 408.2 L610.0 410.0 L610.5 412.3 L611.0 414.9 L611.5 417.9 L612.0 421.3 L612.5 425.0 L613.0 429.1 L613.5 433.5 L614.0 438.3 L614.5 443.4 L615.0 448.7 L615.5 454.4 L616.0 460.3 L616.5 466.4 L617.0 472.8 L617.5 479.4 L618.0 486.1 L618.5 493.1 L619.0 500.1 L619.5 507.3 L620.0 514.6 L620.5 522.0 L621.0 529.4 L621.5 536.9 L622.0 544.3 L622.5 551.8 L623.0 559.2 L623.5 566.5 L624.0 573.8 L624.5 581.0 L625.0 588.0 L625.5 594.9 L626.0 601.6 L626.5 608.2 L627.0 614.5 L627.5 620.6 L628.0 626.5 L628.5 632.1 L629.0 637.4 L629.5 642.4 L630.0 647.1 L630.5 651.4 L631.0 655.5 L631.5 659.1 L632.0 662.4 L632.5 665.4 L633.0 667.9 L633.5 670.1 L634.0 671.8 L634.5 673.2 L635.0 674.1 L635.5 674.7 L636.0 674.8 L636.5 674.5 L637.0 673.9 L637.5 672.8 L638.0 671.4 L638.5 669.6 L639.0 667.4 L639.5 664.8 L640.0 661.9 L640.5 658.6 L641.0 655.0 L641.5 651.1 L642.0 646.8 L642.5 642.2 L643.0 637.4 L643.5 632.2 L644.0 626.8 L644.5 621.1 L645.0 615.2 L645.5 609.1 L646.0 602.8 L646.5 596.3 L647.0 589.6 L647.5 582.8 L648.0 575.9 L648.5 568.9 L649.0 561.8 L649.5 554.6 L650.0 547.4 L650.5 540.2 L651.0 533.0 L651.5 525.8 L652.0 518.6 L652.5 511.5 L653.0 504.5 L653.5 497.6 L654.0 490.8 L654.5 484.2 L655.0 477.7 L655.5 471.5 L656.0 465.4 L656.5 459.5 L657.0 453.9 L657.5 448.5 L658.0 443.4 L658.5 438.6 L659.0 434.1 L659.5 429.9 L660.0 426.0 L660.5 422.5 L661.0 419.3 L661.5 416.4 L662.0 414.0 L662.5 411.8" fill="none" stroke="#800000" stroke-width="1.05" shape-rendering="geometricPrecision" stroke-linejoin="round"/></g><rect x="681" y="324" width="114" height="151" fill="#000"/><rect x="682" y="325" width="112" height="149" fill="#fefefc"/><rect x="689" y="336" width="32" height="1" fill="#008080"/><text x="727.6" y="337.8" font-family="Liberation Sans" font-size="12" font-weight="normal" fill="#000" text-anchor="start" textLength="57.6" lengthAdjust="spacingAndGlyphs" stroke="#000" stroke-width="0.1" >Membrane</text><rect x="689" y="357" width="32" height="1" fill="#008000"/><text x="727.6" y="358.8" font-family="Liberation Sans" font-size="12" font-weight="normal" fill="#000" text-anchor="start" textLength="32.5" lengthAdjust="spacingAndGlyphs" stroke="#000" stroke-width="0.1" >Duct1</text><rect x="689" y="378" width="32" height="1" fill="#ff00ff"/><text x="727.6" y="379.8" font-family="Liberation Sans" font-size="12" font-weight="normal" fill="#000" text-anchor="start" textLength="33.5" lengthAdjust="spacingAndGlyphs" stroke="#000" stroke-width="0.1" >Duct2</text><rect x="689" y="399" width="32" height="1" fill="#800080"/><text x="727.6" y="400.8" font-family="Liberation Sans" font-size="12" font-weight="normal" fill="#000" text-anchor="start" textLength="33.5" lengthAdjust="spacingAndGlyphs" stroke="#000" stroke-width="0.1" >Duct3</text><rect x="689" y="420" width="32" height="1" fill="#808080"/><text x="727.6" y="421.8" font-family="Liberation Sans" font-size="12" font-weight="normal" fill="#000" text-anchor="start" textLength="33.5" lengthAdjust="spacingAndGlyphs" stroke="#000" stroke-width="0.1" >Duct4</text><rect x="689" y="441" width="32" height="1" fill="#000000"/><text x="727.6" y="442.8" font-family="Liberation Sans" font-size="12" font-weight="normal" fill="#000" text-anchor="start" textLength="33.5" lengthAdjust="spacingAndGlyphs" stroke="#000" stroke-width="0.1" >Duct5</text><rect x="689" y="462" width="32" height="1" fill="#800000"/><text x="727.6" y="463.8" font-family="Liberation Sans" font-size="12" font-weight="normal" fill="#000" text-anchor="start" textLength="33.5" lengthAdjust="spacingAndGlyphs" stroke="#000" stroke-width="0.1" >Duct6</text></svg></div></body></html>
